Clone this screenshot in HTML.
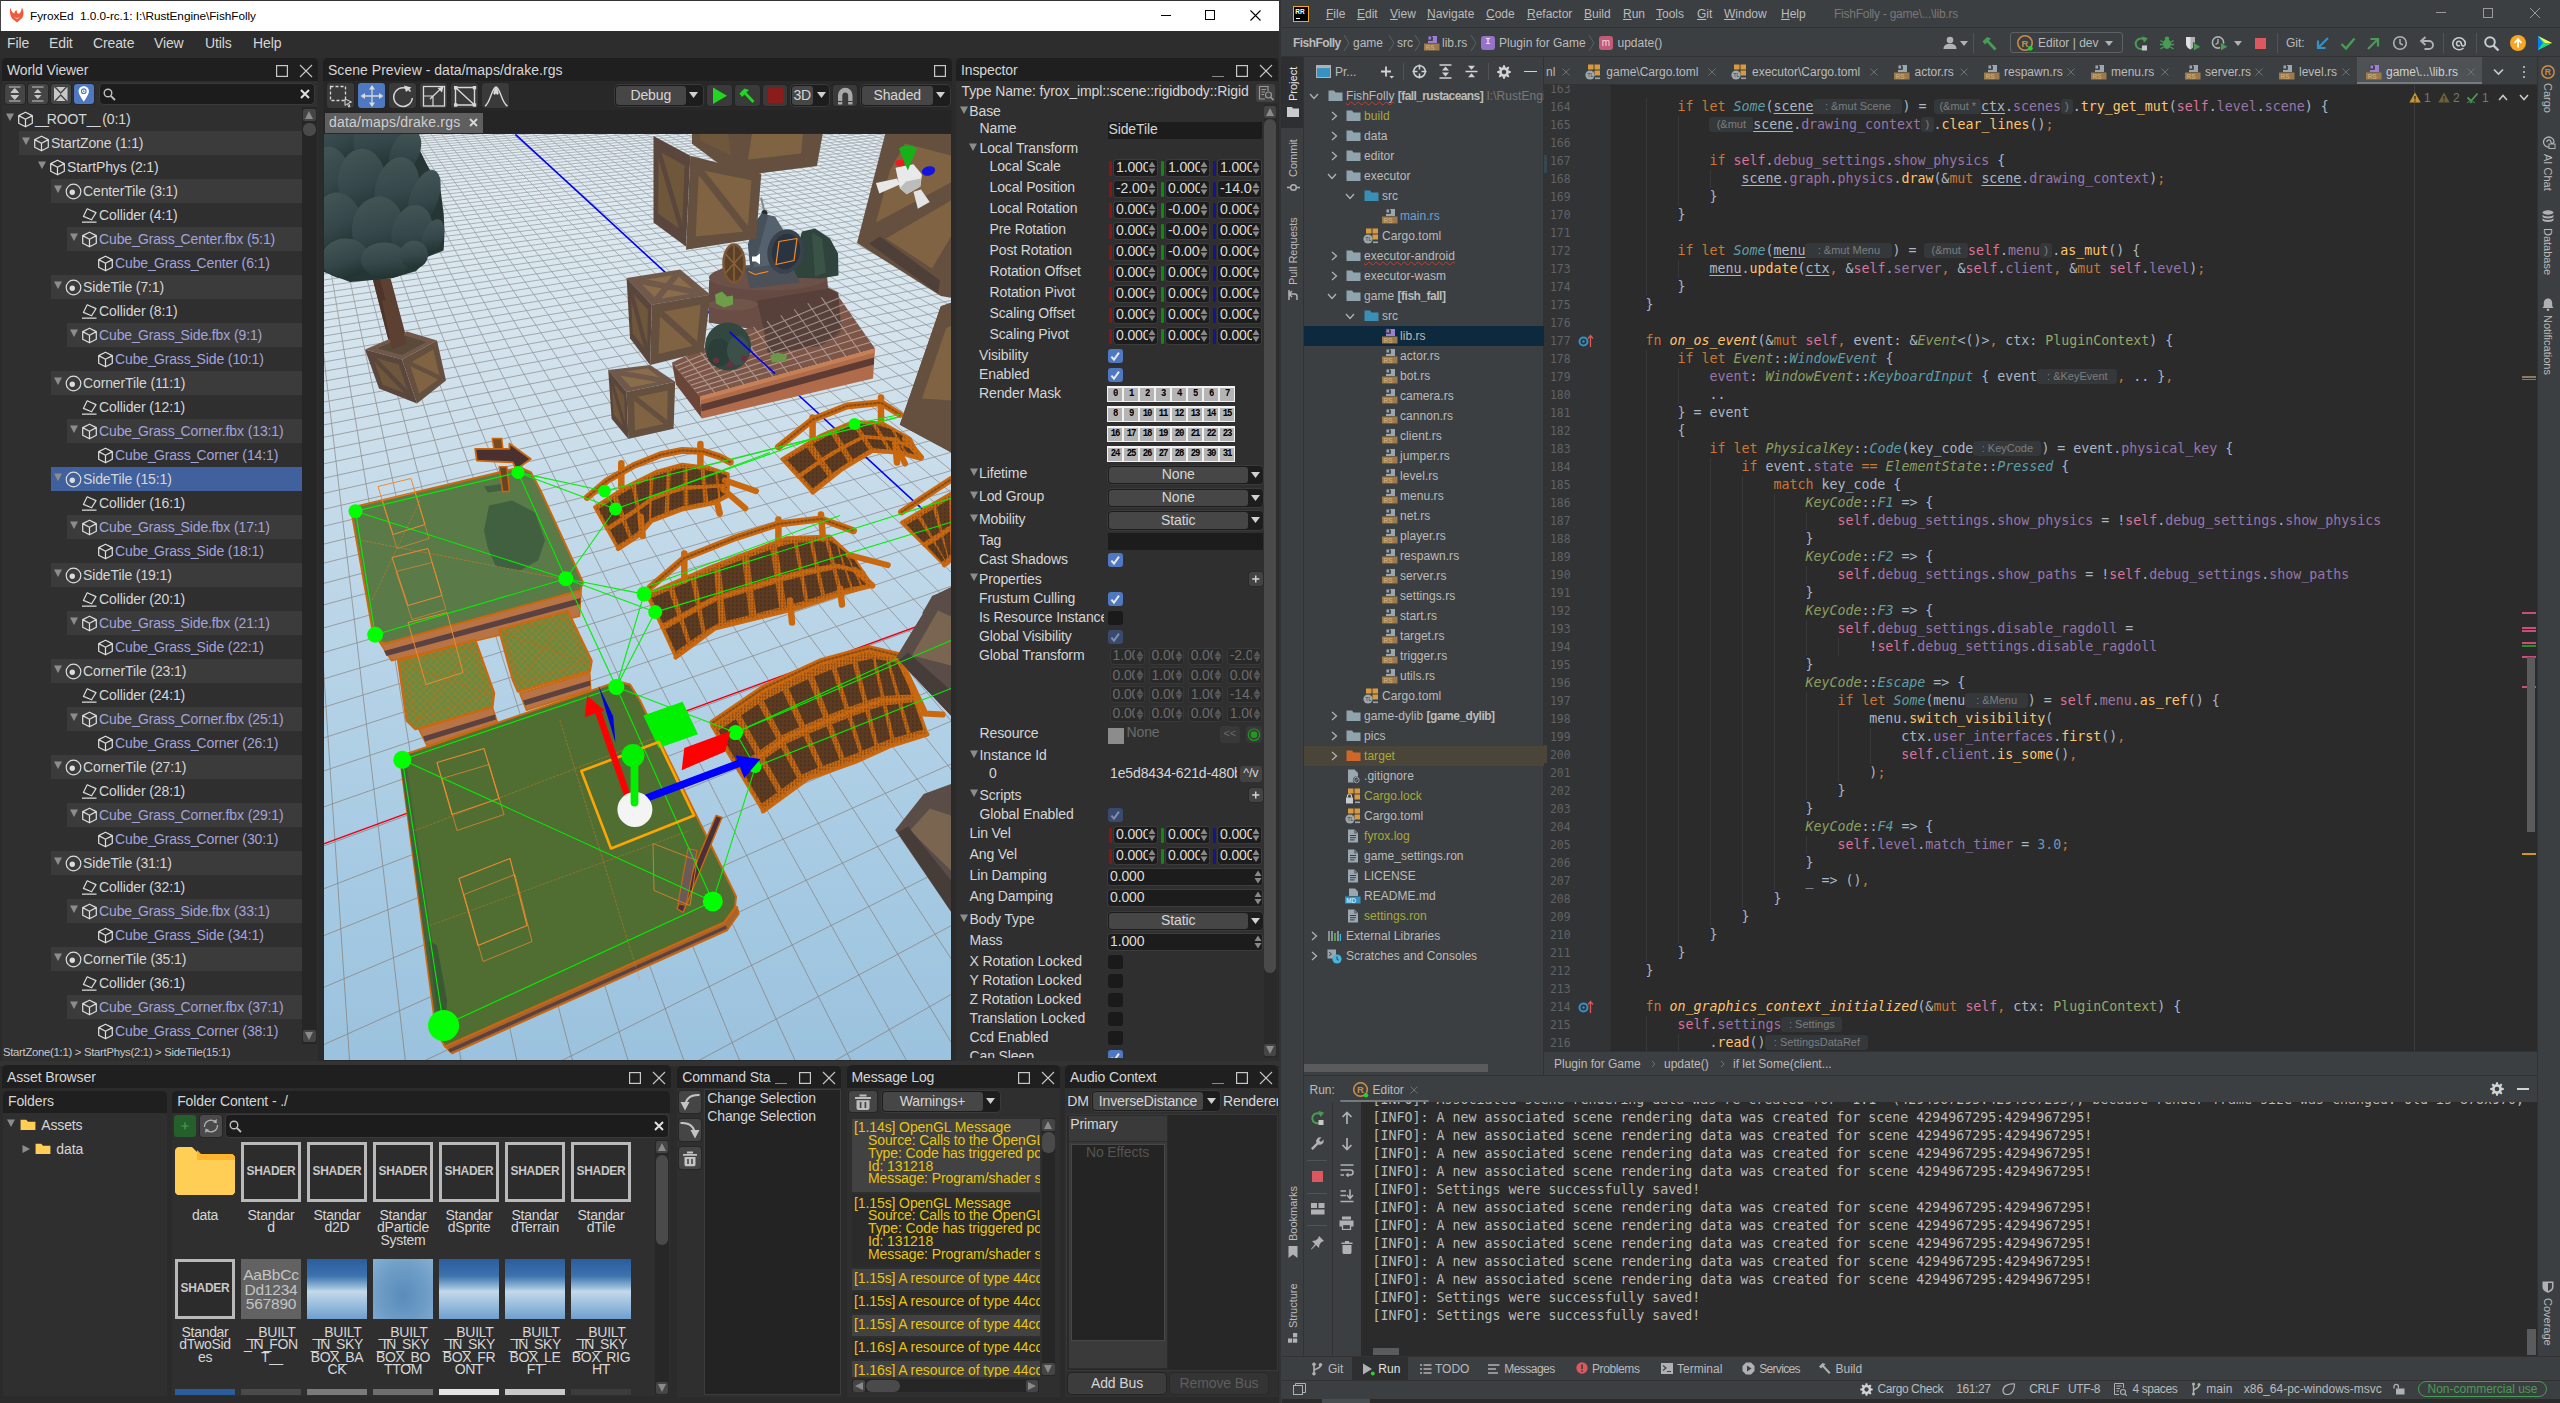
<!DOCTYPE html><html><head><meta charset="utf-8"><title>FyroxEd + RustRover</title><style>
html,body{margin:0;padding:0;background:#2b2b2b;}
#root{position:relative;width:2560px;height:1403px;overflow:hidden;background:#2b2b2b;font-family:"Liberation Sans",sans-serif;}
.a{position:absolute;}
.t{white-space:nowrap;display:block;}
.fy{font-size:14px;color:#d6d6d6;letter-spacing:-0.12px;margin-top:-0.8px;}
.us{letter-spacing:-1.9px;}
.ui{font-size:12px;color:#bbbbbb;}
.mono{font-family:"DejaVu Sans Mono","Liberation Mono",monospace;font-size:13.29px;}

.ui{font-size:12px;color:#bbbbbb;}
.code{font-family:"DejaVu Sans Mono","Liberation Mono",monospace;font-size:13.29px;color:#a9b7c6;white-space:pre;}
.k{color:#cc7832}.f{color:#ffc66d}.fd{color:#ffc66d;font-style:italic}.p{color:#9876aa}.s{color:#d9749c}
.e{color:#5f9ea8;font-style:italic}.ty{color:#8a9f62;font-style:italic}.tn{color:#98a866}.n{color:#6897bb}.u{text-decoration:underline;text-underline-offset:2px}
.h{display:inline-block;font-family:"Liberation Sans",sans-serif;font-size:11px;color:#7a7e80;background:#35383a;border-radius:3px;text-align:center;height:15px;line-height:15px;vertical-align:top;margin-top:1.5px;overflow:hidden;font-style:normal;text-decoration:none;}
.ln{font-family:"DejaVu Sans Mono","Liberation Mono",monospace;font-size:11.4px;color:#606366;}
.vt{transform-origin:0 0;white-space:nowrap;}
</style></head><body><div id="root"><div class="a" style="left:0px;top:0px;width:1279px;height:31px;background:#ffffff;border-top:1px solid #333;border-left:1px solid #444;box-sizing:border-box;"></div><svg class="a" style="left:8px;top:6px;" width="18" height="18" viewBox="0 0 18 18"><path d="M2.2 1.5C3 5 4.4 6.6 6.2 7.6C6.6 5.6 7.4 4.6 8.6 4C8.4 6.4 9.6 7.6 11 7.8C12.6 6.6 13.6 4.2 13.8 1.2C16 5 16 9 14.2 12L9 16.6L4 12.4C2 9.6 1.4 5.4 2.2 1.5Z" fill="#f05a3c"/><path d="M5.6 10.4L9 13.6L12.4 10.4L9 12Z" fill="#fff" opacity=".55"/></svg><span class="a t " style="left:30px;top:6.5px;line-height:18px;height:18px;font-size:11.8px;color:#000;white-space:pre;letter-spacing:-0.05px;">FyroxEd  1.0.0-rc.1: I:\RustEngine\FishFolly</span><div class="a" style="left:1161px;top:15px;width:10px;height:1px;background:#000;"></div><div class="a" style="left:1205px;top:10px;width:10px;height:10px;border:1px solid #000;box-sizing:border-box;"></div><svg class="a" style="left:1250px;top:10px;" width="11" height="11" viewBox="0 0 11 11"><path d="M0.5 0.5L10.5 10.5M10.5 0.5L0.5 10.5" stroke="#000" stroke-width="1.1"/></svg><div class="a" style="left:0px;top:31px;width:1279px;height:27px;background:#2d2d2d;"></div><div class="a" style="left:0px;top:1060.5px;width:1279px;height:5px;background:#333333;"></div><span class="a t fy" style="left:7px;top:35px;line-height:18px;height:18px;">File</span><span class="a t fy" style="left:49px;top:35px;line-height:18px;height:18px;">Edit</span><span class="a t fy" style="left:93px;top:35px;line-height:18px;height:18px;">Create</span><span class="a t fy" style="left:154px;top:35px;line-height:18px;height:18px;">View</span><span class="a t fy" style="left:205px;top:35px;line-height:18px;height:18px;">Utils</span><span class="a t fy" style="left:253px;top:35px;line-height:18px;height:18px;">Help</span><div class="a" style="left:2px;top:59px;width:316px;height:1002px;background:#2f2f2f;border-radius:5px 5px 0 0;"></div><div class="a" style="left:2px;top:58.2px;width:316px;height:22.8px;background:#1f1f1f;border-radius:5px 5px 0 0;"></div><span class="a t fy" style="left:7px;top:61.5px;line-height:18px;height:18px;">World Viewer</span><svg class="a" style="left:299px;top:63.5px;" width="14" height="14" viewBox="0 0 14 14"><path d="M1 1L13 13M13 1L1 13" stroke="#c8c8c8" stroke-width="1.1" fill="none"/></svg><svg class="a" style="left:276px;top:64.5px;" width="12" height="12" viewBox="0 0 12 12"><rect x="0.6" y="0.6" width="10.8" height="10.8" stroke="#c8c8c8" stroke-width="1.2" fill="none"/></svg><div class="a" style="left:5px;top:84px;width:19.5px;height:20px;background:#454545;border-radius:3px;box-shadow:0 0 0 1px #262626;"></div><div class="a" style="left:28px;top:84px;width:19.5px;height:20px;background:#454545;border-radius:3px;box-shadow:0 0 0 1px #262626;"></div><div class="a" style="left:51px;top:84px;width:19.5px;height:20px;background:#454545;border-radius:3px;box-shadow:0 0 0 1px #262626;"></div><div class="a" style="left:74px;top:84px;width:19.5px;height:20px;background:#4f78c2;border-radius:3px;box-shadow:0 0 0 1px #262626;"></div><svg class="a" style="left:5px;top:84px;" width="19.5" height="20" viewBox="0 0 19.5 20"><path d="M4 3H15.5M4 17H15.5M9.75 4.5L6 8.5H13.5ZM9.75 15.5L6 11.5H13.5Z" stroke="#c8c8c8" fill="#c8c8c8" stroke-width="1"/></svg><svg class="a" style="left:28px;top:84px;" width="19.5" height="20" viewBox="0 0 19.5 20"><path d="M4 3H15.5M4 17H15.5" stroke="#c8c8c8" stroke-width="1.2"/><path d="M9.75 5L6 9H13.5ZM9.75 15L6 11H13.5Z" fill="#c8c8c8"/></svg><svg class="a" style="left:51px;top:84px;" width="19.5" height="20" viewBox="0 0 19.5 20"><path d="M3 3L9.75 10L3 17ZM16.5 3L9.75 10L16.5 17ZM5 3H14.5L9.75 8ZM5 17H14.5L9.75 12Z" fill="#c8c8c8"/></svg><svg class="a" style="left:74px;top:84px;" width="19.5" height="20" viewBox="0 0 19.5 20"><path d="M9.75 2.2C6.6 2.2 4.6 4.5 4.6 7.2C4.6 10.8 9.75 17.5 9.75 17.5C9.75 17.5 14.9 10.8 14.9 7.2C14.9 4.5 12.9 2.2 9.75 2.2Z" fill="#fff"/><circle cx="9.75" cy="7.2" r="2.3" fill="none" stroke="#4f78c2" stroke-width="1.1"/><circle cx="9.75" cy="7.2" r=".8" fill="#4f78c2"/></svg><div class="a" style="left:99.5px;top:84px;width:214.5px;height:20px;background:#1c1c1c;border-radius:4px;box-shadow:0 0 0 1px #3a3a3a;"></div><svg class="a" style="left:102px;top:87px;" width="15" height="15" viewBox="0 0 15 15"><circle cx="6" cy="6" r="3.8" stroke="#c0c0c0" stroke-width="1.4" fill="none"/><path d="M8.8 8.8L13 13" stroke="#c0c0c0" stroke-width="1.8"/></svg><svg class="a" style="left:300px;top:89px;" width="10" height="10" viewBox="0 0 10 10"><path d="M1 1L9 9M9 1L1 9" stroke="#e0e0e0" stroke-width="2"/></svg><svg class="a" style="left:6px;top:113.3px;" width="8" height="8" viewBox="0 0 8 8"><path d="M0 0.5H8L4 8Z" fill="#8c8c8c"/></svg><svg class="a" style="left:16.5px;top:110.8px;" width="17" height="17" viewBox="0 0 17 17"><path d="M8.5 1.2L15.3 4.6V12.2L8.5 15.8L1.7 12.2V4.6Z M1.7 4.6L8.5 8.2L15.3 4.6 M8.5 8.2V15.8" stroke="#dcdcdc" stroke-width="1.25" fill="none" stroke-linejoin="round"/></svg><span class="a t fy" style="left:35px;top:109.3px;line-height:20px;height:20px;color:#d6d6d6;"><span class="us">_</span><span class="us">_</span>ROOT<span class="us">_</span><span class="us">_</span> (0:1)</span><div class="a" style="left:19px;top:131px;width:282.5px;height:24px;background:#3b3b3b;"></div><svg class="a" style="left:22px;top:137.3px;" width="8" height="8" viewBox="0 0 8 8"><path d="M0 0.5H8L4 8Z" fill="#8c8c8c"/></svg><svg class="a" style="left:32.5px;top:134.8px;" width="17" height="17" viewBox="0 0 17 17"><path d="M8.5 1.2L15.3 4.6V12.2L8.5 15.8L1.7 12.2V4.6Z M1.7 4.6L8.5 8.2L15.3 4.6 M8.5 8.2V15.8" stroke="#dcdcdc" stroke-width="1.25" fill="none" stroke-linejoin="round"/></svg><span class="a t fy" style="left:51px;top:133.3px;line-height:20px;height:20px;color:#d6d6d6;">StartZone (1:1)</span><svg class="a" style="left:38px;top:161.3px;" width="8" height="8" viewBox="0 0 8 8"><path d="M0 0.5H8L4 8Z" fill="#8c8c8c"/></svg><svg class="a" style="left:48.5px;top:158.8px;" width="17" height="17" viewBox="0 0 17 17"><path d="M8.5 1.2L15.3 4.6V12.2L8.5 15.8L1.7 12.2V4.6Z M1.7 4.6L8.5 8.2L15.3 4.6 M8.5 8.2V15.8" stroke="#dcdcdc" stroke-width="1.25" fill="none" stroke-linejoin="round"/></svg><span class="a t fy" style="left:67px;top:157.3px;line-height:20px;height:20px;color:#d6d6d6;">StartPhys (2:1)</span><div class="a" style="left:51px;top:179px;width:250.5px;height:24px;background:#3b3b3b;"></div><svg class="a" style="left:54px;top:185.3px;" width="8" height="8" viewBox="0 0 8 8"><path d="M0 0.5H8L4 8Z" fill="#8c8c8c"/></svg><svg class="a" style="left:64.5px;top:182.8px;" width="17" height="17" viewBox="0 0 17 17"><circle cx="8.5" cy="8.5" r="7.3" stroke="#dcdcdc" stroke-width="1.2" fill="none"/><circle cx="7.3" cy="9.3" r="2.7" fill="#dcdcdc"/></svg><span class="a t fy" style="left:83px;top:181.3px;line-height:20px;height:20px;color:#d6d6d6;">CenterTile (3:1)</span><svg class="a" style="left:80.5px;top:206.8px;" width="17" height="17" viewBox="0 0 17 17"><path d="M6.2 1.8L15 5.6L10.6 12.8L2.4 9.4Z M1 15.2H15.5" stroke="#dcdcdc" stroke-width="1.2" fill="none" stroke-linejoin="round"/></svg><span class="a t fy" style="left:99px;top:205.3px;line-height:20px;height:20px;color:#d6d6d6;">Collider (4:1)</span><div class="a" style="left:67px;top:227px;width:234.5px;height:24px;background:#3b3b3b;"></div><svg class="a" style="left:70px;top:233.3px;" width="8" height="8" viewBox="0 0 8 8"><path d="M0 0.5H8L4 8Z" fill="#8c8c8c"/></svg><svg class="a" style="left:80.5px;top:230.8px;" width="17" height="17" viewBox="0 0 17 17"><path d="M8.5 1.2L15.3 4.6V12.2L8.5 15.8L1.7 12.2V4.6Z M1.7 4.6L8.5 8.2L15.3 4.6 M8.5 8.2V15.8" stroke="#dcdcdc" stroke-width="1.25" fill="none" stroke-linejoin="round"/></svg><span class="a t fy" style="left:99px;top:229.3px;line-height:20px;height:20px;color:#a3a3dc;">Cube<span class="us">_</span>Grass<span class="us">_</span>Center.fbx (5:1)</span><svg class="a" style="left:96.5px;top:254.8px;" width="17" height="17" viewBox="0 0 17 17"><path d="M8.5 1.2L15.3 4.6V12.2L8.5 15.8L1.7 12.2V4.6Z M1.7 4.6L8.5 8.2L15.3 4.6 M8.5 8.2V15.8" stroke="#dcdcdc" stroke-width="1.25" fill="none" stroke-linejoin="round"/></svg><span class="a t fy" style="left:115px;top:253.3px;line-height:20px;height:20px;color:#a3a3dc;">Cube<span class="us">_</span>Grass<span class="us">_</span>Center (6:1)</span><div class="a" style="left:51px;top:275px;width:250.5px;height:24px;background:#3b3b3b;"></div><svg class="a" style="left:54px;top:281.3px;" width="8" height="8" viewBox="0 0 8 8"><path d="M0 0.5H8L4 8Z" fill="#8c8c8c"/></svg><svg class="a" style="left:64.5px;top:278.8px;" width="17" height="17" viewBox="0 0 17 17"><circle cx="8.5" cy="8.5" r="7.3" stroke="#dcdcdc" stroke-width="1.2" fill="none"/><circle cx="7.3" cy="9.3" r="2.7" fill="#dcdcdc"/></svg><span class="a t fy" style="left:83px;top:277.3px;line-height:20px;height:20px;color:#d6d6d6;">SideTile (7:1)</span><svg class="a" style="left:80.5px;top:302.8px;" width="17" height="17" viewBox="0 0 17 17"><path d="M6.2 1.8L15 5.6L10.6 12.8L2.4 9.4Z M1 15.2H15.5" stroke="#dcdcdc" stroke-width="1.2" fill="none" stroke-linejoin="round"/></svg><span class="a t fy" style="left:99px;top:301.3px;line-height:20px;height:20px;color:#d6d6d6;">Collider (8:1)</span><div class="a" style="left:67px;top:323px;width:234.5px;height:24px;background:#3b3b3b;"></div><svg class="a" style="left:70px;top:329.3px;" width="8" height="8" viewBox="0 0 8 8"><path d="M0 0.5H8L4 8Z" fill="#8c8c8c"/></svg><svg class="a" style="left:80.5px;top:326.8px;" width="17" height="17" viewBox="0 0 17 17"><path d="M8.5 1.2L15.3 4.6V12.2L8.5 15.8L1.7 12.2V4.6Z M1.7 4.6L8.5 8.2L15.3 4.6 M8.5 8.2V15.8" stroke="#dcdcdc" stroke-width="1.25" fill="none" stroke-linejoin="round"/></svg><span class="a t fy" style="left:99px;top:325.3px;line-height:20px;height:20px;color:#a3a3dc;">Cube<span class="us">_</span>Grass<span class="us">_</span>Side.fbx (9:1)</span><svg class="a" style="left:96.5px;top:350.8px;" width="17" height="17" viewBox="0 0 17 17"><path d="M8.5 1.2L15.3 4.6V12.2L8.5 15.8L1.7 12.2V4.6Z M1.7 4.6L8.5 8.2L15.3 4.6 M8.5 8.2V15.8" stroke="#dcdcdc" stroke-width="1.25" fill="none" stroke-linejoin="round"/></svg><span class="a t fy" style="left:115px;top:349.3px;line-height:20px;height:20px;color:#a3a3dc;">Cube<span class="us">_</span>Grass<span class="us">_</span>Side (10:1)</span><div class="a" style="left:51px;top:371px;width:250.5px;height:24px;background:#3b3b3b;"></div><svg class="a" style="left:54px;top:377.3px;" width="8" height="8" viewBox="0 0 8 8"><path d="M0 0.5H8L4 8Z" fill="#8c8c8c"/></svg><svg class="a" style="left:64.5px;top:374.8px;" width="17" height="17" viewBox="0 0 17 17"><circle cx="8.5" cy="8.5" r="7.3" stroke="#dcdcdc" stroke-width="1.2" fill="none"/><circle cx="7.3" cy="9.3" r="2.7" fill="#dcdcdc"/></svg><span class="a t fy" style="left:83px;top:373.3px;line-height:20px;height:20px;color:#d6d6d6;">CornerTile (11:1)</span><svg class="a" style="left:80.5px;top:398.8px;" width="17" height="17" viewBox="0 0 17 17"><path d="M6.2 1.8L15 5.6L10.6 12.8L2.4 9.4Z M1 15.2H15.5" stroke="#dcdcdc" stroke-width="1.2" fill="none" stroke-linejoin="round"/></svg><span class="a t fy" style="left:99px;top:397.3px;line-height:20px;height:20px;color:#d6d6d6;">Collider (12:1)</span><div class="a" style="left:67px;top:419px;width:234.5px;height:24px;background:#3b3b3b;"></div><svg class="a" style="left:70px;top:425.3px;" width="8" height="8" viewBox="0 0 8 8"><path d="M0 0.5H8L4 8Z" fill="#8c8c8c"/></svg><svg class="a" style="left:80.5px;top:422.8px;" width="17" height="17" viewBox="0 0 17 17"><path d="M8.5 1.2L15.3 4.6V12.2L8.5 15.8L1.7 12.2V4.6Z M1.7 4.6L8.5 8.2L15.3 4.6 M8.5 8.2V15.8" stroke="#dcdcdc" stroke-width="1.25" fill="none" stroke-linejoin="round"/></svg><span class="a t fy" style="left:99px;top:421.3px;line-height:20px;height:20px;color:#a3a3dc;">Cube<span class="us">_</span>Grass<span class="us">_</span>Corner.fbx (13:1)</span><svg class="a" style="left:96.5px;top:446.8px;" width="17" height="17" viewBox="0 0 17 17"><path d="M8.5 1.2L15.3 4.6V12.2L8.5 15.8L1.7 12.2V4.6Z M1.7 4.6L8.5 8.2L15.3 4.6 M8.5 8.2V15.8" stroke="#dcdcdc" stroke-width="1.25" fill="none" stroke-linejoin="round"/></svg><span class="a t fy" style="left:115px;top:445.3px;line-height:20px;height:20px;color:#a3a3dc;">Cube<span class="us">_</span>Grass<span class="us">_</span>Corner (14:1)</span><div class="a" style="left:51px;top:467px;width:250.5px;height:24px;background:#40619d;"></div><svg class="a" style="left:54px;top:473.3px;" width="8" height="8" viewBox="0 0 8 8"><path d="M0 0.5H8L4 8Z" fill="#8c8c8c"/></svg><svg class="a" style="left:64.5px;top:470.8px;" width="17" height="17" viewBox="0 0 17 17"><circle cx="8.5" cy="8.5" r="7.3" stroke="#dcdcdc" stroke-width="1.2" fill="none"/><circle cx="7.3" cy="9.3" r="2.7" fill="#dcdcdc"/></svg><span class="a t fy" style="left:83px;top:469.3px;line-height:20px;height:20px;color:#d6d6d6;">SideTile (15:1)</span><svg class="a" style="left:80.5px;top:494.8px;" width="17" height="17" viewBox="0 0 17 17"><path d="M6.2 1.8L15 5.6L10.6 12.8L2.4 9.4Z M1 15.2H15.5" stroke="#dcdcdc" stroke-width="1.2" fill="none" stroke-linejoin="round"/></svg><span class="a t fy" style="left:99px;top:493.3px;line-height:20px;height:20px;color:#d6d6d6;">Collider (16:1)</span><div class="a" style="left:67px;top:515px;width:234.5px;height:24px;background:#3b3b3b;"></div><svg class="a" style="left:70px;top:521.3px;" width="8" height="8" viewBox="0 0 8 8"><path d="M0 0.5H8L4 8Z" fill="#8c8c8c"/></svg><svg class="a" style="left:80.5px;top:518.8px;" width="17" height="17" viewBox="0 0 17 17"><path d="M8.5 1.2L15.3 4.6V12.2L8.5 15.8L1.7 12.2V4.6Z M1.7 4.6L8.5 8.2L15.3 4.6 M8.5 8.2V15.8" stroke="#dcdcdc" stroke-width="1.25" fill="none" stroke-linejoin="round"/></svg><span class="a t fy" style="left:99px;top:517.3px;line-height:20px;height:20px;color:#a3a3dc;">Cube<span class="us">_</span>Grass<span class="us">_</span>Side.fbx (17:1)</span><svg class="a" style="left:96.5px;top:542.8px;" width="17" height="17" viewBox="0 0 17 17"><path d="M8.5 1.2L15.3 4.6V12.2L8.5 15.8L1.7 12.2V4.6Z M1.7 4.6L8.5 8.2L15.3 4.6 M8.5 8.2V15.8" stroke="#dcdcdc" stroke-width="1.25" fill="none" stroke-linejoin="round"/></svg><span class="a t fy" style="left:115px;top:541.3px;line-height:20px;height:20px;color:#a3a3dc;">Cube<span class="us">_</span>Grass<span class="us">_</span>Side (18:1)</span><div class="a" style="left:51px;top:563px;width:250.5px;height:24px;background:#3b3b3b;"></div><svg class="a" style="left:54px;top:569.3px;" width="8" height="8" viewBox="0 0 8 8"><path d="M0 0.5H8L4 8Z" fill="#8c8c8c"/></svg><svg class="a" style="left:64.5px;top:566.8px;" width="17" height="17" viewBox="0 0 17 17"><circle cx="8.5" cy="8.5" r="7.3" stroke="#dcdcdc" stroke-width="1.2" fill="none"/><circle cx="7.3" cy="9.3" r="2.7" fill="#dcdcdc"/></svg><span class="a t fy" style="left:83px;top:565.3px;line-height:20px;height:20px;color:#d6d6d6;">SideTile (19:1)</span><svg class="a" style="left:80.5px;top:590.8px;" width="17" height="17" viewBox="0 0 17 17"><path d="M6.2 1.8L15 5.6L10.6 12.8L2.4 9.4Z M1 15.2H15.5" stroke="#dcdcdc" stroke-width="1.2" fill="none" stroke-linejoin="round"/></svg><span class="a t fy" style="left:99px;top:589.3px;line-height:20px;height:20px;color:#d6d6d6;">Collider (20:1)</span><div class="a" style="left:67px;top:611px;width:234.5px;height:24px;background:#3b3b3b;"></div><svg class="a" style="left:70px;top:617.3px;" width="8" height="8" viewBox="0 0 8 8"><path d="M0 0.5H8L4 8Z" fill="#8c8c8c"/></svg><svg class="a" style="left:80.5px;top:614.8px;" width="17" height="17" viewBox="0 0 17 17"><path d="M8.5 1.2L15.3 4.6V12.2L8.5 15.8L1.7 12.2V4.6Z M1.7 4.6L8.5 8.2L15.3 4.6 M8.5 8.2V15.8" stroke="#dcdcdc" stroke-width="1.25" fill="none" stroke-linejoin="round"/></svg><span class="a t fy" style="left:99px;top:613.3px;line-height:20px;height:20px;color:#a3a3dc;">Cube<span class="us">_</span>Grass<span class="us">_</span>Side.fbx (21:1)</span><svg class="a" style="left:96.5px;top:638.8px;" width="17" height="17" viewBox="0 0 17 17"><path d="M8.5 1.2L15.3 4.6V12.2L8.5 15.8L1.7 12.2V4.6Z M1.7 4.6L8.5 8.2L15.3 4.6 M8.5 8.2V15.8" stroke="#dcdcdc" stroke-width="1.25" fill="none" stroke-linejoin="round"/></svg><span class="a t fy" style="left:115px;top:637.3px;line-height:20px;height:20px;color:#a3a3dc;">Cube<span class="us">_</span>Grass<span class="us">_</span>Side (22:1)</span><div class="a" style="left:51px;top:659px;width:250.5px;height:24px;background:#3b3b3b;"></div><svg class="a" style="left:54px;top:665.3px;" width="8" height="8" viewBox="0 0 8 8"><path d="M0 0.5H8L4 8Z" fill="#8c8c8c"/></svg><svg class="a" style="left:64.5px;top:662.8px;" width="17" height="17" viewBox="0 0 17 17"><circle cx="8.5" cy="8.5" r="7.3" stroke="#dcdcdc" stroke-width="1.2" fill="none"/><circle cx="7.3" cy="9.3" r="2.7" fill="#dcdcdc"/></svg><span class="a t fy" style="left:83px;top:661.3px;line-height:20px;height:20px;color:#d6d6d6;">CornerTile (23:1)</span><svg class="a" style="left:80.5px;top:686.8px;" width="17" height="17" viewBox="0 0 17 17"><path d="M6.2 1.8L15 5.6L10.6 12.8L2.4 9.4Z M1 15.2H15.5" stroke="#dcdcdc" stroke-width="1.2" fill="none" stroke-linejoin="round"/></svg><span class="a t fy" style="left:99px;top:685.3px;line-height:20px;height:20px;color:#d6d6d6;">Collider (24:1)</span><div class="a" style="left:67px;top:707px;width:234.5px;height:24px;background:#3b3b3b;"></div><svg class="a" style="left:70px;top:713.3px;" width="8" height="8" viewBox="0 0 8 8"><path d="M0 0.5H8L4 8Z" fill="#8c8c8c"/></svg><svg class="a" style="left:80.5px;top:710.8px;" width="17" height="17" viewBox="0 0 17 17"><path d="M8.5 1.2L15.3 4.6V12.2L8.5 15.8L1.7 12.2V4.6Z M1.7 4.6L8.5 8.2L15.3 4.6 M8.5 8.2V15.8" stroke="#dcdcdc" stroke-width="1.25" fill="none" stroke-linejoin="round"/></svg><span class="a t fy" style="left:99px;top:709.3px;line-height:20px;height:20px;color:#a3a3dc;">Cube<span class="us">_</span>Grass<span class="us">_</span>Corner.fbx (25:1)</span><svg class="a" style="left:96.5px;top:734.8px;" width="17" height="17" viewBox="0 0 17 17"><path d="M8.5 1.2L15.3 4.6V12.2L8.5 15.8L1.7 12.2V4.6Z M1.7 4.6L8.5 8.2L15.3 4.6 M8.5 8.2V15.8" stroke="#dcdcdc" stroke-width="1.25" fill="none" stroke-linejoin="round"/></svg><span class="a t fy" style="left:115px;top:733.3px;line-height:20px;height:20px;color:#a3a3dc;">Cube<span class="us">_</span>Grass<span class="us">_</span>Corner (26:1)</span><div class="a" style="left:51px;top:755px;width:250.5px;height:24px;background:#3b3b3b;"></div><svg class="a" style="left:54px;top:761.3px;" width="8" height="8" viewBox="0 0 8 8"><path d="M0 0.5H8L4 8Z" fill="#8c8c8c"/></svg><svg class="a" style="left:64.5px;top:758.8px;" width="17" height="17" viewBox="0 0 17 17"><circle cx="8.5" cy="8.5" r="7.3" stroke="#dcdcdc" stroke-width="1.2" fill="none"/><circle cx="7.3" cy="9.3" r="2.7" fill="#dcdcdc"/></svg><span class="a t fy" style="left:83px;top:757.3px;line-height:20px;height:20px;color:#d6d6d6;">CornerTile (27:1)</span><svg class="a" style="left:80.5px;top:782.8px;" width="17" height="17" viewBox="0 0 17 17"><path d="M6.2 1.8L15 5.6L10.6 12.8L2.4 9.4Z M1 15.2H15.5" stroke="#dcdcdc" stroke-width="1.2" fill="none" stroke-linejoin="round"/></svg><span class="a t fy" style="left:99px;top:781.3px;line-height:20px;height:20px;color:#d6d6d6;">Collider (28:1)</span><div class="a" style="left:67px;top:803px;width:234.5px;height:24px;background:#3b3b3b;"></div><svg class="a" style="left:70px;top:809.3px;" width="8" height="8" viewBox="0 0 8 8"><path d="M0 0.5H8L4 8Z" fill="#8c8c8c"/></svg><svg class="a" style="left:80.5px;top:806.8px;" width="17" height="17" viewBox="0 0 17 17"><path d="M8.5 1.2L15.3 4.6V12.2L8.5 15.8L1.7 12.2V4.6Z M1.7 4.6L8.5 8.2L15.3 4.6 M8.5 8.2V15.8" stroke="#dcdcdc" stroke-width="1.25" fill="none" stroke-linejoin="round"/></svg><span class="a t fy" style="left:99px;top:805.3px;line-height:20px;height:20px;color:#a3a3dc;">Cube<span class="us">_</span>Grass<span class="us">_</span>Corner.fbx (29:1)</span><svg class="a" style="left:96.5px;top:830.8px;" width="17" height="17" viewBox="0 0 17 17"><path d="M8.5 1.2L15.3 4.6V12.2L8.5 15.8L1.7 12.2V4.6Z M1.7 4.6L8.5 8.2L15.3 4.6 M8.5 8.2V15.8" stroke="#dcdcdc" stroke-width="1.25" fill="none" stroke-linejoin="round"/></svg><span class="a t fy" style="left:115px;top:829.3px;line-height:20px;height:20px;color:#a3a3dc;">Cube<span class="us">_</span>Grass<span class="us">_</span>Corner (30:1)</span><div class="a" style="left:51px;top:851px;width:250.5px;height:24px;background:#3b3b3b;"></div><svg class="a" style="left:54px;top:857.3px;" width="8" height="8" viewBox="0 0 8 8"><path d="M0 0.5H8L4 8Z" fill="#8c8c8c"/></svg><svg class="a" style="left:64.5px;top:854.8px;" width="17" height="17" viewBox="0 0 17 17"><circle cx="8.5" cy="8.5" r="7.3" stroke="#dcdcdc" stroke-width="1.2" fill="none"/><circle cx="7.3" cy="9.3" r="2.7" fill="#dcdcdc"/></svg><span class="a t fy" style="left:83px;top:853.3px;line-height:20px;height:20px;color:#d6d6d6;">SideTile (31:1)</span><svg class="a" style="left:80.5px;top:878.8px;" width="17" height="17" viewBox="0 0 17 17"><path d="M6.2 1.8L15 5.6L10.6 12.8L2.4 9.4Z M1 15.2H15.5" stroke="#dcdcdc" stroke-width="1.2" fill="none" stroke-linejoin="round"/></svg><span class="a t fy" style="left:99px;top:877.3px;line-height:20px;height:20px;color:#d6d6d6;">Collider (32:1)</span><div class="a" style="left:67px;top:899px;width:234.5px;height:24px;background:#3b3b3b;"></div><svg class="a" style="left:70px;top:905.3px;" width="8" height="8" viewBox="0 0 8 8"><path d="M0 0.5H8L4 8Z" fill="#8c8c8c"/></svg><svg class="a" style="left:80.5px;top:902.8px;" width="17" height="17" viewBox="0 0 17 17"><path d="M8.5 1.2L15.3 4.6V12.2L8.5 15.8L1.7 12.2V4.6Z M1.7 4.6L8.5 8.2L15.3 4.6 M8.5 8.2V15.8" stroke="#dcdcdc" stroke-width="1.25" fill="none" stroke-linejoin="round"/></svg><span class="a t fy" style="left:99px;top:901.3px;line-height:20px;height:20px;color:#a3a3dc;">Cube<span class="us">_</span>Grass<span class="us">_</span>Side.fbx (33:1)</span><svg class="a" style="left:96.5px;top:926.8px;" width="17" height="17" viewBox="0 0 17 17"><path d="M8.5 1.2L15.3 4.6V12.2L8.5 15.8L1.7 12.2V4.6Z M1.7 4.6L8.5 8.2L15.3 4.6 M8.5 8.2V15.8" stroke="#dcdcdc" stroke-width="1.25" fill="none" stroke-linejoin="round"/></svg><span class="a t fy" style="left:115px;top:925.3px;line-height:20px;height:20px;color:#a3a3dc;">Cube<span class="us">_</span>Grass<span class="us">_</span>Side (34:1)</span><div class="a" style="left:51px;top:947px;width:250.5px;height:24px;background:#3b3b3b;"></div><svg class="a" style="left:54px;top:953.3px;" width="8" height="8" viewBox="0 0 8 8"><path d="M0 0.5H8L4 8Z" fill="#8c8c8c"/></svg><svg class="a" style="left:64.5px;top:950.8px;" width="17" height="17" viewBox="0 0 17 17"><circle cx="8.5" cy="8.5" r="7.3" stroke="#dcdcdc" stroke-width="1.2" fill="none"/><circle cx="7.3" cy="9.3" r="2.7" fill="#dcdcdc"/></svg><span class="a t fy" style="left:83px;top:949.3px;line-height:20px;height:20px;color:#d6d6d6;">CornerTile (35:1)</span><svg class="a" style="left:80.5px;top:974.8px;" width="17" height="17" viewBox="0 0 17 17"><path d="M6.2 1.8L15 5.6L10.6 12.8L2.4 9.4Z M1 15.2H15.5" stroke="#dcdcdc" stroke-width="1.2" fill="none" stroke-linejoin="round"/></svg><span class="a t fy" style="left:99px;top:973.3px;line-height:20px;height:20px;color:#d6d6d6;">Collider (36:1)</span><div class="a" style="left:67px;top:995px;width:234.5px;height:24px;background:#3b3b3b;"></div><svg class="a" style="left:70px;top:1001.3px;" width="8" height="8" viewBox="0 0 8 8"><path d="M0 0.5H8L4 8Z" fill="#8c8c8c"/></svg><svg class="a" style="left:80.5px;top:998.8px;" width="17" height="17" viewBox="0 0 17 17"><path d="M8.5 1.2L15.3 4.6V12.2L8.5 15.8L1.7 12.2V4.6Z M1.7 4.6L8.5 8.2L15.3 4.6 M8.5 8.2V15.8" stroke="#dcdcdc" stroke-width="1.25" fill="none" stroke-linejoin="round"/></svg><span class="a t fy" style="left:99px;top:997.3px;line-height:20px;height:20px;color:#a3a3dc;">Cube<span class="us">_</span>Grass<span class="us">_</span>Corner.fbx (37:1)</span><svg class="a" style="left:96.5px;top:1022.8px;" width="17" height="17" viewBox="0 0 17 17"><path d="M8.5 1.2L15.3 4.6V12.2L8.5 15.8L1.7 12.2V4.6Z M1.7 4.6L8.5 8.2L15.3 4.6 M8.5 8.2V15.8" stroke="#dcdcdc" stroke-width="1.25" fill="none" stroke-linejoin="round"/></svg><span class="a t fy" style="left:115px;top:1021.3px;line-height:20px;height:20px;color:#a3a3dc;">Cube<span class="us">_</span>Grass<span class="us">_</span>Corner (38:1)</span><div class="a" style="left:302px;top:107px;width:14.5px;height:940px;background:#262626;"></div><div class="a" style="left:303px;top:109px;width:12.5px;height:12px;background:#454545;border-radius:2px;"></div><svg class="a" style="left:305px;top:111px;" width="8" height="8" viewBox="0 0 8 8"><path d="M4 0L8 8H0Z" fill="#8a8a8a"/></svg><div class="a" style="left:303px;top:123px;width:12.5px;height:13px;background:#4a4a4a;border-radius:6px;"></div><div class="a" style="left:303px;top:1030px;width:12.5px;height:12px;background:#454545;border-radius:2px;"></div><svg class="a" style="left:305px;top:1032px;" width="8" height="8" viewBox="0 0 8 8"><path d="M0 0H8L4 8Z" fill="#8a8a8a"/></svg><div class="a" style="left:2px;top:1044px;width:316px;height:17px;background:#2f2f2f;"></div><span class="a t " style="left:3px;top:1043px;line-height:18px;height:18px;font-size:11.3px;color:#c8c8c8;letter-spacing:-0.28px;">StartZone(1:1) &gt; StartPhys(2:1) &gt; SideTile(15:1)</span><div class="a" style="left:323px;top:59px;width:629px;height:1002px;background:#282828;border-radius:5px 5px 0 0;"></div><div class="a" style="left:323px;top:58.2px;width:629px;height:22.8px;background:#1f1f1f;border-radius:5px 5px 0 0;"></div><span class="a t fy" style="letter-spacing:0.03px;left:328px;top:61.5px;line-height:18px;height:18px;">Scene Preview - data/maps/drake.rgs</span><svg class="a" style="left:934px;top:64.5px;" width="12" height="12" viewBox="0 0 12 12"><rect x="0.6" y="0.6" width="10.8" height="10.8" stroke="#c8c8c8" stroke-width="1.2" fill="none"/></svg><div class="a" style="left:326.9px;top:83px;width:27.2px;height:25px;background:#3a3a3a;border-radius:3px;box-shadow:0 0 0 1px #252525;"></div><div class="a" style="left:357.9px;top:83px;width:27.2px;height:25px;background:#4f78c2;border-radius:3px;box-shadow:0 0 0 1px #252525;"></div><div class="a" style="left:388.9px;top:83px;width:27.2px;height:25px;background:#3a3a3a;border-radius:3px;box-shadow:0 0 0 1px #252525;"></div><div class="a" style="left:419.9px;top:83px;width:27.2px;height:25px;background:#3a3a3a;border-radius:3px;box-shadow:0 0 0 1px #252525;"></div><div class="a" style="left:450.9px;top:83px;width:27.2px;height:25px;background:#3a3a3a;border-radius:3px;box-shadow:0 0 0 1px #252525;"></div><div class="a" style="left:481.9px;top:83px;width:27.2px;height:25px;background:#3a3a3a;border-radius:3px;box-shadow:0 0 0 1px #252525;"></div><svg class="a" style="left:327.5px;top:83.5px;" width="26" height="24" viewBox="0 0 26 24"><rect x="2.5" y="2.5" width="15" height="14" fill="none" stroke="#d8d8d8" stroke-width="1.3" stroke-dasharray="3 2"/><path d="M17 15L23.5 18L20.5 19L22 22.5L20.8 23L19.3 19.6L17 21.5Z" fill="none" stroke="#d8d8d8" stroke-width="1"/></svg><svg class="a" style="left:358.5px;top:83.5px;" width="26" height="24" viewBox="0 0 26 24"><path d="M13 2V22M3 12H23" stroke="#d8d8d8" stroke-width="1.3"/><path d="M13 1L10 5.5H16ZM13 23L10 18.5H16ZM1.5 12L6 9V15ZM24.5 12L20 9V15Z" fill="#d8d8d8"/></svg><svg class="a" style="left:389.5px;top:83.5px;" width="26" height="24" viewBox="0 0 26 24"><path d="M20.5 7.5A9.3 9.3 0 1 0 22.3 14" stroke="#d8d8d8" stroke-width="1.5" fill="none"/><path d="M14 1.5L21.5 3.5L16 8Z" fill="#d8d8d8"/></svg><svg class="a" style="left:420.5px;top:83.5px;" width="26" height="24" viewBox="0 0 26 24"><rect x="2.5" y="2.5" width="21" height="19.5" fill="none" stroke="#d8d8d8" stroke-width="1.3"/><path d="M2.5 12H12V22M9 15L21 3.5" stroke="#d8d8d8" stroke-width="1.2" fill="none"/><path d="M22.5 2.5L16.5 4L21 8.5Z" fill="#d8d8d8"/></svg><svg class="a" style="left:451.5px;top:83.5px;" width="26" height="24" viewBox="0 0 26 24"><path d="M3.5 3.5H22.5V21H3.5ZM3.5 3.5L22.5 21" stroke="#d8d8d8" stroke-width="1.4" fill="none"/><g fill="#d8d8d8"><rect x="2" y="2" width="3.4" height="3.4"/><rect x="20.8" y="2" width="3.4" height="3.4"/><rect x="2" y="19.3" width="3.4" height="3.4"/><rect x="20.8" y="19.3" width="3.4" height="3.4"/></g></svg><svg class="a" style="left:482.5px;top:83.5px;" width="26" height="24" viewBox="0 0 26 24"><path d="M2 22C7 20 9 3 13 3C17 3 19 20 24.5 22" stroke="#d8d8d8" stroke-width="1.4" fill="none"/><path d="M10.2 9.5L11.8 11L13 9.6L14.3 11L15.8 9.5C15 5.5 14 3.3 13 3.3C12 3.3 11 5.5 10.2 9.5Z" fill="#d8d8d8"/></svg><div class="a" style="left:615px;top:85px;width:87.5px;height:20.5px;background:#1d1d1d;border-radius:4px;box-shadow:0 0 0 1px #3a3a3a;"></div><div class="a" style="left:616px;top:86px;width:69.5px;height:18.5px;background:#464646;border-radius:3px;"></div><span class="a t fy" style="left:615px;width:71.5px;text-align:center;top:86.75px;line-height:18px;height:18px;">Debug</span><svg class="a" style="left:689px;top:92.25px;" width="9" height="6" viewBox="0 0 9 6"><path d="M0 0H9L4.5 6Z" fill="#d0d0d0"/></svg><div class="a" style="left:706.5px;top:84.5px;width:25px;height:21.5px;background:#3a3a3a;border-radius:3px;box-shadow:0 0 0 1px #252525;"></div><svg class="a" style="left:706.5px;top:84.5px;" width="25" height="21.5" viewBox="0 0 25 21.5"><path d="M6 2.5V19L20 10.7Z" fill="#1fd81f"/></svg><div class="a" style="left:735px;top:84.5px;width:24.5px;height:21.5px;background:#3a3a3a;border-radius:3px;box-shadow:0 0 0 1px #252525;"></div><svg class="a" style="left:735px;top:84.5px;" width="24.5" height="21.5" viewBox="0 0 24.5 21.5"><path d="M4.5 8.5L9.5 3.5L14 5L11.5 7.5L19.5 16L17.5 18L9.5 9.5L7 12Z" fill="#1fd81f"/></svg><div class="a" style="left:763px;top:84.5px;width:24px;height:21.5px;background:#3a3a3a;border-radius:3px;box-shadow:0 0 0 1px #252525;"></div><div class="a" style="left:767.5px;top:88px;width:15px;height:14.5px;background:#8a1c1c;"></div><div class="a" style="left:790.5px;top:85px;width:38.5px;height:20.5px;background:#1d1d1d;border-radius:4px;box-shadow:0 0 0 1px #3a3a3a;"></div><div class="a" style="left:791.5px;top:86px;width:21.5px;height:18.5px;background:#464646;border-radius:3px;"></div><span class="a t fy" style="left:790.5px;width:23.5px;text-align:center;top:86.75px;line-height:18px;height:18px;">3D</span><svg class="a" style="left:816.5px;top:92.25px;" width="9" height="6" viewBox="0 0 9 6"><path d="M0 0H9L4.5 6Z" fill="#d0d0d0"/></svg><div class="a" style="left:832.5px;top:84.5px;width:24.5px;height:21.5px;background:#3a3a3a;border-radius:3px;box-shadow:0 0 0 1px #252525;"></div><svg class="a" style="left:832.5px;top:84.5px;" width="24.5" height="21.5" viewBox="0 0 24.5 21.5"><path d="M5 19.5V10A7.2 7.2 0 0 1 19.5 10V19.5H15.2V10A3 3 0 0 0 9.3 10V19.5Z" fill="#a8a8a8"/><path d="M5 16.5H9.3M15.2 16.5H19.5" stroke="#3a3a3a" stroke-width="1"/></svg><div class="a" style="left:861px;top:85px;width:88.5px;height:20.5px;background:#1d1d1d;border-radius:4px;box-shadow:0 0 0 1px #3a3a3a;"></div><div class="a" style="left:862px;top:86px;width:70.5px;height:18.5px;background:#464646;border-radius:3px;"></div><span class="a t fy" style="left:861px;width:72.5px;text-align:center;top:86.75px;line-height:18px;height:18px;">Shaded</span><svg class="a" style="left:936px;top:92.25px;" width="9" height="6" viewBox="0 0 9 6"><path d="M0 0H9L4.5 6Z" fill="#d0d0d0"/></svg><div class="a" style="left:324px;top:110px;width:627px;height:23px;background:#252525;"></div><div class="a" style="left:325px;top:112.5px;width:158px;height:20.5px;background:#5f5f5f;"></div><span class="a t fy" style="left:329px;top:113.3px;line-height:18px;height:18px;color:#cfcfcf;letter-spacing:0.2px;">data/maps/drake.rgs</span><svg class="a" style="left:469px;top:118px;" width="9" height="9" viewBox="0 0 9 9"><path d="M1 1L8 8M8 1L1 8" stroke="#d8d8d8" stroke-width="1.8"/></svg><svg class="a" style="left:324px;top:133.5px;" width="627" height="926.5" viewBox="324 133.5 627 926.5"><defs><linearGradient id="sky" x1="0" y1="0" x2="0" y2="1"><stop offset="0" stop-color="#e3edf2"/><stop offset=".25" stop-color="#d2e2ec"/><stop offset=".5" stop-color="#bcd6e8"/><stop offset=".75" stop-color="#a9cce4"/><stop offset="1" stop-color="#9bc2de"/></linearGradient><linearGradient id="lobe" x1="0.3" y1="0" x2="0.6" y2="1"><stop offset="0" stop-color="#435554"/><stop offset=".55" stop-color="#35474a"/><stop offset="1" stop-color="#223230"/></linearGradient><pattern id="wire" width="3" height="3" patternUnits="userSpaceOnUse"><rect width="3" height="3" fill="#c9680f"/><rect x="0" y="0" width="1.4" height="1.4" fill="#5a3a22"/></pattern><linearGradient id="gridg" gradientUnits="userSpaceOnUse" x1="0" y1="133" x2="0" y2="1060"><stop offset="0" stop-color="#a4acb2"/><stop offset=".3" stop-color="#949698"/><stop offset="1" stop-color="#8c8782"/></linearGradient><pattern id="hatch" width="7" height="7" patternUnits="userSpaceOnUse"><path d="M0 7L7 0M-1 1L1 -1M6 8L8 6M0 0L7 7" stroke="#d8741a" stroke-width=".8" fill="none"/></pattern><pattern id="wire2" width="4" height="4" patternUnits="userSpaceOnUse"><rect width="4" height="4" fill="#c9680f" fill-opacity=".55"/><rect x="0" y="0" width="1.6" height="1.6" fill="#3a2a20" fill-opacity=".7"/></pattern></defs><rect x="323" y="133" width="628" height="927" fill="url(#sky)"/><path d="M350.2 1070.0L313.0 510.7M406.5 1070.0L313.0 262.1M462.7 1070.0L313.0 161.6M518.9 1070.0L316.4 123.0M575.1 1070.0L326.1 123.0M631.3 1070.0L335.8 123.0M687.5 1070.0L345.5 123.0M743.7 1070.0L355.2 123.0M799.8 1070.0L364.9 123.0M856.0 1070.0L374.6 123.0M912.1 1070.0L384.4 123.0M961.0 1058.0L394.1 123.0M961.0 973.3L403.8 123.0M961.0 900.4L413.5 123.0M961.0 836.9L423.2 123.0M961.0 781.2L432.9 123.0M961.0 732.0L442.6 123.0M961.0 688.1L452.3 123.0M961.0 648.7L461.9 123.0M961.0 613.3L471.6 123.0M961.0 581.1L481.3 123.0M961.0 551.8L491.0 123.0M961.0 525.0L500.7 123.0M961.0 500.4L510.4 123.0M961.0 477.8L520.1 123.0M961.0 456.9L529.7 123.0M961.0 437.5L539.4 123.0M961.0 419.5L549.1 123.0M961.0 402.7L558.8 123.0M961.0 387.0L568.4 123.0M961.0 372.3L578.1 123.0M961.0 358.5L587.8 123.0M961.0 345.5L597.5 123.0M961.0 333.3L607.1 123.0M961.0 321.8L616.8 123.0M961.0 310.9L626.4 123.0M961.0 300.7L636.1 123.0M961.0 290.9L645.8 123.0M961.0 281.6L655.4 123.0M961.0 272.8L665.1 123.0M961.0 264.5L674.7 123.0M961.0 256.5L684.4 123.0M961.0 248.9L694.0 123.0M961.0 241.6L703.7 123.0M961.0 234.6L713.3 123.0M961.0 228.0L723.0 123.0M961.0 221.6L732.6 123.0M961.0 215.5L742.2 123.0M961.0 209.6L751.9 123.0M961.0 204.0L761.5 123.0M961.0 198.6L771.1 123.0M961.0 193.4L780.8 123.0M961.0 188.4L790.4 123.0M961.0 183.6L800.0 123.0M961.0 178.9L809.7 123.0M961.0 174.5L819.3 123.0M961.0 170.1L828.9 123.0M961.0 166.0L838.5 123.0M961.0 161.9L848.1 123.0M961.0 158.0L857.8 123.0M961.0 154.2L867.4 123.0M961.0 150.6L877.0 123.0M961.0 147.0L886.6 123.0M961.0 143.6L896.2 123.0M961.0 140.3L905.8 123.0M961.0 137.1L915.4 123.0M961.0 133.9L925.0 123.0M961.0 130.9L934.6 123.0M961.0 128.0L944.2 123.0M961.0 125.1L953.8 123.0M955.6 1070.0L961.0 1066.7M817.8 1070.0L961.0 988.3M679.9 1070.0L961.0 919.9M542.0 1070.0L961.0 859.8M403.9 1070.0L961.0 806.6M313.0 1048.9L961.0 759.1M313.0 991.4L961.0 716.5M313.0 939.5L961.0 678.0M313.0 892.4L961.0 643.1M313.0 849.4L961.0 611.3M313.0 810.2L961.0 582.2M313.0 774.1L961.0 555.5M313.0 740.9L961.0 530.9M313.0 710.1L961.0 508.1M313.0 681.6L961.0 486.9M313.0 655.1L961.0 467.3M313.0 630.4L961.0 449.0M313.0 607.3L961.0 431.9M313.0 585.7L961.0 415.8M313.0 565.4L961.0 400.8M313.0 546.3L961.0 386.7M313.0 528.3L961.0 373.3M313.0 511.3L961.0 360.7M313.0 495.3L961.0 348.9M313.0 480.1L961.0 337.6M313.0 465.7L961.0 326.9M313.0 452.0L961.0 316.8M313.0 439.0L961.0 307.2M313.0 426.6L961.0 298.0M313.0 414.8L961.0 289.3M313.0 403.6L961.0 280.9M313.0 392.8L961.0 273.0M313.0 382.6L961.0 265.4M313.0 372.7L961.0 258.1M313.0 363.3L961.0 251.1M313.0 354.3L961.0 244.4M313.0 345.6L961.0 238.0M313.0 337.3L961.0 231.8M313.0 329.3L961.0 225.9M313.0 321.6L961.0 220.2M313.0 314.2L961.0 214.7M313.0 307.1L961.0 209.4M313.0 300.2L961.0 204.3M313.0 293.6L961.0 199.4M313.0 287.2L961.0 194.7M313.0 281.0L961.0 190.1M313.0 275.0L961.0 185.6M313.0 269.2L961.0 181.4M313.0 263.6L961.0 177.2M313.0 258.2L961.0 173.2M313.0 253.0L961.0 169.3M313.0 247.9L961.0 165.6M313.0 243.0L961.0 161.9M313.0 238.2L961.0 158.4M313.0 233.5L961.0 154.9M313.0 229.0L961.0 151.6M313.0 224.7L961.0 148.4M313.0 220.4L961.0 145.2M313.0 216.3L961.0 142.1M313.0 212.3L961.0 139.2M313.0 208.4L961.0 136.3M313.0 204.6L961.0 133.5M313.0 200.9L961.0 130.7M313.0 197.3L961.0 128.0M313.0 193.8L961.0 125.4M313.0 190.3L960.1 123.0M313.0 187.0L936.1 123.0M313.0 183.7L912.0 123.0M313.0 180.6L887.9 123.0M313.0 177.5L863.8 123.0M313.0 174.5L839.7 123.0M313.0 171.5L815.6 123.0M313.0 168.6L791.4 123.0M313.0 165.8L767.3 123.0M313.0 163.1L743.1 123.0M313.0 160.4L718.9 123.0M313.0 157.7L694.7 123.0M313.0 155.2L670.5 123.0M313.0 152.7L646.3 123.0M313.0 150.2L622.1 123.0M313.0 147.8L597.9 123.0M313.0 145.4L573.6 123.0M313.0 143.1L549.4 123.0M313.0 140.9L525.1 123.0M313.0 138.7L500.8 123.0M313.0 136.5L476.5 123.0M313.0 134.4L452.2 123.0M313.0 132.3L427.9 123.0M313.0 130.3L403.6 123.0M313.0 128.2L379.3 123.0M313.0 126.3L354.9 123.0M313.0 124.4L330.5 123.0" stroke="url(#gridg)" stroke-width="1" fill="none" opacity=".85"/><polyline points="515.4,133.9 951.0,535.0" fill="none" stroke="#0000f0" stroke-width="1.6" stroke-linecap="butt" stroke-linejoin="round"/><polyline points="323.0,843.5 951.0,613.5" fill="none" stroke="#f00018" stroke-width="1.4" stroke-linecap="butt" stroke-linejoin="round"/><polygon points="372.6,278.0 390.6,278.0 408.5,345.0 391.4,351.0" fill="#5c4032"/><polygon points="372.6,278.0 380.0,278.0 398.0,349.0 391.4,351.0" fill="#4e3529"/><polygon points="365.0,349.0 407.0,331.0 437.0,340.0 402.0,359.0" fill="#70594a"/><polygon points="377.5,347.7 405.3,335.3 426.4,341.6 401.9,354.4" fill="#5a4a3a"/><polygon points="365.0,349.0 402.0,359.0 417.0,403.0 379.0,388.0" fill="#5a463c"/><polygon points="372.7,356.5 398.7,364.0 409.1,394.3 382.6,384.3" fill="#6f573c"/><polyline points="372.7,356.5 409.1,394.3" fill="none" stroke="#5a463c" stroke-width="4.216028937282096" stroke-linecap="butt" stroke-linejoin="round"/><polygon points="402.0,359.0 437.0,340.0 446.0,380.0 417.0,403.0" fill="#65503f"/><polygon points="409.4,362.7 433.2,348.9 440.2,377.4 419.2,393.0" fill="#7f6343"/><polyline points="409.4,362.7 440.2,377.4" fill="none" stroke="#65503f" stroke-width="4.380707705382773" stroke-linecap="butt" stroke-linejoin="round"/><polygon points="382.0,300.0 394.0,300.0 407.0,343.0 392.0,349.0" fill="#5c4032"/><polygon points="323.0,133.0 406.8,133.0 416.7,145.8 425.6,163.8 439.3,187.7 442.7,213.4 443.5,232.0 442.7,249.3 425.6,256.1 421.0,264.0 415.4,269.8 391.4,276.7 350.4,280.5 323.0,270.0" fill="#263635" stroke="#263635" stroke-width="2" stroke-linejoin="round"/><ellipse cx="340" cy="138" rx="26" ry="30" fill="url(#lobe)" transform="rotate(-10 340 138)"/><ellipse cx="378" cy="140" rx="24" ry="30" fill="url(#lobe)" transform="rotate(10 378 140)"/><ellipse cx="405" cy="152" rx="14" ry="24" fill="url(#lobe)" transform="rotate(25 405 152)"/><ellipse cx="330" cy="180" rx="22" ry="34" fill="url(#lobe)" transform="rotate(-5 330 180)"/><ellipse cx="362" cy="182" rx="24" ry="34" fill="url(#lobe)" transform="rotate(0 362 182)"/><ellipse cx="397" cy="190" rx="22" ry="34" fill="url(#lobe)" transform="rotate(12 397 190)"/><ellipse cx="424" cy="198" rx="14" ry="30" fill="url(#lobe)" transform="rotate(20 424 198)"/><ellipse cx="338" cy="222" rx="24" ry="30" fill="url(#lobe)" transform="rotate(-8 338 222)"/><ellipse cx="378" cy="228" rx="26" ry="32" fill="url(#lobe)" transform="rotate(5 378 228)"/><ellipse cx="412" cy="232" rx="20" ry="28" fill="url(#lobe)" transform="rotate(15 412 232)"/><ellipse cx="433" cy="236" rx="10" ry="18" fill="url(#lobe)" transform="rotate(20 433 236)"/><ellipse cx="345" cy="258" rx="24" ry="20" fill="url(#lobe)" transform="rotate(-5 345 258)"/><ellipse cx="385" cy="260" rx="24" ry="18" fill="url(#lobe)" transform="rotate(5 385 260)"/><ellipse cx="414" cy="254" rx="14" ry="14" fill="url(#lobe)" transform="rotate(10 414 254)"/><polygon points="672.0,362.0 760.0,322.0 835.0,291.0 875.0,348.0 700.0,396.0" fill="#7d5648"/><polygon points="672.0,362.0 700.0,396.0 702.0,418.0 676.0,384.0" fill="#6a4538"/><polygon points="700.0,396.0 875.0,348.0 873.0,378.0 702.0,418.0" fill="#b06c4a"/><polygon points="701.0,404.0 874.0,357.0 874.0,364.0 701.5,411.0" fill="#5e3c33"/><polygon points="700.0,396.0 875.0,348.0 875.0,352.0 700.0,400.0" fill="#c58058"/><polygon points="709.1,280.0 714.0,272.0 721.9,268.1 760.0,264.0 804.0,268.0 827.1,277.0 828.0,286.9 838.2,292.1 841.6,329.7 836.5,336.5 821.1,345.1 768.1,353.6 764.0,330.0 709.0,322.0 708.5,300.0" fill="#644a42"/><polygon points="757.0,300.0 828.0,288.0 838.0,293.0 841.0,329.0 821.0,345.0 768.0,353.6 764.0,330.0" fill="#58403a"/><ellipse cx="768" cy="277" rx="59" ry="13" fill="#6c5148"/><polygon points="709.0,305.0 757.0,302.0 764.0,330.0 709.0,322.0" fill="#6a4e45"/><ellipse cx="733" cy="304" rx="25" ry="6" fill="#70554b"/><path d="M675.1 365.8L839.4 297.3M678.2 369.6L843.9 303.7M681.3 373.3L848.3 310.0M684.4 377.1L852.8 316.3M687.6 380.9L857.2 322.7M690.7 384.7L861.7 329.0M693.8 388.4L866.1 335.3M696.9 392.2L870.6 341.7M685.6 356.1L714.6 392.0M699.2 350.2L729.2 388.0M712.8 344.2L743.8 384.0M726.3 338.3L758.3 380.0M739.9 332.4L772.9 376.0M753.5 326.5L787.5 372.0M767.1 320.6L802.1 368.0M780.7 314.7L816.7 364.0M794.2 308.8L831.2 360.0M807.8 302.8L845.8 356.0M821.4 296.9L860.4 352.0" stroke="#d8d0cc" stroke-width="1.1" fill="none" opacity=".55"/><ellipse cx="728" cy="346" rx="23" ry="24" fill="#32473f"/><ellipse cx="719" cy="352" rx="12" ry="14" fill="#2b3f38"/><ellipse cx="738" cy="350" rx="11" ry="15" fill="#3a5048"/><circle cx="716.0" cy="360.0" r="3.0" fill="#6a3040"/><circle cx="730.0" cy="364.0" r="3.0" fill="#6a3040"/><circle cx="744.0" cy="358.0" r="3.0" fill="#6a3040"/><polygon points="802.0,231.0 815.0,228.0 830.0,238.0 838.0,253.0 838.5,275.0 820.0,278.0 787.0,277.0 795.0,255.0" fill="#2f443c"/><polygon points="812.0,232.0 822.0,238.0 826.0,272.0 815.0,276.0" fill="#3b5249"/><polygon points="715.0,294.0 722.0,291.0 727.0,296.0 733.0,295.0 733.0,304.0 724.0,307.0 716.0,303.0" fill="#6f9d4a"/><polygon points="770.0,355.0 778.0,352.0 787.0,355.0 786.0,361.0 772.0,362.0" fill="#6a9848"/><polyline points="761.3,198.0 764.7,212.0" fill="none" stroke="#7d8c84" stroke-width="2" stroke-linecap="round" stroke-linejoin="round"/><circle cx="764.5" cy="212.5" r="3.0" fill="#2a2e33"/><polygon points="755.0,222.0 762.0,213.0 775.0,216.0 783.0,229.0 786.0,250.0 768.0,270.0 751.0,273.0 748.0,244.0" fill="#55616c"/><polygon points="755.0,222.0 762.0,213.0 768.0,215.0 760.0,245.0 751.0,273.0 748.0,244.0" fill="#46515b"/><polygon points="745.0,268.0 790.0,262.0 800.0,282.0 750.0,288.0" fill="#4c5058"/><ellipse cx="785.5" cy="251" rx="18" ry="22.5" fill="#3a434d" transform="rotate(12 785.5 251)"/><ellipse cx="786" cy="251" rx="14" ry="18" fill="#2a3440" transform="rotate(12 786 251)"/><polygon points="779.0,241.0 797.0,238.0 794.0,260.0 776.0,264.0" fill="none" stroke="#ff8a1a" stroke-width="1.2" stroke-linejoin="round"/><polyline points="749.0,271.0 755.0,274.0 768.0,271.0" fill="none" stroke="#ff8a1a" stroke-width="1.1" stroke-linecap="round" stroke-linejoin="round"/><ellipse cx="734" cy="263" rx="10.5" ry="19" fill="#5b4029" stroke="#7a5634" stroke-width="2.5"/><polyline points="734.0,246.0 734.0,280.0" fill="none" stroke="#8a6338" stroke-width="1.5" stroke-linecap="round" stroke-linejoin="round"/><polyline points="726.0,254.0 742.0,272.0" fill="none" stroke="#8a6338" stroke-width="1.5" stroke-linecap="round" stroke-linejoin="round"/><polyline points="726.0,272.0 742.0,254.0" fill="none" stroke="#8a6338" stroke-width="1.5" stroke-linecap="round" stroke-linejoin="round"/><polygon points="752.0,256.0 756.0,256.0 760.0,253.0 760.0,264.0 756.0,261.0 752.0,261.0" fill="#ffffff"/><polygon points="653.5,135.6 690.3,155.2 686.0,246.0 653.5,221.9" fill="#5a463c"/><polygon points="658.6,150.5 684.6,165.1 682.0,230.0 658.1,213.1" fill="#6f573c"/><polyline points="658.6,150.5 682.0,230.0" fill="none" stroke="#5a463c" stroke-width="4.586353671491107" stroke-linecap="butt" stroke-linejoin="round"/><polygon points="690.3,155.2 761.3,173.2 756.1,238.2 686.0,249.3" fill="#65503f"/><polygon points="699.0,169.3 751.4,179.8 747.6,230.7 695.7,236.1" fill="#7f6343"/><polyline points="699.0,169.3 747.6,230.7" fill="none" stroke="#65503f" stroke-width="7.172843508679106" stroke-linecap="butt" stroke-linejoin="round"/><polygon points="692.0,133.0 822.8,133.0 816.9,165.5 735.6,175.8 692.0,143.3" fill="#65503f"/><polygon points="700.0,133.0 728.0,133.0 731.0,155.0 700.0,140.0" fill="#6f573c"/><polygon points="752.0,133.0 803.0,133.0 801.0,153.0 748.0,159.0" fill="#7f6343"/><polygon points="885.3,133.0 951.0,133.0 951.0,297.2 940.8,295.5 857.0,242.5" fill="#65503f"/><polygon points="905.0,143.0 951.0,155.0 951.0,182.0 876.0,222.0 890.0,170.0" fill="#7f6343"/><polygon points="886.0,238.0 951.0,200.0 951.0,236.0 932.0,268.0" fill="#7f6343"/><polygon points="869.0,243.0 880.0,236.0 940.0,280.0 938.0,293.0" fill="#4e3f38"/><polygon points="951.0,302.3 940.8,305.7 899.8,424.3 951.0,451.7" fill="#65503f"/><polygon points="951.0,325.0 946.0,328.0 922.0,398.0 951.0,400.0" fill="#7f6343"/><polygon points="903.0,420.0 912.0,400.0 951.0,430.0 951.0,451.7" fill="#4e3f38"/><polygon points="626.6,277.5 680.3,269.1 710.4,294.2 651.8,304.3" fill="#70594a"/><polygon points="638.5,280.2 676.6,274.2 697.2,291.9 656.7,298.8" fill="#8a6e4c"/><polyline points="638.5,280.2 697.2,291.9" fill="none" stroke="#70594a" stroke-width="6" stroke-linecap="butt" stroke-linejoin="round"/><polyline points="676.6,274.2 656.7,298.8" fill="none" stroke="#70594a" stroke-width="6" stroke-linecap="butt" stroke-linejoin="round"/><polygon points="626.6,277.5 651.8,304.3 650.1,364.6 630.0,337.8" fill="#5a463c"/><polygon points="630.8,290.6 647.9,309.3 647.2,351.5 632.6,332.8" fill="#6f573c"/><polyline points="630.8,290.6 647.2,351.5" fill="none" stroke="#5a463c" stroke-width="4.046564963027279" stroke-linecap="butt" stroke-linejoin="round"/><polygon points="651.8,304.3 710.4,294.2 703.7,351.2 650.1,364.6" fill="#65503f"/><polygon points="660.2,311.8 700.7,304.3 696.6,344.6 658.5,353.6" fill="#7f6343"/><polyline points="660.2,311.8 696.6,344.6" fill="none" stroke="#65503f" stroke-width="6.31316632126859" stroke-linecap="butt" stroke-linejoin="round"/><polygon points="608.2,369.6 650.1,364.6 675.2,381.3 626.6,391.4" fill="#70594a"/><polygon points="617.4,372.0 647.4,368.0 664.3,380.2 631.0,386.7" fill="#8a6e4c"/><polyline points="617.4,372.0 664.3,380.2" fill="none" stroke="#70594a" stroke-width="5" stroke-linecap="butt" stroke-linejoin="round"/><polygon points="608.2,369.6 626.6,391.4 628.3,438.3 611.6,418.2" fill="#5a463c"/><polygon points="611.4,380.1 624.1,395.2 625.5,428.2 613.6,414.0" fill="#6f573c"/><polyline points="611.4,380.1 625.5,428.2" fill="none" stroke="#5a463c" stroke-width="3.13798980240535" stroke-linecap="butt" stroke-linejoin="round"/><polygon points="626.6,391.4 675.2,381.3 673.6,428.3 628.3,438.3" fill="#65503f"/><polygon points="634.1,396.9 667.7,389.9 667.0,422.8 634.9,429.8" fill="#7f6343"/><polyline points="634.1,396.9 667.0,422.8" fill="none" stroke="#65503f" stroke-width="5.172994877244709" stroke-linecap="butt" stroke-linejoin="round"/><polyline points="729.6,331.4 775.0,373.2" fill="none" stroke="#0000f0" stroke-width="1.6" stroke-linecap="butt" stroke-linejoin="round"/><polygon points="951.0,586.7 934.0,595.2 896.4,656.8 951.0,715.0" fill="#5a4c46"/><polygon points="938.0,610.0 951.0,616.0 951.0,665.0 912.0,655.0" fill="#7a6650"/><polygon points="899.0,660.0 908.0,652.0 951.0,690.0 951.0,715.0" fill="#463c38"/><polygon points="951.0,783.4 923.7,793.6 895.2,829.6 951.0,911.2" fill="#5a4c46"/><polygon points="930.0,808.0 951.0,815.0 951.0,870.0 910.0,830.0" fill="#7a6650"/><polygon points="898.0,832.0 908.0,826.0 951.0,880.0 951.0,911.0" fill="#463c38"/><polygon points="951.0,588.5 932.3,595.3 922.0,613.0 951.0,613.0" fill="#5a4c46"/><polygon points="379.4,641.4 581.3,586.7 579.5,615.8 391.4,660.2" fill="#b87444" stroke="#c9680f" stroke-width="1.5" stroke-linejoin="round"/><polygon points="384.0,650.5 580.5,597.5 580.2,603.5 386.5,655.5" fill="#5b4240"/><polygon points="356.0,506.0 520.0,467.0 531.0,472.0 540.0,489.0 583.0,582.0 580.0,590.0 385.0,643.0 374.0,638.0 352.0,514.0" fill="#5a7a48" stroke="#c9680f" stroke-width="2" stroke-linejoin="round"/><polygon points="489.0,505.0 512.0,500.0 535.0,512.0 545.0,540.0 538.0,560.0 520.0,570.0 496.0,566.0 488.0,548.0 484.0,530.0" fill="#41603f"/><polygon points="484.0,486.0 506.0,483.0 510.0,489.0 488.0,492.0" fill="#41603f"/><polygon points="378.0,486.0 411.0,478.0 425.0,524.0 393.0,534.0" fill="none" stroke="#f08a30" stroke-width="1" stroke-linejoin="round"/><polygon points="382.0,500.0 415.0,492.0 429.0,538.0 397.0,548.0" fill="none" stroke="#f08a30" stroke-width="0.8" stroke-linejoin="round" opacity="0.8"/><polygon points="392.0,557.0 428.0,548.0 442.0,595.0 408.0,605.0" fill="none" stroke="#f08a30" stroke-width="1" stroke-linejoin="round"/><polygon points="396.0,571.0 432.0,562.0 446.0,609.0 412.0,619.0" fill="none" stroke="#f08a30" stroke-width="0.8" stroke-linejoin="round" opacity="0.8"/><polyline points="362.0,540.0 560.0,578.0" fill="none" stroke="#e07a20" stroke-width="0.8" stroke-linecap="round" stroke-linejoin="round" opacity="0.7" stroke-dasharray="2 2"/><polyline points="420.0,500.0 372.0,600.0" fill="none" stroke="#e07a20" stroke-width="0.8" stroke-linecap="round" stroke-linejoin="round" opacity="0.6" stroke-dasharray="2 2"/><polygon points="499.2,466.2 506.9,466.2 509.4,491.0 502.6,491.0" fill="#6a4326" stroke="#c9680f" stroke-width="1.5" stroke-linejoin="round"/><polygon points="492.3,438.0 501.7,438.0 503.0,449.0 494.0,449.0" fill="#7a4a22" stroke="#c9680f" stroke-width="1.5" stroke-linejoin="round"/><polygon points="475.2,448.3 509.4,448.3 509.4,443.1 530.8,458.5 516.3,468.8 512.8,461.9 476.9,460.2" fill="#4a3030" stroke="#c9680f" stroke-width="1.8" stroke-linejoin="round"/><polygon points="418.8,728.6 492.3,706.4 497.4,721.8 427.3,745.7" fill="#b87444" stroke="#c9680f" stroke-width="1.5" stroke-linejoin="round"/><polygon points="423.0,736.0 495.0,714.0 496.0,719.0 425.0,741.0" fill="#5b4240"/><polygon points="398.3,660.2 475.2,639.7 494.0,692.7 492.3,706.4 415.4,728.6 406.8,720.1" fill="#6a8a40" stroke="#c9680f" stroke-width="2.5" stroke-linejoin="round"/><polygon points="398.3,660.2 475.2,639.7 494.0,692.7 492.3,706.4 415.4,728.6 406.8,720.1" fill="url(#hatch)" opacity="0.6"/><polygon points="403.0,664.0 472.0,646.0 488.0,693.0 417.0,720.0" fill="none" stroke="#c9680f" stroke-width="1" stroke-linejoin="round" opacity="0.7"/><polyline points="403.0,664.0 488.0,693.0" fill="none" stroke="#c9680f" stroke-width="1" stroke-linecap="round" stroke-linejoin="round" opacity="0.7"/><polyline points="472.0,646.0 417.0,720.0" fill="none" stroke="#c9680f" stroke-width="1" stroke-linecap="round" stroke-linejoin="round" opacity="0.7"/><polygon points="408.0,622.0 447.0,612.0 463.0,672.0 426.0,684.0" fill="none" stroke="#f08a30" stroke-width="1" stroke-linejoin="round"/><polygon points="519.7,692.7 589.8,672.2 590.7,689.3 526.5,709.8" fill="#b87444" stroke="#c9680f" stroke-width="1.5" stroke-linejoin="round"/><polygon points="523.0,700.0 590.0,680.0 590.5,685.0 525.0,705.0" fill="#5b4240"/><polygon points="499.2,629.4 567.6,610.6 591.5,660.2 589.8,670.5 518.0,691.0 512.8,679.0" fill="#6a8a40" stroke="#c9680f" stroke-width="2.5" stroke-linejoin="round"/><polygon points="499.2,629.4 567.6,610.6 591.5,660.2 589.8,670.5 518.0,691.0 512.8,679.0" fill="url(#hatch)" opacity="0.6"/><polygon points="504.0,633.0 565.0,617.0 585.0,662.0 520.0,683.0" fill="none" stroke="#c9680f" stroke-width="1" stroke-linejoin="round" opacity="0.7"/><polyline points="504.0,633.0 585.0,662.0" fill="none" stroke="#c9680f" stroke-width="1" stroke-linecap="round" stroke-linejoin="round" opacity="0.7"/><polyline points="565.0,617.0 520.0,683.0" fill="none" stroke="#c9680f" stroke-width="1" stroke-linecap="round" stroke-linejoin="round" opacity="0.7"/><polygon points="445.0,1046.0 724.0,922.0 737.0,906.0 739.0,913.0 727.0,930.0 452.0,1053.0" fill="#a8642c" stroke="#c9680f" stroke-width="1.5" stroke-linejoin="round"/><polygon points="448.0,1049.0 726.0,925.0 727.0,928.0 450.0,1052.0" fill="#5b4240"/><polygon points="400.0,757.0 408.0,753.0 618.0,681.0 630.0,684.0 640.0,700.0 736.0,896.0 735.0,907.0 724.0,922.0 445.0,1046.0 436.0,1030.0" fill="#506e32" stroke="#c9680f" stroke-width="2" stroke-linejoin="round"/><polygon points="400.0,760.0 406.0,760.0 445.0,1030.0 437.0,1030.0" fill="#46603a"/><polygon points="428.0,940.0 437.0,945.0 447.0,1000.0 446.0,1020.0 438.0,1018.0" fill="#3a5834"/><polygon points="437.0,762.0 484.0,748.0 499.0,798.0 452.0,814.0" fill="none" stroke="#f08a30" stroke-width="1.1" stroke-linejoin="round"/><polygon points="442.0,778.0 489.0,764.0 504.0,814.0 457.0,830.0" fill="none" stroke="#f08a30" stroke-width="0.9" stroke-linejoin="round" opacity="0.8"/><polygon points="459.0,878.0 510.0,858.0 527.0,925.0 478.0,945.0" fill="none" stroke="#f08a30" stroke-width="1.1" stroke-linejoin="round"/><polygon points="464.0,894.0 515.0,874.0 532.0,941.0 483.0,961.0" fill="none" stroke="#f08a30" stroke-width="0.9" stroke-linejoin="round" opacity="0.8"/><polyline points="415.0,830.0 700.0,720.0" fill="none" stroke="#e07a20" stroke-width="0.8" stroke-linecap="round" stroke-linejoin="round" opacity="0.6" stroke-dasharray="2 2"/><polyline points="560.0,720.0 640.0,980.0" fill="none" stroke="#e07a20" stroke-width="0.8" stroke-linecap="round" stroke-linejoin="round" opacity="0.6" stroke-dasharray="2 2"/><polyline points="430.0,925.0 690.0,830.0" fill="none" stroke="#e07a20" stroke-width="0.8" stroke-linecap="round" stroke-linejoin="round" opacity="0.5" stroke-dasharray="2 2"/><polygon points="716.0,815.0 722.0,817.0 683.0,912.0 677.0,908.0" fill="#4a3038" stroke="#c9680f" stroke-width="1.5" stroke-linejoin="round"/><polygon points="688.0,848.0 697.0,850.0 686.0,905.0 678.0,903.0" fill="#6a5a58" stroke="#c9680f" stroke-width="1.2" stroke-linejoin="round"/><polygon points="653.0,843.0 697.0,860.0 690.0,905.0 654.0,890.0" fill="none" stroke="#f08a30" stroke-width="0.9" stroke-linejoin="round" opacity="0.8"/><polygon points="594.6,506.6 625.6,486.3 655.5,471.3 682.2,463.8 709.0,467.0 728.2,473.4 728.2,494.8 714.3,502.3 682.2,508.7 651.2,520.5 639.5,534.4 618.1,548.3" fill="url(#wire)" stroke="#c9680f" stroke-width="3" stroke-linejoin="round"/><polygon points="598.7,508.5 613.1,499.1 620.4,517.1 607.9,525.3" fill="#3c2d26"/><polygon points="610.1,529.5 622.2,521.7 628.6,537.5 618.1,544.3" fill="#3c2d26"/><polygon points="617.6,496.1 631.7,487.5 636.0,506.9 624.4,514.6" fill="#3c2d26"/><polygon points="626.0,519.2 637.0,511.7 640.8,528.6 631.9,535.3" fill="#3c2d26"/><polygon points="636.0,485.3 649.5,478.2 649.2,497.8 639.2,504.7" fill="#3c2d26"/><polygon points="639.9,509.5 649.1,502.7 648.9,519.9 642.7,526.5" fill="#3c2d26"/><polygon points="653.7,476.0 666.6,471.9 665.7,490.9 652.4,495.6" fill="#3c2d26"/><polygon points="652.0,500.6 665.4,495.6 664.5,512.2 650.9,517.8" fill="#3c2d26"/><polygon points="670.7,470.7 683.6,467.5 683.7,485.3 670.0,489.4" fill="#3c2d26"/><polygon points="669.8,494.1 683.7,489.7 683.8,505.3 669.2,510.4" fill="#3c2d26"/><polygon points="687.6,467.9 700.6,469.0 702.0,484.4 688.1,485.1" fill="#3c2d26"/><polygon points="688.2,489.4 702.4,488.2 703.6,501.7 688.5,504.4" fill="#3c2d26"/><polygon points="704.7,469.4 715.1,471.4 716.5,483.9 706.4,484.2" fill="#3c2d26"/><polygon points="706.8,487.9 716.9,487.0 718.2,497.9 708.4,500.8" fill="#3c2d26"/><polygon points="717.9,472.2 726.8,474.7 727.0,483.7 719.0,483.8" fill="#3c2d26"/><polygon points="719.3,486.7 727.0,485.9 727.1,493.8 720.4,496.9" fill="#3c2d26"/><polyline points="607.1,528.7 633.0,511.8 653.2,497.4 682.2,487.6 711.8,485.7 728.2,484.7" fill="none" stroke="#c9680f" stroke-width="3.5" stroke-linecap="round" stroke-linejoin="round"/><polyline points="618.1,548.3 639.5,534.4 651.2,520.5 682.2,508.7 714.3,502.3 728.2,494.8" fill="none" stroke="#c9680f" stroke-width="4.5" stroke-linecap="round" stroke-linejoin="round"/><polyline points="621.3,462.8 621.3,486.3" fill="none" stroke="#c9680f" stroke-width="6.5" stroke-linecap="round" stroke-linejoin="round"/><polyline points="700.4,443.5 700.4,466.0" fill="none" stroke="#c9680f" stroke-width="6.5" stroke-linecap="round" stroke-linejoin="round"/><polyline points="640.6,516.2 642.7,535.4" fill="none" stroke="#c9680f" stroke-width="6.5" stroke-linecap="round" stroke-linejoin="round"/><polyline points="717.5,503.4 719.7,513.0" fill="none" stroke="#c9680f" stroke-width="6.5" stroke-linecap="round" stroke-linejoin="round"/><polyline points="725.0,479.9 756.0,490.6" fill="none" stroke="#c9680f" stroke-width="6" stroke-linecap="round" stroke-linejoin="round"/><polyline points="722.9,488.4 745.3,507.7" fill="none" stroke="#c9680f" stroke-width="6" stroke-linecap="round" stroke-linejoin="round"/><polyline points="587.1,497.0 607.4,479.9 634.1,464.9 660.9,454.2 682.2,449.9 703.6,451.0 719.7,456.3 730.3,461.7" fill="none" stroke="#c9680f" stroke-width="6.8" stroke-linecap="round" stroke-linejoin="round"/><polyline points="587.1,497.0 607.4,479.9 634.1,464.9 660.9,454.2 682.2,449.9 703.6,451.0 719.7,456.3 730.3,461.7" fill="none" stroke="#7a4416" stroke-width="2.2" stroke-linecap="round" stroke-linejoin="round" opacity="0.75" stroke-dasharray="1.5 2.5"/><polygon points="594.6,506.6 625.6,486.3 655.5,471.3 682.2,463.8 709.0,467.0 728.2,473.4 728.2,494.8 714.3,502.3 682.2,508.7 651.2,520.5 639.5,534.4 618.1,548.3" fill="url(#wire2)" opacity="0.42"/><polygon points="781.8,458.5 821.1,434.6 853.6,420.9 882.7,422.6 910.1,438.0 920.3,458.0 899.8,452.0 872.4,450.0 841.6,468.8 812.6,491.9" fill="url(#wire)" stroke="#c9680f" stroke-width="3" stroke-linejoin="round"/><polygon points="787.3,459.3 806.8,447.2 816.7,460.7 799.3,472.7" fill="#3c2d26"/><polygon points="802.3,476.0 819.2,464.1 827.9,476.0 812.8,487.7" fill="#3c2d26"/><polygon points="813.0,443.4 830.9,433.8 839.0,446.9 822.2,457.0" fill="#3c2d26"/><polygon points="824.5,460.4 841.0,450.2 848.0,461.7 832.6,472.3" fill="#3c2d26"/><polygon points="836.1,431.5 852.5,424.4 860.1,436.2 844.0,444.3" fill="#3c2d26"/><polygon points="846.0,447.6 862.0,439.1 868.6,449.4 852.9,458.8" fill="#3c2d26"/><polygon points="857.4,423.4 872.1,424.2 879.2,435.9 864.9,435.0" fill="#3c2d26"/><polygon points="866.8,437.9 881.0,438.9 887.2,449.1 873.3,448.1" fill="#3c2d26"/><polygon points="876.7,424.5 890.9,428.7 897.0,439.5 883.7,436.2" fill="#3c2d26"/><polygon points="885.5,439.2 898.5,442.2 903.9,451.6 891.6,449.4" fill="#3c2d26"/><polygon points="895.2,431.0 908.8,438.4 913.1,446.7 900.9,441.2" fill="#3c2d26"/><polygon points="902.3,443.8 914.1,448.8 917.9,456.1 907.3,452.7" fill="#3c2d26"/><polyline points="798.1,476.2 832.0,452.7 863.6,436.3 891.8,438.2 915.5,448.6" fill="none" stroke="#c9680f" stroke-width="3.5" stroke-linecap="round" stroke-linejoin="round"/><polyline points="812.6,491.9 841.6,468.8 872.4,450.0 899.8,452.0 920.3,458.0" fill="none" stroke="#c9680f" stroke-width="4.5" stroke-linecap="round" stroke-linejoin="round"/><polyline points="881.0,397.0 881.0,420.0" fill="none" stroke="#c9680f" stroke-width="6.5" stroke-linecap="round" stroke-linejoin="round"/><polyline points="812.6,417.0 812.6,438.0" fill="none" stroke="#c9680f" stroke-width="6.5" stroke-linecap="round" stroke-linejoin="round"/><polyline points="895.0,440.0 897.0,462.0" fill="none" stroke="#c9680f" stroke-width="6.5" stroke-linecap="round" stroke-linejoin="round"/><polyline points="905.0,438.0 921.0,457.0" fill="none" stroke="#c9680f" stroke-width="6" stroke-linecap="round" stroke-linejoin="round"/><polyline points="897.0,447.0 905.0,463.0" fill="none" stroke="#c9680f" stroke-width="6" stroke-linecap="round" stroke-linejoin="round"/><polyline points="778.4,446.5 812.6,419.2 846.8,405.5 881.0,402.1 899.8,414.0" fill="none" stroke="#c9680f" stroke-width="6.8" stroke-linecap="round" stroke-linejoin="round"/><polyline points="778.4,446.5 812.6,419.2 846.8,405.5 881.0,402.1 899.8,414.0" fill="none" stroke="#7a4416" stroke-width="2.2" stroke-linecap="round" stroke-linejoin="round" opacity="0.75" stroke-dasharray="1.5 2.5"/><polygon points="781.8,458.5 821.1,434.6 853.6,420.9 882.7,422.6 910.1,438.0 920.3,458.0 899.8,452.0 872.4,450.0 841.6,468.8 812.6,491.9" fill="url(#wire2)" opacity="0.42"/><polygon points="646.7,593.6 710.0,566.3 786.9,537.2 829.7,535.5 853.6,557.7 872.4,585.0 845.1,591.8 798.9,607.2 715.1,627.7 675.8,656.8" fill="url(#wire)" stroke="#c9680f" stroke-width="3" stroke-linejoin="round"/><polygon points="651.7,597.5 668.7,589.9 677.2,614.9 662.9,622.7" fill="#3c2d26"/><polygon points="665.7,629.0 679.4,621.2 686.9,643.1 675.6,651.1" fill="#3c2d26"/><polygon points="674.0,587.5 691.0,579.9 696.1,604.7 681.8,612.5" fill="#3c2d26"/><polygon points="683.7,618.7 697.3,610.9 701.8,632.6 690.5,640.6" fill="#3c2d26"/><polygon points="696.3,577.5 714.1,569.9 716.2,594.6 700.6,602.2" fill="#3c2d26"/><polygon points="701.6,608.4 716.8,600.8 718.7,622.4 705.4,630.0" fill="#3c2d26"/><polygon points="720.8,567.4 742.2,559.5 745.4,585.5 723.2,592.4" fill="#3c2d26"/><polygon points="723.8,598.7 746.2,592.0 749.0,614.7 726.0,620.6" fill="#3c2d26"/><polygon points="749.0,557.1 770.4,549.2 774.6,576.4 752.4,583.3" fill="#3c2d26"/><polygon points="753.3,589.9 775.6,583.2 779.3,607.1 756.3,612.9" fill="#3c2d26"/><polygon points="777.2,546.7 793.8,542.4 798.8,569.7 781.6,574.3" fill="#3c2d26"/><polygon points="782.7,581.1 800.0,576.5 804.4,600.3 786.5,605.2" fill="#3c2d26"/><polygon points="797.6,542.2 809.5,541.4 815.0,566.6 802.7,568.9" fill="#3c2d26"/><polygon points="804.0,575.6 816.3,573.0 821.1,595.1 808.4,599.0" fill="#3c2d26"/><polygon points="813.2,541.2 825.1,540.4 831.1,563.6 818.8,565.9" fill="#3c2d26"/><polygon points="820.2,572.1 832.6,569.5 837.8,589.8 825.1,593.8" fill="#3c2d26"/><polygon points="828.9,540.1 836.5,544.6 842.9,564.4 835.0,562.9" fill="#3c2d26"/><polygon points="836.5,568.6 844.6,569.4 850.2,586.8 841.8,588.5" fill="#3c2d26"/><polygon points="838.6,546.3 845.3,551.8 852.2,567.4 845.2,565.1" fill="#3c2d26"/><polygon points="846.8,569.9 854.0,571.3 860.1,585.0 852.6,586.3" fill="#3c2d26"/><polygon points="847.4,553.5 854.0,559.0 861.5,570.4 854.5,568.2" fill="#3c2d26"/><polygon points="856.2,571.8 863.4,573.3 869.9,583.3 862.4,584.6" fill="#3c2d26"/><polyline points="662.1,627.1 712.7,598.8 793.3,574.3 837.9,565.3 863.6,572.2" fill="none" stroke="#c9680f" stroke-width="3.5" stroke-linecap="round" stroke-linejoin="round"/><polyline points="675.8,656.8 715.1,627.7 798.9,607.2 845.1,591.8 872.4,585.0" fill="none" stroke="#c9680f" stroke-width="4.5" stroke-linecap="round" stroke-linejoin="round"/><polyline points="684.3,553.0 684.3,580.0" fill="none" stroke="#c9680f" stroke-width="6.5" stroke-linecap="round" stroke-linejoin="round"/><polyline points="778.4,519.0 778.4,543.0" fill="none" stroke="#c9680f" stroke-width="6.5" stroke-linecap="round" stroke-linejoin="round"/><polyline points="821.0,514.0 823.0,538.0" fill="none" stroke="#c9680f" stroke-width="6.5" stroke-linecap="round" stroke-linejoin="round"/><polyline points="790.0,600.0 792.0,622.0" fill="none" stroke="#c9680f" stroke-width="6.5" stroke-linecap="round" stroke-linejoin="round"/><polyline points="840.0,588.0 842.0,604.0" fill="none" stroke="#c9680f" stroke-width="6.5" stroke-linecap="round" stroke-linejoin="round"/><polyline points="848.5,554.3 887.8,564.6" fill="none" stroke="#c9680f" stroke-width="6" stroke-linecap="round" stroke-linejoin="round"/><polyline points="855.3,569.7 872.4,585.1" fill="none" stroke="#c9680f" stroke-width="6" stroke-linecap="round" stroke-linejoin="round"/><polyline points="650.1,586.8 684.3,557.7 735.6,537.2 778.4,523.5 821.1,518.4 853.6,530.3" fill="none" stroke="#c9680f" stroke-width="6.8" stroke-linecap="round" stroke-linejoin="round"/><polyline points="650.1,586.8 684.3,557.7 735.6,537.2 778.4,523.5 821.1,518.4 853.6,530.3" fill="none" stroke="#7a4416" stroke-width="2.2" stroke-linecap="round" stroke-linejoin="round" opacity="0.75" stroke-dasharray="1.5 2.5"/><polygon points="646.7,593.6 710.0,566.3 786.9,537.2 829.7,535.5 853.6,557.7 872.4,585.0 845.1,591.8 798.9,607.2 715.1,627.7 675.8,656.8" fill="url(#wire2)" opacity="0.42"/><polygon points="901.5,521.8 925.0,508.0 951.0,492.7 951.0,557.7 948.0,562.0 944.3,564.6" fill="url(#wire)" stroke="#c9680f" stroke-width="3" stroke-linejoin="round"/><polygon points="906.7,524.2 917.8,517.7 930.3,537.4 923.2,541.7" fill="#3c2d26"/><polygon points="927.3,546.0 933.4,542.3 944.3,559.6 941.7,561.3" fill="#3c2d26"/><polygon points="921.3,515.6 933.0,508.7 939.8,531.4 932.5,536.1" fill="#3c2d26"/><polygon points="935.3,541.2 941.5,537.1 947.6,556.9 945.1,559.1" fill="#3c2d26"/><polygon points="936.8,506.4 949.1,499.1 949.8,524.7 942.2,529.8" fill="#3c2d26"/><polygon points="943.6,535.6 950.0,531.1 950.6,553.6 948.3,556.1" fill="#3c2d26"/><polyline points="924.2,544.5 937.2,536.6 951.0,527.1" fill="none" stroke="#c9680f" stroke-width="3.5" stroke-linecap="round" stroke-linejoin="round"/><polyline points="944.3,564.6 948.0,562.0 951.0,557.7" fill="none" stroke="#c9680f" stroke-width="4.5" stroke-linecap="round" stroke-linejoin="round"/><polyline points="901.5,511.5 925.0,496.0 951.0,479.0" fill="none" stroke="#c9680f" stroke-width="6.8" stroke-linecap="round" stroke-linejoin="round"/><polyline points="901.5,511.5 925.0,496.0 951.0,479.0" fill="none" stroke="#7a4416" stroke-width="2.2" stroke-linecap="round" stroke-linejoin="round" opacity="0.75" stroke-dasharray="1.5 2.5"/><polygon points="901.5,521.8 925.0,508.0 951.0,492.7 951.0,557.7 948.0,562.0 944.3,564.6" fill="url(#wire2)" opacity="0.42"/><polygon points="711.7,725.2 763.0,691.0 821.1,663.6 869.0,650.0 899.8,656.8 927.2,733.8 889.5,745.7 855.3,761.1 807.4,778.2 763.0,810.7" fill="url(#wire)" stroke="#c9680f" stroke-width="3" stroke-linejoin="round"/><polygon points="718.5,730.2 735.7,718.7 755.1,753.2 738.9,764.5" fill="#3c2d26"/><polygon points="744.0,773.0 760.0,761.8 777.0,792.0 761.8,803.0" fill="#3c2d26"/><polygon points="741.1,715.1 758.2,703.6 776.4,738.3 760.2,749.6" fill="#3c2d26"/><polygon points="765.0,758.3 781.0,747.0 796.9,777.5 781.8,788.5" fill="#3c2d26"/><polygon points="763.6,699.9 782.6,690.5 799.2,726.6 781.5,734.8" fill="#3c2d26"/><polygon points="786.0,743.5 803.4,735.6 817.9,767.1 801.7,774.0" fill="#3c2d26"/><polygon points="788.7,687.7 808.1,678.7 822.9,716.6 804.9,724.2" fill="#3c2d26"/><polygon points="808.9,733.3 826.6,726.1 839.5,759.2 823.1,765.2" fill="#3c2d26"/><polygon points="814.2,675.9 831.7,669.1 844.5,708.0 828.5,714.2" fill="#3c2d26"/><polygon points="832.1,723.8 847.7,717.7 858.8,751.7 844.7,757.3" fill="#3c2d26"/><polygon points="836.7,667.6 852.5,663.0 862.9,701.5 848.9,706.4" fill="#3c2d26"/><polygon points="851.9,716.1 865.4,711.2 874.5,744.9 862.6,750.1" fill="#3c2d26"/><polygon points="857.5,661.5 872.5,658.0 880.8,695.8 867.3,700.0" fill="#3c2d26"/><polygon points="869.7,709.6 882.9,705.3 890.2,738.4 878.2,743.3" fill="#3c2d26"/><polygon points="875.8,658.5 886.4,660.3 896.0,694.8 884.4,695.6" fill="#3c2d26"/><polygon points="886.6,704.8 898.4,703.5 906.8,733.7 894.2,737.3" fill="#3c2d26"/><polygon points="889.7,660.9 900.3,662.7 911.1,693.9 899.6,694.6" fill="#3c2d26"/><polygon points="902.1,703.0 913.8,701.7 923.3,729.0 910.7,732.6" fill="#3c2d26"/><polyline points="738.9,770.5 786.5,737.2 839.2,715.3 879.9,700.7 914.3,697.6" fill="none" stroke="#c9680f" stroke-width="3.5" stroke-linecap="round" stroke-linejoin="round"/><polyline points="763.0,810.7 807.4,778.2 855.3,761.1 889.5,745.7 927.2,733.8" fill="none" stroke="#c9680f" stroke-width="4.5" stroke-linecap="round" stroke-linejoin="round"/><polyline points="899.8,660.0 923.7,709.8" fill="none" stroke="#c9680f" stroke-width="6.5" stroke-linecap="round" stroke-linejoin="round"/><polyline points="869.0,650.0 896.0,656.0" fill="none" stroke="#c9680f" stroke-width="6" stroke-linecap="round" stroke-linejoin="round"/><polyline points="923.7,713.0 942.6,714.0" fill="none" stroke="#c9680f" stroke-width="6" stroke-linecap="round" stroke-linejoin="round"/><polyline points="713.0,722.0 763.0,688.0 821.0,661.0 869.0,648.0 899.0,655.0" fill="none" stroke="#c9680f" stroke-width="6.8" stroke-linecap="round" stroke-linejoin="round"/><polyline points="713.0,722.0 763.0,688.0 821.0,661.0 869.0,648.0 899.0,655.0" fill="none" stroke="#7a4416" stroke-width="2.2" stroke-linecap="round" stroke-linejoin="round" opacity="0.75" stroke-dasharray="1.5 2.5"/><polygon points="711.7,725.2 763.0,691.0 821.1,663.6 869.0,650.0 899.8,656.8 927.2,733.8 889.5,745.7 855.3,761.1 807.4,778.2 763.0,810.7" fill="url(#wire2)" opacity="0.42"/><polygon points="951.0,586.7 934.0,595.2 896.4,656.8 951.0,715.0" fill="#5a4c46"/><polygon points="938.0,610.0 951.0,616.0 951.0,665.0 912.0,655.0" fill="#7a6650"/><polygon points="899.0,660.0 908.0,652.0 951.0,690.0 951.0,715.0" fill="#463c38"/><polygon points="951.0,302.3 940.8,305.7 899.8,424.3 951.0,451.7" fill="#65503f"/><polygon points="951.0,325.0 946.0,328.0 922.0,398.0 951.0,400.0" fill="#7f6343"/><polyline points="355.5,510.7 518.0,471.9" fill="none" stroke="#00f000" stroke-width="1.1" stroke-linecap="butt" stroke-linejoin="round"/><polyline points="518.0,471.9 565.9,578.2" fill="none" stroke="#00f000" stroke-width="1.1" stroke-linecap="butt" stroke-linejoin="round"/><polyline points="565.9,578.2 375.2,634.2" fill="none" stroke="#00f000" stroke-width="1.1" stroke-linecap="butt" stroke-linejoin="round"/><polyline points="375.2,634.2 355.5,510.7" fill="none" stroke="#00f000" stroke-width="1.1" stroke-linecap="butt" stroke-linejoin="round"/><polyline points="355.5,510.7 565.9,578.2" fill="none" stroke="#00f000" stroke-width="1.1" stroke-linecap="butt" stroke-linejoin="round"/><polyline points="402.3,759.3 616.3,686.5" fill="none" stroke="#00f000" stroke-width="1.1" stroke-linecap="butt" stroke-linejoin="round"/><polyline points="616.3,686.5 712.8,900.9" fill="none" stroke="#00f000" stroke-width="1.1" stroke-linecap="butt" stroke-linejoin="round"/><polyline points="712.8,900.9 443.6,1025.0" fill="none" stroke="#00f000" stroke-width="1.1" stroke-linecap="butt" stroke-linejoin="round"/><polyline points="443.6,1025.0 402.3,759.3" fill="none" stroke="#00f000" stroke-width="1.1" stroke-linecap="butt" stroke-linejoin="round"/><polyline points="402.3,759.3 712.8,900.9" fill="none" stroke="#00f000" stroke-width="1.1" stroke-linecap="butt" stroke-linejoin="round"/><polyline points="565.9,578.2 616.3,686.5" fill="none" stroke="#00f000" stroke-width="1.1" stroke-linecap="butt" stroke-linejoin="round"/><polyline points="518.0,471.9 604.5,490.5" fill="none" stroke="#00f000" stroke-width="1.1" stroke-linecap="butt" stroke-linejoin="round"/><polyline points="518.0,471.9 615.5,508.5" fill="none" stroke="#00f000" stroke-width="1.1" stroke-linecap="butt" stroke-linejoin="round"/><polyline points="565.9,578.2 615.5,508.5" fill="none" stroke="#00f000" stroke-width="1.1" stroke-linecap="butt" stroke-linejoin="round"/><polyline points="565.9,578.2 644.1,593.6" fill="none" stroke="#00f000" stroke-width="1.1" stroke-linecap="butt" stroke-linejoin="round"/><polyline points="565.9,578.2 655.2,611.6" fill="none" stroke="#00f000" stroke-width="1.1" stroke-linecap="butt" stroke-linejoin="round"/><polyline points="616.3,686.5 644.1,593.6" fill="none" stroke="#00f000" stroke-width="1.1" stroke-linecap="butt" stroke-linejoin="round"/><polyline points="616.3,686.5 735.6,732.1" fill="none" stroke="#00f000" stroke-width="1.1" stroke-linecap="butt" stroke-linejoin="round"/><polyline points="616.3,686.5 655.2,611.6" fill="none" stroke="#00f000" stroke-width="1.1" stroke-linecap="butt" stroke-linejoin="round"/><polyline points="735.6,732.1 755.3,766.3" fill="none" stroke="#00f000" stroke-width="1.1" stroke-linecap="butt" stroke-linejoin="round"/><polyline points="755.3,766.3 712.8,900.9" fill="none" stroke="#00f000" stroke-width="1.1" stroke-linecap="butt" stroke-linejoin="round"/><polyline points="604.5,490.5 898.1,416.6" fill="none" stroke="#00f000" stroke-width="1.1" stroke-linecap="butt" stroke-linejoin="round"/><polyline points="615.5,508.5 854.5,423.5" fill="none" stroke="#00f000" stroke-width="1.1" stroke-linecap="butt" stroke-linejoin="round"/><polyline points="640.0,500.0 770.0,452.0" fill="none" stroke="#00f000" stroke-width="1.1" stroke-linecap="butt" stroke-linejoin="round"/><polyline points="644.1,593.6 951.0,497.8" fill="none" stroke="#00f000" stroke-width="1.1" stroke-linecap="butt" stroke-linejoin="round"/><polyline points="655.2,611.6 951.0,521.8" fill="none" stroke="#00f000" stroke-width="1.1" stroke-linecap="butt" stroke-linejoin="round"/><polyline points="650.0,585.0 840.0,515.0" fill="none" stroke="#00f000" stroke-width="1.1" stroke-linecap="butt" stroke-linejoin="round"/><polyline points="735.6,732.1 898.0,658.0" fill="none" stroke="#00f000" stroke-width="1.1" stroke-linecap="butt" stroke-linejoin="round"/><polyline points="735.6,732.1 951.0,640.0" fill="none" stroke="#00f000" stroke-width="1.1" stroke-linecap="butt" stroke-linejoin="round"/><polyline points="755.3,766.3 951.0,688.0" fill="none" stroke="#00f000" stroke-width="1.1" stroke-linecap="butt" stroke-linejoin="round"/><polyline points="854.5,423.5 900.0,414.0" fill="none" stroke="#00f000" stroke-width="1.1" stroke-linecap="butt" stroke-linejoin="round"/><polyline points="604.5,490.5 615.5,508.5" fill="none" stroke="#00f000" stroke-width="1.1" stroke-linecap="butt" stroke-linejoin="round"/><circle cx="355.5" cy="510.7" r="7.0" fill="#00ff00"/><circle cx="518.0" cy="471.9" r="6.5" fill="#00ff00"/><circle cx="565.9" cy="578.2" r="7.5" fill="#00ff00"/><circle cx="375.2" cy="634.2" r="8.0" fill="#00ff00"/><circle cx="402.3" cy="759.3" r="9.0" fill="#00ff00"/><circle cx="616.3" cy="686.5" r="8.0" fill="#00ff00"/><circle cx="712.8" cy="900.9" r="10.0" fill="#00ff00"/><circle cx="443.6" cy="1025.0" r="15.5" fill="#00ff00"/><circle cx="604.5" cy="490.5" r="6.3" fill="#00ff00"/><circle cx="615.5" cy="508.5" r="6.5" fill="#00ff00"/><circle cx="854.5" cy="423.5" r="6.0" fill="#00ff00"/><circle cx="644.1" cy="593.6" r="7.5" fill="#00ff00"/><circle cx="655.2" cy="611.6" r="7.0" fill="#00ff00"/><circle cx="735.6" cy="732.1" r="7.5" fill="#00ff00"/><circle cx="755.3" cy="766.3" r="6.2" fill="#00ff00"/><polygon points="643.3,715.0 682.6,701.3 698.0,733.8 658.7,747.5" fill="#00f000"/><polygon points="684.3,747.5 730.5,730.4 725.4,750.9 681.7,769.7" fill="#ff0000"/><polygon points="581.3,770.5 658.7,741.5 694.0,815.0 611.0,848.0" fill="none" stroke="#ffa500" stroke-width="2.6" stroke-linejoin="round"/><polyline points="597.0,708.0 627.4,795.0" fill="none" stroke="#ff0000" stroke-width="6.5" stroke-linecap="butt" stroke-linejoin="round"/><polygon points="587.2,695.3 584.7,716.7 604.5,709.8" fill="#ff0000"/><polygon points="598.4,685.0 615.5,742.3 613.2,716.0" fill="#0000e0"/><polyline points="640.0,800.0 740.0,762.5" fill="none" stroke="#0000ff" stroke-width="7.5" stroke-linecap="butt" stroke-linejoin="round"/><polygon points="735.6,755.1 760.4,758.6 744.2,777.4" fill="#0000ff"/><circle cx="634.9" cy="809.0" r="17.5" fill="#f4f4f4"/><polyline points="634.5,760.0 634.5,802.0" fill="none" stroke="#00f000" stroke-width="7.8" stroke-linecap="round" stroke-linejoin="round"/><circle cx="633.0" cy="755.0" r="11.5" fill="#00f000"/><polygon points="875.9,182.6 879.3,192.9 899.8,184.0 897.0,178.0" fill="#e8e8e8"/><polygon points="913.5,191.2 917.8,208.3 929.7,201.4 921.0,189.0" fill="#e4e4e4"/><polygon points="895.5,167.2 913.5,163.8 922.0,174.0 920.3,186.0 906.7,193.7 899.8,187.7" fill="#e9e9e9"/><polygon points="899.8,187.7 906.7,193.7 920.3,186.0 921.0,178.0 906.0,181.0" fill="#bcbcbc"/><ellipse cx="900" cy="162.5" rx="4.5" ry="3.2" fill="#ee1c1c"/><ellipse cx="928.5" cy="170.5" rx="6.8" ry="4.6" fill="#1414e0" transform="rotate(-15 928.5 170.5)"/><polygon points="899.0,148.0 903.0,145.5 912.0,145.5 917.0,148.0 907.8,170.0" fill="#18b018"/></svg><div class="a" style="left:956px;top:59px;width:322px;height:1002px;background:#2f2f2f;border-radius:5px 5px 0 0;"></div><div class="a" style="left:956px;top:58.2px;width:322px;height:22.8px;background:#1f1f1f;border-radius:5px 5px 0 0;"></div><span class="a t fy" style="left:961px;top:61.5px;line-height:18px;height:18px;">Inspector</span><svg class="a" style="left:1259px;top:63.5px;" width="14" height="14" viewBox="0 0 14 14"><path d="M1 1L13 13M13 1L1 13" stroke="#c8c8c8" stroke-width="1.1" fill="none"/></svg><svg class="a" style="left:1236px;top:64.5px;" width="12" height="12" viewBox="0 0 12 12"><rect x="0.6" y="0.6" width="10.8" height="10.8" stroke="#c8c8c8" stroke-width="1.2" fill="none"/></svg><div class="a" style="left:1212px;top:75.5px;width:12px;height:1.5px;background:#8a8a8a;"></div><div class="a" style="left:0;top:0;width:1279px;height:1058px;clip-path:inset(81px 0 0 0);"><span class="a t fy" style="left:961.5px;top:83px;line-height:18px;height:18px;">Type Name: fyrox_impl::scene::rigidbody::Rigid</span><div class="a" style="left:1250px;top:82px;width:5px;height:20px;background:#2f2f2f;"></div><div class="a" style="left:1255.5px;top:83.5px;width:19.5px;height:18px;background:#424242;border-radius:3px;"></div><svg class="a" style="left:1255.5px;top:83.5px;" width="19.5" height="18" viewBox="0 0 19.5 18"><path d="M3.5 2.5H12L12 7M3.5 2.5V15H9" stroke="#9a9a9a" stroke-width="1.2" fill="none"/><path d="M5.5 5.5H10M5.5 8H9M5.5 10.5H8" stroke="#9a9a9a" stroke-width="1"/><circle cx="12.5" cy="11" r="3" stroke="#9a9a9a" stroke-width="1.2" fill="none"/><path d="M14.6 13.2L17.5 16" stroke="#9a9a9a" stroke-width="1.5"/></svg><svg class="a" style="left:959.5px;top:106px;" width="8" height="8" viewBox="0 0 8 8"><path d="M0 0.5H8L4 8Z" fill="#8c8c8c"/></svg><span class="a t fy" style="left:969.3px;top:103px;line-height:18px;height:18px;">Base</span><span class="a t fy" style="left:979.5px;top:120px;line-height:18px;height:18px;">Name</span><div class="a" style="left:1108px;top:122px;width:154px;height:16.5px;background:#1c1c1c;"></div><span class="a t fy" style="left:1108.5px;top:120.5px;line-height:18px;height:18px;">SideTile</span><svg class="a" style="left:969px;top:143px;" width="8" height="8" viewBox="0 0 8 8"><path d="M0 0.5H8L4 8Z" fill="#8c8c8c"/></svg><span class="a t fy" style="left:979.5px;top:140px;line-height:18px;height:18px;">Local Transform</span><span class="a t fy" style="left:989.5px;top:157.5px;line-height:18px;height:18px;">Local Scale</span><div class="a" style="left:1108.5px;top:160.5px;width:3px;height:15px;background:#8f1414;border-radius:1px;"></div><div class="a" style="left:1114px;top:160px;width:42.5px;height:15.5px;background:#1c1c1c;border-radius:3px;box-shadow:0 0 0 1px #3c3c3c;overflow:hidden;"><span class="t fy" style="position:absolute;left:2px;top:-1.25px;line-height:18px;color:#dcdcdc">1.000</span><div class="a" style="right:0;top:0;width:9px;height:15.5px;background:#1c1c1c"></div></div><svg class="a" style="left:1148px;top:161px;" width="8" height="13.5" viewBox="0 0 8 13.5"><path d="M4 0.5L7.5 6H0.5Z M0.5 7.5H7.5L4 13.0Z" fill="#888"/></svg><div class="a" style="left:1160.5px;top:160.5px;width:3px;height:15px;background:#0f8a0f;border-radius:1px;"></div><div class="a" style="left:1166px;top:160px;width:42.5px;height:15.5px;background:#1c1c1c;border-radius:3px;box-shadow:0 0 0 1px #3c3c3c;overflow:hidden;"><span class="t fy" style="position:absolute;left:2px;top:-1.25px;line-height:18px;color:#dcdcdc">1.000</span><div class="a" style="right:0;top:0;width:9px;height:15.5px;background:#1c1c1c"></div></div><svg class="a" style="left:1200px;top:161px;" width="8" height="13.5" viewBox="0 0 8 13.5"><path d="M4 0.5L7.5 6H0.5Z M0.5 7.5H7.5L4 13.0Z" fill="#888"/></svg><div class="a" style="left:1212.5px;top:160.5px;width:3px;height:15px;background:#14148f;border-radius:1px;"></div><div class="a" style="left:1218px;top:160px;width:42.5px;height:15.5px;background:#1c1c1c;border-radius:3px;box-shadow:0 0 0 1px #3c3c3c;overflow:hidden;"><span class="t fy" style="position:absolute;left:2px;top:-1.25px;line-height:18px;color:#dcdcdc">1.000</span><div class="a" style="right:0;top:0;width:9px;height:15.5px;background:#1c1c1c"></div></div><svg class="a" style="left:1252px;top:161px;" width="8" height="13.5" viewBox="0 0 8 13.5"><path d="M4 0.5L7.5 6H0.5Z M0.5 7.5H7.5L4 13.0Z" fill="#888"/></svg><span class="a t fy" style="left:989.5px;top:178.5px;line-height:18px;height:18px;">Local Position</span><div class="a" style="left:1108.5px;top:181.5px;width:3px;height:15px;background:#8f1414;border-radius:1px;"></div><div class="a" style="left:1114px;top:181px;width:42.5px;height:15.5px;background:#1c1c1c;border-radius:3px;box-shadow:0 0 0 1px #3c3c3c;overflow:hidden;"><span class="t fy" style="position:absolute;left:2px;top:-1.25px;line-height:18px;color:#dcdcdc">-2.000</span><div class="a" style="right:0;top:0;width:9px;height:15.5px;background:#1c1c1c"></div></div><svg class="a" style="left:1148px;top:182px;" width="8" height="13.5" viewBox="0 0 8 13.5"><path d="M4 0.5L7.5 6H0.5Z M0.5 7.5H7.5L4 13.0Z" fill="#888"/></svg><div class="a" style="left:1160.5px;top:181.5px;width:3px;height:15px;background:#0f8a0f;border-radius:1px;"></div><div class="a" style="left:1166px;top:181px;width:42.5px;height:15.5px;background:#1c1c1c;border-radius:3px;box-shadow:0 0 0 1px #3c3c3c;overflow:hidden;"><span class="t fy" style="position:absolute;left:2px;top:-1.25px;line-height:18px;color:#dcdcdc">0.000</span><div class="a" style="right:0;top:0;width:9px;height:15.5px;background:#1c1c1c"></div></div><svg class="a" style="left:1200px;top:182px;" width="8" height="13.5" viewBox="0 0 8 13.5"><path d="M4 0.5L7.5 6H0.5Z M0.5 7.5H7.5L4 13.0Z" fill="#888"/></svg><div class="a" style="left:1212.5px;top:181.5px;width:3px;height:15px;background:#14148f;border-radius:1px;"></div><div class="a" style="left:1218px;top:181px;width:42.5px;height:15.5px;background:#1c1c1c;border-radius:3px;box-shadow:0 0 0 1px #3c3c3c;overflow:hidden;"><span class="t fy" style="position:absolute;left:2px;top:-1.25px;line-height:18px;color:#dcdcdc">-14.00</span><div class="a" style="right:0;top:0;width:9px;height:15.5px;background:#1c1c1c"></div></div><svg class="a" style="left:1252px;top:182px;" width="8" height="13.5" viewBox="0 0 8 13.5"><path d="M4 0.5L7.5 6H0.5Z M0.5 7.5H7.5L4 13.0Z" fill="#888"/></svg><span class="a t fy" style="left:989.5px;top:199.5px;line-height:18px;height:18px;">Local Rotation</span><div class="a" style="left:1108.5px;top:202.5px;width:3px;height:15px;background:#8f1414;border-radius:1px;"></div><div class="a" style="left:1114px;top:202px;width:42.5px;height:15.5px;background:#1c1c1c;border-radius:3px;box-shadow:0 0 0 1px #3c3c3c;overflow:hidden;"><span class="t fy" style="position:absolute;left:2px;top:-1.25px;line-height:18px;color:#dcdcdc">0.000</span><div class="a" style="right:0;top:0;width:9px;height:15.5px;background:#1c1c1c"></div></div><svg class="a" style="left:1148px;top:203px;" width="8" height="13.5" viewBox="0 0 8 13.5"><path d="M4 0.5L7.5 6H0.5Z M0.5 7.5H7.5L4 13.0Z" fill="#888"/></svg><div class="a" style="left:1160.5px;top:202.5px;width:3px;height:15px;background:#0f8a0f;border-radius:1px;"></div><div class="a" style="left:1166px;top:202px;width:42.5px;height:15.5px;background:#1c1c1c;border-radius:3px;box-shadow:0 0 0 1px #3c3c3c;overflow:hidden;"><span class="t fy" style="position:absolute;left:2px;top:-1.25px;line-height:18px;color:#dcdcdc">-0.000</span><div class="a" style="right:0;top:0;width:9px;height:15.5px;background:#1c1c1c"></div></div><svg class="a" style="left:1200px;top:203px;" width="8" height="13.5" viewBox="0 0 8 13.5"><path d="M4 0.5L7.5 6H0.5Z M0.5 7.5H7.5L4 13.0Z" fill="#888"/></svg><div class="a" style="left:1212.5px;top:202.5px;width:3px;height:15px;background:#14148f;border-radius:1px;"></div><div class="a" style="left:1218px;top:202px;width:42.5px;height:15.5px;background:#1c1c1c;border-radius:3px;box-shadow:0 0 0 1px #3c3c3c;overflow:hidden;"><span class="t fy" style="position:absolute;left:2px;top:-1.25px;line-height:18px;color:#dcdcdc">0.000</span><div class="a" style="right:0;top:0;width:9px;height:15.5px;background:#1c1c1c"></div></div><svg class="a" style="left:1252px;top:203px;" width="8" height="13.5" viewBox="0 0 8 13.5"><path d="M4 0.5L7.5 6H0.5Z M0.5 7.5H7.5L4 13.0Z" fill="#888"/></svg><span class="a t fy" style="left:989.5px;top:220.5px;line-height:18px;height:18px;">Pre Rotation</span><div class="a" style="left:1108.5px;top:223.5px;width:3px;height:15px;background:#8f1414;border-radius:1px;"></div><div class="a" style="left:1114px;top:223px;width:42.5px;height:15.5px;background:#1c1c1c;border-radius:3px;box-shadow:0 0 0 1px #3c3c3c;overflow:hidden;"><span class="t fy" style="position:absolute;left:2px;top:-1.25px;line-height:18px;color:#dcdcdc">0.000</span><div class="a" style="right:0;top:0;width:9px;height:15.5px;background:#1c1c1c"></div></div><svg class="a" style="left:1148px;top:224px;" width="8" height="13.5" viewBox="0 0 8 13.5"><path d="M4 0.5L7.5 6H0.5Z M0.5 7.5H7.5L4 13.0Z" fill="#888"/></svg><div class="a" style="left:1160.5px;top:223.5px;width:3px;height:15px;background:#0f8a0f;border-radius:1px;"></div><div class="a" style="left:1166px;top:223px;width:42.5px;height:15.5px;background:#1c1c1c;border-radius:3px;box-shadow:0 0 0 1px #3c3c3c;overflow:hidden;"><span class="t fy" style="position:absolute;left:2px;top:-1.25px;line-height:18px;color:#dcdcdc">-0.000</span><div class="a" style="right:0;top:0;width:9px;height:15.5px;background:#1c1c1c"></div></div><svg class="a" style="left:1200px;top:224px;" width="8" height="13.5" viewBox="0 0 8 13.5"><path d="M4 0.5L7.5 6H0.5Z M0.5 7.5H7.5L4 13.0Z" fill="#888"/></svg><div class="a" style="left:1212.5px;top:223.5px;width:3px;height:15px;background:#14148f;border-radius:1px;"></div><div class="a" style="left:1218px;top:223px;width:42.5px;height:15.5px;background:#1c1c1c;border-radius:3px;box-shadow:0 0 0 1px #3c3c3c;overflow:hidden;"><span class="t fy" style="position:absolute;left:2px;top:-1.25px;line-height:18px;color:#dcdcdc">0.000</span><div class="a" style="right:0;top:0;width:9px;height:15.5px;background:#1c1c1c"></div></div><svg class="a" style="left:1252px;top:224px;" width="8" height="13.5" viewBox="0 0 8 13.5"><path d="M4 0.5L7.5 6H0.5Z M0.5 7.5H7.5L4 13.0Z" fill="#888"/></svg><span class="a t fy" style="left:989.5px;top:241.5px;line-height:18px;height:18px;">Post Rotation</span><div class="a" style="left:1108.5px;top:244.5px;width:3px;height:15px;background:#8f1414;border-radius:1px;"></div><div class="a" style="left:1114px;top:244px;width:42.5px;height:15.5px;background:#1c1c1c;border-radius:3px;box-shadow:0 0 0 1px #3c3c3c;overflow:hidden;"><span class="t fy" style="position:absolute;left:2px;top:-1.25px;line-height:18px;color:#dcdcdc">0.000</span><div class="a" style="right:0;top:0;width:9px;height:15.5px;background:#1c1c1c"></div></div><svg class="a" style="left:1148px;top:245px;" width="8" height="13.5" viewBox="0 0 8 13.5"><path d="M4 0.5L7.5 6H0.5Z M0.5 7.5H7.5L4 13.0Z" fill="#888"/></svg><div class="a" style="left:1160.5px;top:244.5px;width:3px;height:15px;background:#0f8a0f;border-radius:1px;"></div><div class="a" style="left:1166px;top:244px;width:42.5px;height:15.5px;background:#1c1c1c;border-radius:3px;box-shadow:0 0 0 1px #3c3c3c;overflow:hidden;"><span class="t fy" style="position:absolute;left:2px;top:-1.25px;line-height:18px;color:#dcdcdc">-0.000</span><div class="a" style="right:0;top:0;width:9px;height:15.5px;background:#1c1c1c"></div></div><svg class="a" style="left:1200px;top:245px;" width="8" height="13.5" viewBox="0 0 8 13.5"><path d="M4 0.5L7.5 6H0.5Z M0.5 7.5H7.5L4 13.0Z" fill="#888"/></svg><div class="a" style="left:1212.5px;top:244.5px;width:3px;height:15px;background:#14148f;border-radius:1px;"></div><div class="a" style="left:1218px;top:244px;width:42.5px;height:15.5px;background:#1c1c1c;border-radius:3px;box-shadow:0 0 0 1px #3c3c3c;overflow:hidden;"><span class="t fy" style="position:absolute;left:2px;top:-1.25px;line-height:18px;color:#dcdcdc">0.000</span><div class="a" style="right:0;top:0;width:9px;height:15.5px;background:#1c1c1c"></div></div><svg class="a" style="left:1252px;top:245px;" width="8" height="13.5" viewBox="0 0 8 13.5"><path d="M4 0.5L7.5 6H0.5Z M0.5 7.5H7.5L4 13.0Z" fill="#888"/></svg><span class="a t fy" style="left:989.5px;top:262.5px;line-height:18px;height:18px;">Rotation Offset</span><div class="a" style="left:1108.5px;top:265.5px;width:3px;height:15px;background:#8f1414;border-radius:1px;"></div><div class="a" style="left:1114px;top:265px;width:42.5px;height:15.5px;background:#1c1c1c;border-radius:3px;box-shadow:0 0 0 1px #3c3c3c;overflow:hidden;"><span class="t fy" style="position:absolute;left:2px;top:-1.25px;line-height:18px;color:#dcdcdc">0.000</span><div class="a" style="right:0;top:0;width:9px;height:15.5px;background:#1c1c1c"></div></div><svg class="a" style="left:1148px;top:266px;" width="8" height="13.5" viewBox="0 0 8 13.5"><path d="M4 0.5L7.5 6H0.5Z M0.5 7.5H7.5L4 13.0Z" fill="#888"/></svg><div class="a" style="left:1160.5px;top:265.5px;width:3px;height:15px;background:#0f8a0f;border-radius:1px;"></div><div class="a" style="left:1166px;top:265px;width:42.5px;height:15.5px;background:#1c1c1c;border-radius:3px;box-shadow:0 0 0 1px #3c3c3c;overflow:hidden;"><span class="t fy" style="position:absolute;left:2px;top:-1.25px;line-height:18px;color:#dcdcdc">0.000</span><div class="a" style="right:0;top:0;width:9px;height:15.5px;background:#1c1c1c"></div></div><svg class="a" style="left:1200px;top:266px;" width="8" height="13.5" viewBox="0 0 8 13.5"><path d="M4 0.5L7.5 6H0.5Z M0.5 7.5H7.5L4 13.0Z" fill="#888"/></svg><div class="a" style="left:1212.5px;top:265.5px;width:3px;height:15px;background:#14148f;border-radius:1px;"></div><div class="a" style="left:1218px;top:265px;width:42.5px;height:15.5px;background:#1c1c1c;border-radius:3px;box-shadow:0 0 0 1px #3c3c3c;overflow:hidden;"><span class="t fy" style="position:absolute;left:2px;top:-1.25px;line-height:18px;color:#dcdcdc">0.000</span><div class="a" style="right:0;top:0;width:9px;height:15.5px;background:#1c1c1c"></div></div><svg class="a" style="left:1252px;top:266px;" width="8" height="13.5" viewBox="0 0 8 13.5"><path d="M4 0.5L7.5 6H0.5Z M0.5 7.5H7.5L4 13.0Z" fill="#888"/></svg><span class="a t fy" style="left:989.5px;top:283.5px;line-height:18px;height:18px;">Rotation Pivot</span><div class="a" style="left:1108.5px;top:286.5px;width:3px;height:15px;background:#8f1414;border-radius:1px;"></div><div class="a" style="left:1114px;top:286px;width:42.5px;height:15.5px;background:#1c1c1c;border-radius:3px;box-shadow:0 0 0 1px #3c3c3c;overflow:hidden;"><span class="t fy" style="position:absolute;left:2px;top:-1.25px;line-height:18px;color:#dcdcdc">0.000</span><div class="a" style="right:0;top:0;width:9px;height:15.5px;background:#1c1c1c"></div></div><svg class="a" style="left:1148px;top:287px;" width="8" height="13.5" viewBox="0 0 8 13.5"><path d="M4 0.5L7.5 6H0.5Z M0.5 7.5H7.5L4 13.0Z" fill="#888"/></svg><div class="a" style="left:1160.5px;top:286.5px;width:3px;height:15px;background:#0f8a0f;border-radius:1px;"></div><div class="a" style="left:1166px;top:286px;width:42.5px;height:15.5px;background:#1c1c1c;border-radius:3px;box-shadow:0 0 0 1px #3c3c3c;overflow:hidden;"><span class="t fy" style="position:absolute;left:2px;top:-1.25px;line-height:18px;color:#dcdcdc">0.000</span><div class="a" style="right:0;top:0;width:9px;height:15.5px;background:#1c1c1c"></div></div><svg class="a" style="left:1200px;top:287px;" width="8" height="13.5" viewBox="0 0 8 13.5"><path d="M4 0.5L7.5 6H0.5Z M0.5 7.5H7.5L4 13.0Z" fill="#888"/></svg><div class="a" style="left:1212.5px;top:286.5px;width:3px;height:15px;background:#14148f;border-radius:1px;"></div><div class="a" style="left:1218px;top:286px;width:42.5px;height:15.5px;background:#1c1c1c;border-radius:3px;box-shadow:0 0 0 1px #3c3c3c;overflow:hidden;"><span class="t fy" style="position:absolute;left:2px;top:-1.25px;line-height:18px;color:#dcdcdc">0.000</span><div class="a" style="right:0;top:0;width:9px;height:15.5px;background:#1c1c1c"></div></div><svg class="a" style="left:1252px;top:287px;" width="8" height="13.5" viewBox="0 0 8 13.5"><path d="M4 0.5L7.5 6H0.5Z M0.5 7.5H7.5L4 13.0Z" fill="#888"/></svg><span class="a t fy" style="left:989.5px;top:304.5px;line-height:18px;height:18px;">Scaling Offset</span><div class="a" style="left:1108.5px;top:307.5px;width:3px;height:15px;background:#8f1414;border-radius:1px;"></div><div class="a" style="left:1114px;top:307px;width:42.5px;height:15.5px;background:#1c1c1c;border-radius:3px;box-shadow:0 0 0 1px #3c3c3c;overflow:hidden;"><span class="t fy" style="position:absolute;left:2px;top:-1.25px;line-height:18px;color:#dcdcdc">0.000</span><div class="a" style="right:0;top:0;width:9px;height:15.5px;background:#1c1c1c"></div></div><svg class="a" style="left:1148px;top:308px;" width="8" height="13.5" viewBox="0 0 8 13.5"><path d="M4 0.5L7.5 6H0.5Z M0.5 7.5H7.5L4 13.0Z" fill="#888"/></svg><div class="a" style="left:1160.5px;top:307.5px;width:3px;height:15px;background:#0f8a0f;border-radius:1px;"></div><div class="a" style="left:1166px;top:307px;width:42.5px;height:15.5px;background:#1c1c1c;border-radius:3px;box-shadow:0 0 0 1px #3c3c3c;overflow:hidden;"><span class="t fy" style="position:absolute;left:2px;top:-1.25px;line-height:18px;color:#dcdcdc">0.000</span><div class="a" style="right:0;top:0;width:9px;height:15.5px;background:#1c1c1c"></div></div><svg class="a" style="left:1200px;top:308px;" width="8" height="13.5" viewBox="0 0 8 13.5"><path d="M4 0.5L7.5 6H0.5Z M0.5 7.5H7.5L4 13.0Z" fill="#888"/></svg><div class="a" style="left:1212.5px;top:307.5px;width:3px;height:15px;background:#14148f;border-radius:1px;"></div><div class="a" style="left:1218px;top:307px;width:42.5px;height:15.5px;background:#1c1c1c;border-radius:3px;box-shadow:0 0 0 1px #3c3c3c;overflow:hidden;"><span class="t fy" style="position:absolute;left:2px;top:-1.25px;line-height:18px;color:#dcdcdc">0.000</span><div class="a" style="right:0;top:0;width:9px;height:15.5px;background:#1c1c1c"></div></div><svg class="a" style="left:1252px;top:308px;" width="8" height="13.5" viewBox="0 0 8 13.5"><path d="M4 0.5L7.5 6H0.5Z M0.5 7.5H7.5L4 13.0Z" fill="#888"/></svg><span class="a t fy" style="left:989.5px;top:325.5px;line-height:18px;height:18px;">Scaling Pivot</span><div class="a" style="left:1108.5px;top:328.5px;width:3px;height:15px;background:#8f1414;border-radius:1px;"></div><div class="a" style="left:1114px;top:328px;width:42.5px;height:15.5px;background:#1c1c1c;border-radius:3px;box-shadow:0 0 0 1px #3c3c3c;overflow:hidden;"><span class="t fy" style="position:absolute;left:2px;top:-1.25px;line-height:18px;color:#dcdcdc">0.000</span><div class="a" style="right:0;top:0;width:9px;height:15.5px;background:#1c1c1c"></div></div><svg class="a" style="left:1148px;top:329px;" width="8" height="13.5" viewBox="0 0 8 13.5"><path d="M4 0.5L7.5 6H0.5Z M0.5 7.5H7.5L4 13.0Z" fill="#888"/></svg><div class="a" style="left:1160.5px;top:328.5px;width:3px;height:15px;background:#0f8a0f;border-radius:1px;"></div><div class="a" style="left:1166px;top:328px;width:42.5px;height:15.5px;background:#1c1c1c;border-radius:3px;box-shadow:0 0 0 1px #3c3c3c;overflow:hidden;"><span class="t fy" style="position:absolute;left:2px;top:-1.25px;line-height:18px;color:#dcdcdc">0.000</span><div class="a" style="right:0;top:0;width:9px;height:15.5px;background:#1c1c1c"></div></div><svg class="a" style="left:1200px;top:329px;" width="8" height="13.5" viewBox="0 0 8 13.5"><path d="M4 0.5L7.5 6H0.5Z M0.5 7.5H7.5L4 13.0Z" fill="#888"/></svg><div class="a" style="left:1212.5px;top:328.5px;width:3px;height:15px;background:#14148f;border-radius:1px;"></div><div class="a" style="left:1218px;top:328px;width:42.5px;height:15.5px;background:#1c1c1c;border-radius:3px;box-shadow:0 0 0 1px #3c3c3c;overflow:hidden;"><span class="t fy" style="position:absolute;left:2px;top:-1.25px;line-height:18px;color:#dcdcdc">0.000</span><div class="a" style="right:0;top:0;width:9px;height:15.5px;background:#1c1c1c"></div></div><svg class="a" style="left:1252px;top:329px;" width="8" height="13.5" viewBox="0 0 8 13.5"><path d="M4 0.5L7.5 6H0.5Z M0.5 7.5H7.5L4 13.0Z" fill="#888"/></svg><span class="a t fy" style="left:979px;top:346.5px;line-height:18px;height:18px;">Visibility</span><div class="a" style="left:1108px;top:349px;width:14.5px;height:14px;background:#4f78c2;border-radius:3px;"></div><svg class="a" style="left:1108px;top:349px;" width="14.5" height="14" viewBox="0 0 14.5 14"><path d="M3.4 7.6L6 10.6L11 3.6" stroke="#e8e8e8" stroke-width="2" fill="none"/></svg><span class="a t fy" style="left:979px;top:365.5px;line-height:18px;height:18px;">Enabled</span><div class="a" style="left:1108px;top:368px;width:14.5px;height:14px;background:#4f78c2;border-radius:3px;"></div><svg class="a" style="left:1108px;top:368px;" width="14.5" height="14" viewBox="0 0 14.5 14"><path d="M3.4 7.6L6 10.6L11 3.6" stroke="#e8e8e8" stroke-width="2" fill="none"/></svg><span class="a t fy" style="left:979px;top:384.5px;line-height:18px;height:18px;">Render Mask</span><div class="a" style="left:1107px;top:386.3px;width:128px;height:15.5px;background:#f2f2f2;"></div><div class="a" style="left:1108.3px;top:387.6px;width:13.6px;height:13px;background:#b4b4b4;"></div><span class="a t " style="left:1107px;width:16px;text-align:center;top:389.3px;line-height:12px;height:12px;font:bold 9px 'Liberation Mono','DejaVu Sans Mono',monospace;color:#000;letter-spacing:-1.2px;transform:scaleY(1.15);">0</span><div class="a" style="left:1124.3px;top:387.6px;width:13.6px;height:13px;background:#b4b4b4;"></div><span class="a t " style="left:1123px;width:16px;text-align:center;top:389.3px;line-height:12px;height:12px;font:bold 9px 'Liberation Mono','DejaVu Sans Mono',monospace;color:#000;letter-spacing:-1.2px;transform:scaleY(1.15);">1</span><div class="a" style="left:1140.3px;top:387.6px;width:13.6px;height:13px;background:#b4b4b4;"></div><span class="a t " style="left:1139px;width:16px;text-align:center;top:389.3px;line-height:12px;height:12px;font:bold 9px 'Liberation Mono','DejaVu Sans Mono',monospace;color:#000;letter-spacing:-1.2px;transform:scaleY(1.15);">2</span><div class="a" style="left:1156.3px;top:387.6px;width:13.6px;height:13px;background:#b4b4b4;"></div><span class="a t " style="left:1155px;width:16px;text-align:center;top:389.3px;line-height:12px;height:12px;font:bold 9px 'Liberation Mono','DejaVu Sans Mono',monospace;color:#000;letter-spacing:-1.2px;transform:scaleY(1.15);">3</span><div class="a" style="left:1172.3px;top:387.6px;width:13.6px;height:13px;background:#b4b4b4;"></div><span class="a t " style="left:1171px;width:16px;text-align:center;top:389.3px;line-height:12px;height:12px;font:bold 9px 'Liberation Mono','DejaVu Sans Mono',monospace;color:#000;letter-spacing:-1.2px;transform:scaleY(1.15);">4</span><div class="a" style="left:1188.3px;top:387.6px;width:13.6px;height:13px;background:#b4b4b4;"></div><span class="a t " style="left:1187px;width:16px;text-align:center;top:389.3px;line-height:12px;height:12px;font:bold 9px 'Liberation Mono','DejaVu Sans Mono',monospace;color:#000;letter-spacing:-1.2px;transform:scaleY(1.15);">5</span><div class="a" style="left:1204.3px;top:387.6px;width:13.6px;height:13px;background:#b4b4b4;"></div><span class="a t " style="left:1203px;width:16px;text-align:center;top:389.3px;line-height:12px;height:12px;font:bold 9px 'Liberation Mono','DejaVu Sans Mono',monospace;color:#000;letter-spacing:-1.2px;transform:scaleY(1.15);">6</span><div class="a" style="left:1220.3px;top:387.6px;width:13.6px;height:13px;background:#b4b4b4;"></div><span class="a t " style="left:1219px;width:16px;text-align:center;top:389.3px;line-height:12px;height:12px;font:bold 9px 'Liberation Mono','DejaVu Sans Mono',monospace;color:#000;letter-spacing:-1.2px;transform:scaleY(1.15);">7</span><div class="a" style="left:1107px;top:406.3px;width:128px;height:15.5px;background:#f2f2f2;"></div><div class="a" style="left:1108.3px;top:407.6px;width:13.6px;height:13px;background:#b4b4b4;"></div><span class="a t " style="left:1107px;width:16px;text-align:center;top:409.3px;line-height:12px;height:12px;font:bold 9px 'Liberation Mono','DejaVu Sans Mono',monospace;color:#000;letter-spacing:-1.2px;transform:scaleY(1.15);">8</span><div class="a" style="left:1124.3px;top:407.6px;width:13.6px;height:13px;background:#b4b4b4;"></div><span class="a t " style="left:1123px;width:16px;text-align:center;top:409.3px;line-height:12px;height:12px;font:bold 9px 'Liberation Mono','DejaVu Sans Mono',monospace;color:#000;letter-spacing:-1.2px;transform:scaleY(1.15);">9</span><div class="a" style="left:1140.3px;top:407.6px;width:13.6px;height:13px;background:#b4b4b4;"></div><span class="a t " style="left:1139px;width:16px;text-align:center;top:409.3px;line-height:12px;height:12px;font:bold 9px 'Liberation Mono','DejaVu Sans Mono',monospace;color:#000;letter-spacing:-1.2px;transform:scaleY(1.15);">10</span><div class="a" style="left:1156.3px;top:407.6px;width:13.6px;height:13px;background:#b4b4b4;"></div><span class="a t " style="left:1155px;width:16px;text-align:center;top:409.3px;line-height:12px;height:12px;font:bold 9px 'Liberation Mono','DejaVu Sans Mono',monospace;color:#000;letter-spacing:-1.2px;transform:scaleY(1.15);">11</span><div class="a" style="left:1172.3px;top:407.6px;width:13.6px;height:13px;background:#b4b4b4;"></div><span class="a t " style="left:1171px;width:16px;text-align:center;top:409.3px;line-height:12px;height:12px;font:bold 9px 'Liberation Mono','DejaVu Sans Mono',monospace;color:#000;letter-spacing:-1.2px;transform:scaleY(1.15);">12</span><div class="a" style="left:1188.3px;top:407.6px;width:13.6px;height:13px;background:#b4b4b4;"></div><span class="a t " style="left:1187px;width:16px;text-align:center;top:409.3px;line-height:12px;height:12px;font:bold 9px 'Liberation Mono','DejaVu Sans Mono',monospace;color:#000;letter-spacing:-1.2px;transform:scaleY(1.15);">13</span><div class="a" style="left:1204.3px;top:407.6px;width:13.6px;height:13px;background:#b4b4b4;"></div><span class="a t " style="left:1203px;width:16px;text-align:center;top:409.3px;line-height:12px;height:12px;font:bold 9px 'Liberation Mono','DejaVu Sans Mono',monospace;color:#000;letter-spacing:-1.2px;transform:scaleY(1.15);">14</span><div class="a" style="left:1220.3px;top:407.6px;width:13.6px;height:13px;background:#b4b4b4;"></div><span class="a t " style="left:1219px;width:16px;text-align:center;top:409.3px;line-height:12px;height:12px;font:bold 9px 'Liberation Mono','DejaVu Sans Mono',monospace;color:#000;letter-spacing:-1.2px;transform:scaleY(1.15);">15</span><div class="a" style="left:1107px;top:426.3px;width:128px;height:15.5px;background:#f2f2f2;"></div><div class="a" style="left:1108.3px;top:427.6px;width:13.6px;height:13px;background:#b4b4b4;"></div><span class="a t " style="left:1107px;width:16px;text-align:center;top:429.3px;line-height:12px;height:12px;font:bold 9px 'Liberation Mono','DejaVu Sans Mono',monospace;color:#000;letter-spacing:-1.2px;transform:scaleY(1.15);">16</span><div class="a" style="left:1124.3px;top:427.6px;width:13.6px;height:13px;background:#b4b4b4;"></div><span class="a t " style="left:1123px;width:16px;text-align:center;top:429.3px;line-height:12px;height:12px;font:bold 9px 'Liberation Mono','DejaVu Sans Mono',monospace;color:#000;letter-spacing:-1.2px;transform:scaleY(1.15);">17</span><div class="a" style="left:1140.3px;top:427.6px;width:13.6px;height:13px;background:#b4b4b4;"></div><span class="a t " style="left:1139px;width:16px;text-align:center;top:429.3px;line-height:12px;height:12px;font:bold 9px 'Liberation Mono','DejaVu Sans Mono',monospace;color:#000;letter-spacing:-1.2px;transform:scaleY(1.15);">18</span><div class="a" style="left:1156.3px;top:427.6px;width:13.6px;height:13px;background:#b4b4b4;"></div><span class="a t " style="left:1155px;width:16px;text-align:center;top:429.3px;line-height:12px;height:12px;font:bold 9px 'Liberation Mono','DejaVu Sans Mono',monospace;color:#000;letter-spacing:-1.2px;transform:scaleY(1.15);">19</span><div class="a" style="left:1172.3px;top:427.6px;width:13.6px;height:13px;background:#b4b4b4;"></div><span class="a t " style="left:1171px;width:16px;text-align:center;top:429.3px;line-height:12px;height:12px;font:bold 9px 'Liberation Mono','DejaVu Sans Mono',monospace;color:#000;letter-spacing:-1.2px;transform:scaleY(1.15);">20</span><div class="a" style="left:1188.3px;top:427.6px;width:13.6px;height:13px;background:#b4b4b4;"></div><span class="a t " style="left:1187px;width:16px;text-align:center;top:429.3px;line-height:12px;height:12px;font:bold 9px 'Liberation Mono','DejaVu Sans Mono',monospace;color:#000;letter-spacing:-1.2px;transform:scaleY(1.15);">21</span><div class="a" style="left:1204.3px;top:427.6px;width:13.6px;height:13px;background:#b4b4b4;"></div><span class="a t " style="left:1203px;width:16px;text-align:center;top:429.3px;line-height:12px;height:12px;font:bold 9px 'Liberation Mono','DejaVu Sans Mono',monospace;color:#000;letter-spacing:-1.2px;transform:scaleY(1.15);">22</span><div class="a" style="left:1220.3px;top:427.6px;width:13.6px;height:13px;background:#b4b4b4;"></div><span class="a t " style="left:1219px;width:16px;text-align:center;top:429.3px;line-height:12px;height:12px;font:bold 9px 'Liberation Mono','DejaVu Sans Mono',monospace;color:#000;letter-spacing:-1.2px;transform:scaleY(1.15);">23</span><div class="a" style="left:1107px;top:446.3px;width:128px;height:15.5px;background:#f2f2f2;"></div><div class="a" style="left:1108.3px;top:447.6px;width:13.6px;height:13px;background:#b4b4b4;"></div><span class="a t " style="left:1107px;width:16px;text-align:center;top:449.3px;line-height:12px;height:12px;font:bold 9px 'Liberation Mono','DejaVu Sans Mono',monospace;color:#000;letter-spacing:-1.2px;transform:scaleY(1.15);">24</span><div class="a" style="left:1124.3px;top:447.6px;width:13.6px;height:13px;background:#b4b4b4;"></div><span class="a t " style="left:1123px;width:16px;text-align:center;top:449.3px;line-height:12px;height:12px;font:bold 9px 'Liberation Mono','DejaVu Sans Mono',monospace;color:#000;letter-spacing:-1.2px;transform:scaleY(1.15);">25</span><div class="a" style="left:1140.3px;top:447.6px;width:13.6px;height:13px;background:#b4b4b4;"></div><span class="a t " style="left:1139px;width:16px;text-align:center;top:449.3px;line-height:12px;height:12px;font:bold 9px 'Liberation Mono','DejaVu Sans Mono',monospace;color:#000;letter-spacing:-1.2px;transform:scaleY(1.15);">26</span><div class="a" style="left:1156.3px;top:447.6px;width:13.6px;height:13px;background:#b4b4b4;"></div><span class="a t " style="left:1155px;width:16px;text-align:center;top:449.3px;line-height:12px;height:12px;font:bold 9px 'Liberation Mono','DejaVu Sans Mono',monospace;color:#000;letter-spacing:-1.2px;transform:scaleY(1.15);">27</span><div class="a" style="left:1172.3px;top:447.6px;width:13.6px;height:13px;background:#b4b4b4;"></div><span class="a t " style="left:1171px;width:16px;text-align:center;top:449.3px;line-height:12px;height:12px;font:bold 9px 'Liberation Mono','DejaVu Sans Mono',monospace;color:#000;letter-spacing:-1.2px;transform:scaleY(1.15);">28</span><div class="a" style="left:1188.3px;top:447.6px;width:13.6px;height:13px;background:#b4b4b4;"></div><span class="a t " style="left:1187px;width:16px;text-align:center;top:449.3px;line-height:12px;height:12px;font:bold 9px 'Liberation Mono','DejaVu Sans Mono',monospace;color:#000;letter-spacing:-1.2px;transform:scaleY(1.15);">29</span><div class="a" style="left:1204.3px;top:447.6px;width:13.6px;height:13px;background:#b4b4b4;"></div><span class="a t " style="left:1203px;width:16px;text-align:center;top:449.3px;line-height:12px;height:12px;font:bold 9px 'Liberation Mono','DejaVu Sans Mono',monospace;color:#000;letter-spacing:-1.2px;transform:scaleY(1.15);">30</span><div class="a" style="left:1220.3px;top:447.6px;width:13.6px;height:13px;background:#b4b4b4;"></div><span class="a t " style="left:1219px;width:16px;text-align:center;top:449.3px;line-height:12px;height:12px;font:bold 9px 'Liberation Mono','DejaVu Sans Mono',monospace;color:#000;letter-spacing:-1.2px;transform:scaleY(1.15);">31</span><svg class="a" style="left:969.5px;top:468px;" width="8" height="8" viewBox="0 0 8 8"><path d="M0 0.5H8L4 8Z" fill="#8c8c8c"/></svg><span class="a t fy" style="left:979px;top:465px;line-height:18px;height:18px;">Lifetime</span><div class="a" style="left:1108px;top:465.7px;width:154.5px;height:18px;background:#1d1d1d;border-radius:4px;box-shadow:0 0 0 1px #3a3a3a;"></div><div class="a" style="left:1109px;top:466.7px;width:138.5px;height:16px;background:#464646;border-radius:3px;"></div><span class="a t fy" style="left:1108px;width:140.5px;text-align:center;top:466.2px;line-height:18px;height:18px;">None</span><svg class="a" style="left:1251px;top:471.7px;" width="9" height="6" viewBox="0 0 9 6"><path d="M0 0H9L4.5 6Z" fill="#d0d0d0"/></svg><svg class="a" style="left:969.5px;top:491px;" width="8" height="8" viewBox="0 0 8 8"><path d="M0 0.5H8L4 8Z" fill="#8c8c8c"/></svg><span class="a t fy" style="left:979px;top:488px;line-height:18px;height:18px;">Lod Group</span><div class="a" style="left:1108px;top:488.5px;width:154.5px;height:18px;background:#1d1d1d;border-radius:4px;box-shadow:0 0 0 1px #3a3a3a;"></div><div class="a" style="left:1109px;top:489.5px;width:138.5px;height:16px;background:#464646;border-radius:3px;"></div><span class="a t fy" style="left:1108px;width:140.5px;text-align:center;top:489px;line-height:18px;height:18px;">None</span><svg class="a" style="left:1251px;top:494.5px;" width="9" height="6" viewBox="0 0 9 6"><path d="M0 0H9L4.5 6Z" fill="#d0d0d0"/></svg><svg class="a" style="left:969.5px;top:513.5px;" width="8" height="8" viewBox="0 0 8 8"><path d="M0 0.5H8L4 8Z" fill="#8c8c8c"/></svg><span class="a t fy" style="left:979px;top:510.5px;line-height:18px;height:18px;">Mobility</span><div class="a" style="left:1108px;top:511px;width:154.5px;height:18.5px;background:#1d1d1d;border-radius:4px;box-shadow:0 0 0 1px #3a3a3a;"></div><div class="a" style="left:1109px;top:512px;width:138.5px;height:16.5px;background:#464646;border-radius:3px;"></div><span class="a t fy" style="left:1108px;width:140.5px;text-align:center;top:511.75px;line-height:18px;height:18px;">Static</span><svg class="a" style="left:1251px;top:517.25px;" width="9" height="6" viewBox="0 0 9 6"><path d="M0 0H9L4.5 6Z" fill="#d0d0d0"/></svg><span class="a t fy" style="left:979px;top:531.5px;line-height:18px;height:18px;">Tag</span><div class="a" style="left:1108px;top:533px;width:154.5px;height:17px;background:#1c1c1c;"></div><span class="a t fy" style="left:979px;top:550.5px;line-height:18px;height:18px;">Cast Shadows</span><div class="a" style="left:1108px;top:553px;width:14.5px;height:14px;background:#4f78c2;border-radius:3px;"></div><svg class="a" style="left:1108px;top:553px;" width="14.5" height="14" viewBox="0 0 14.5 14"><path d="M3.4 7.6L6 10.6L11 3.6" stroke="#e8e8e8" stroke-width="2" fill="none"/></svg><svg class="a" style="left:969.5px;top:573px;" width="8" height="8" viewBox="0 0 8 8"><path d="M0 0.5H8L4 8Z" fill="#8c8c8c"/></svg><span class="a t fy" style="left:979px;top:570.3px;line-height:18px;height:18px;">Properties</span><div class="a" style="left:1249px;top:572.3px;width:13.5px;height:14px;background:#434343;border-radius:3px;box-shadow:0 0 0 1px #2a2a2a;"></div><svg class="a" style="left:1249px;top:572.3px;" width="13.5" height="14" viewBox="0 0 13.5 14"><path d="M6.75 3.5V10.5M3.2 7H10.3" stroke="#d8d8d8" stroke-width="1.4"/></svg><span class="a t fy" style="left:979px;top:589.5px;line-height:18px;height:18px;">Frustum Culling</span><div class="a" style="left:1108px;top:592px;width:14.5px;height:14px;background:#4f78c2;border-radius:3px;"></div><svg class="a" style="left:1108px;top:592px;" width="14.5" height="14" viewBox="0 0 14.5 14"><path d="M3.4 7.6L6 10.6L11 3.6" stroke="#e8e8e8" stroke-width="2" fill="none"/></svg><div class="a" style="left:979px;top:608px;width:125px;height:19px;overflow:hidden;"><span class="a t fy" style="left:0px;top:0.3px;line-height:18px;height:18px;">Is Resource Instance</span></div><div class="a" style="left:1108px;top:610.5px;width:15px;height:14.5px;background:#1a1a1a;border-radius:3px;"></div><span class="a t fy" style="left:979px;top:627.5px;line-height:18px;height:18px;">Global Visibility</span><div class="a" style="left:1108px;top:630px;width:14.5px;height:14px;background:#3a4a6c;border-radius:3px;"></div><svg class="a" style="left:1108px;top:630px;" width="14.5" height="14" viewBox="0 0 14.5 14"><path d="M3.4 7.6L6 10.6L11 3.6" stroke="#7f8db0" stroke-width="2" fill="none"/></svg><span class="a t fy" style="left:979px;top:646.3px;line-height:18px;height:18px;">Global Transform</span><div class="a" style="left:1110.5px;top:649px;width:33.5px;height:14.5px;background:#292929;border-radius:3px;box-shadow:0 0 0 1px #383838;overflow:hidden;"><span class="t fy" style="position:absolute;left:2px;top:-1.75px;line-height:18px;color:#6c6c6c">1.000</span><div class="a" style="right:0;top:0;width:9px;height:14.5px;background:#292929"></div></div><svg class="a" style="left:1135.5px;top:650px;" width="8" height="12.5" viewBox="0 0 8 12.5"><path d="M4 0.5L7.5 6H0.5Z M0.5 6.5H7.5L4 12.0Z" fill="#555"/></svg><div class="a" style="left:1149.6px;top:649px;width:33.5px;height:14.5px;background:#292929;border-radius:3px;box-shadow:0 0 0 1px #383838;overflow:hidden;"><span class="t fy" style="position:absolute;left:2px;top:-1.75px;line-height:18px;color:#6c6c6c">0.000</span><div class="a" style="right:0;top:0;width:9px;height:14.5px;background:#292929"></div></div><svg class="a" style="left:1174.6px;top:650px;" width="8" height="12.5" viewBox="0 0 8 12.5"><path d="M4 0.5L7.5 6H0.5Z M0.5 6.5H7.5L4 12.0Z" fill="#555"/></svg><div class="a" style="left:1188.7px;top:649px;width:33.5px;height:14.5px;background:#292929;border-radius:3px;box-shadow:0 0 0 1px #383838;overflow:hidden;"><span class="t fy" style="position:absolute;left:2px;top:-1.75px;line-height:18px;color:#6c6c6c">0.000</span><div class="a" style="right:0;top:0;width:9px;height:14.5px;background:#292929"></div></div><svg class="a" style="left:1213.7px;top:650px;" width="8" height="12.5" viewBox="0 0 8 12.5"><path d="M4 0.5L7.5 6H0.5Z M0.5 6.5H7.5L4 12.0Z" fill="#555"/></svg><div class="a" style="left:1227.8px;top:649px;width:33.5px;height:14.5px;background:#292929;border-radius:3px;box-shadow:0 0 0 1px #383838;overflow:hidden;"><span class="t fy" style="position:absolute;left:2px;top:-1.75px;line-height:18px;color:#6c6c6c">-2.00</span><div class="a" style="right:0;top:0;width:9px;height:14.5px;background:#292929"></div></div><svg class="a" style="left:1252.8px;top:650px;" width="8" height="12.5" viewBox="0 0 8 12.5"><path d="M4 0.5L7.5 6H0.5Z M0.5 6.5H7.5L4 12.0Z" fill="#555"/></svg><div class="a" style="left:1110.5px;top:668.2px;width:33.5px;height:14.5px;background:#292929;border-radius:3px;box-shadow:0 0 0 1px #383838;overflow:hidden;"><span class="t fy" style="position:absolute;left:2px;top:-1.75px;line-height:18px;color:#6c6c6c">0.000</span><div class="a" style="right:0;top:0;width:9px;height:14.5px;background:#292929"></div></div><svg class="a" style="left:1135.5px;top:669.2px;" width="8" height="12.5" viewBox="0 0 8 12.5"><path d="M4 0.5L7.5 6H0.5Z M0.5 6.5H7.5L4 12.0Z" fill="#555"/></svg><div class="a" style="left:1149.6px;top:668.2px;width:33.5px;height:14.5px;background:#292929;border-radius:3px;box-shadow:0 0 0 1px #383838;overflow:hidden;"><span class="t fy" style="position:absolute;left:2px;top:-1.75px;line-height:18px;color:#6c6c6c">1.000</span><div class="a" style="right:0;top:0;width:9px;height:14.5px;background:#292929"></div></div><svg class="a" style="left:1174.6px;top:669.2px;" width="8" height="12.5" viewBox="0 0 8 12.5"><path d="M4 0.5L7.5 6H0.5Z M0.5 6.5H7.5L4 12.0Z" fill="#555"/></svg><div class="a" style="left:1188.7px;top:668.2px;width:33.5px;height:14.5px;background:#292929;border-radius:3px;box-shadow:0 0 0 1px #383838;overflow:hidden;"><span class="t fy" style="position:absolute;left:2px;top:-1.75px;line-height:18px;color:#6c6c6c">0.000</span><div class="a" style="right:0;top:0;width:9px;height:14.5px;background:#292929"></div></div><svg class="a" style="left:1213.7px;top:669.2px;" width="8" height="12.5" viewBox="0 0 8 12.5"><path d="M4 0.5L7.5 6H0.5Z M0.5 6.5H7.5L4 12.0Z" fill="#555"/></svg><div class="a" style="left:1227.8px;top:668.2px;width:33.5px;height:14.5px;background:#292929;border-radius:3px;box-shadow:0 0 0 1px #383838;overflow:hidden;"><span class="t fy" style="position:absolute;left:2px;top:-1.75px;line-height:18px;color:#6c6c6c">0.000</span><div class="a" style="right:0;top:0;width:9px;height:14.5px;background:#292929"></div></div><svg class="a" style="left:1252.8px;top:669.2px;" width="8" height="12.5" viewBox="0 0 8 12.5"><path d="M4 0.5L7.5 6H0.5Z M0.5 6.5H7.5L4 12.0Z" fill="#555"/></svg><div class="a" style="left:1110.5px;top:687.4px;width:33.5px;height:14.5px;background:#292929;border-radius:3px;box-shadow:0 0 0 1px #383838;overflow:hidden;"><span class="t fy" style="position:absolute;left:2px;top:-1.75px;line-height:18px;color:#6c6c6c">0.000</span><div class="a" style="right:0;top:0;width:9px;height:14.5px;background:#292929"></div></div><svg class="a" style="left:1135.5px;top:688.4px;" width="8" height="12.5" viewBox="0 0 8 12.5"><path d="M4 0.5L7.5 6H0.5Z M0.5 6.5H7.5L4 12.0Z" fill="#555"/></svg><div class="a" style="left:1149.6px;top:687.4px;width:33.5px;height:14.5px;background:#292929;border-radius:3px;box-shadow:0 0 0 1px #383838;overflow:hidden;"><span class="t fy" style="position:absolute;left:2px;top:-1.75px;line-height:18px;color:#6c6c6c">0.000</span><div class="a" style="right:0;top:0;width:9px;height:14.5px;background:#292929"></div></div><svg class="a" style="left:1174.6px;top:688.4px;" width="8" height="12.5" viewBox="0 0 8 12.5"><path d="M4 0.5L7.5 6H0.5Z M0.5 6.5H7.5L4 12.0Z" fill="#555"/></svg><div class="a" style="left:1188.7px;top:687.4px;width:33.5px;height:14.5px;background:#292929;border-radius:3px;box-shadow:0 0 0 1px #383838;overflow:hidden;"><span class="t fy" style="position:absolute;left:2px;top:-1.75px;line-height:18px;color:#6c6c6c">1.000</span><div class="a" style="right:0;top:0;width:9px;height:14.5px;background:#292929"></div></div><svg class="a" style="left:1213.7px;top:688.4px;" width="8" height="12.5" viewBox="0 0 8 12.5"><path d="M4 0.5L7.5 6H0.5Z M0.5 6.5H7.5L4 12.0Z" fill="#555"/></svg><div class="a" style="left:1227.8px;top:687.4px;width:33.5px;height:14.5px;background:#292929;border-radius:3px;box-shadow:0 0 0 1px #383838;overflow:hidden;"><span class="t fy" style="position:absolute;left:2px;top:-1.75px;line-height:18px;color:#6c6c6c">-14.0</span><div class="a" style="right:0;top:0;width:9px;height:14.5px;background:#292929"></div></div><svg class="a" style="left:1252.8px;top:688.4px;" width="8" height="12.5" viewBox="0 0 8 12.5"><path d="M4 0.5L7.5 6H0.5Z M0.5 6.5H7.5L4 12.0Z" fill="#555"/></svg><div class="a" style="left:1110.5px;top:706.6px;width:33.5px;height:14.5px;background:#292929;border-radius:3px;box-shadow:0 0 0 1px #383838;overflow:hidden;"><span class="t fy" style="position:absolute;left:2px;top:-1.75px;line-height:18px;color:#6c6c6c">0.000</span><div class="a" style="right:0;top:0;width:9px;height:14.5px;background:#292929"></div></div><svg class="a" style="left:1135.5px;top:707.6px;" width="8" height="12.5" viewBox="0 0 8 12.5"><path d="M4 0.5L7.5 6H0.5Z M0.5 6.5H7.5L4 12.0Z" fill="#555"/></svg><div class="a" style="left:1149.6px;top:706.6px;width:33.5px;height:14.5px;background:#292929;border-radius:3px;box-shadow:0 0 0 1px #383838;overflow:hidden;"><span class="t fy" style="position:absolute;left:2px;top:-1.75px;line-height:18px;color:#6c6c6c">0.000</span><div class="a" style="right:0;top:0;width:9px;height:14.5px;background:#292929"></div></div><svg class="a" style="left:1174.6px;top:707.6px;" width="8" height="12.5" viewBox="0 0 8 12.5"><path d="M4 0.5L7.5 6H0.5Z M0.5 6.5H7.5L4 12.0Z" fill="#555"/></svg><div class="a" style="left:1188.7px;top:706.6px;width:33.5px;height:14.5px;background:#292929;border-radius:3px;box-shadow:0 0 0 1px #383838;overflow:hidden;"><span class="t fy" style="position:absolute;left:2px;top:-1.75px;line-height:18px;color:#6c6c6c">0.000</span><div class="a" style="right:0;top:0;width:9px;height:14.5px;background:#292929"></div></div><svg class="a" style="left:1213.7px;top:707.6px;" width="8" height="12.5" viewBox="0 0 8 12.5"><path d="M4 0.5L7.5 6H0.5Z M0.5 6.5H7.5L4 12.0Z" fill="#555"/></svg><div class="a" style="left:1227.8px;top:706.6px;width:33.5px;height:14.5px;background:#292929;border-radius:3px;box-shadow:0 0 0 1px #383838;overflow:hidden;"><span class="t fy" style="position:absolute;left:2px;top:-1.75px;line-height:18px;color:#6c6c6c">1.000</span><div class="a" style="right:0;top:0;width:9px;height:14.5px;background:#292929"></div></div><svg class="a" style="left:1252.8px;top:707.6px;" width="8" height="12.5" viewBox="0 0 8 12.5"><path d="M4 0.5L7.5 6H0.5Z M0.5 6.5H7.5L4 12.0Z" fill="#555"/></svg><span class="a t fy" style="left:979.5px;top:724.5px;line-height:18px;height:18px;">Resource</span><div class="a" style="left:1108px;top:728px;width:16px;height:16px;background:#8c8c8c;"></div><span class="a t fy" style="left:1126.5px;top:724px;line-height:18px;height:18px;color:#6c6c6c;">None</span><div class="a" style="left:1219.5px;top:726px;width:20.5px;height:17px;background:#383838;border-radius:3px;"></div><span class="a t fy" style="left:1218.7px;width:22px;text-align:center;top:724.5px;line-height:18px;height:18px;color:#6a6a6a;font-size:11px;">&lt;&lt;</span><div class="a" style="left:1246px;top:726px;width:16px;height:17px;background:#383838;border-radius:3px;"></div><svg class="a" style="left:1246px;top:726px;" width="16" height="17" viewBox="0 0 16 17"><circle cx="8" cy="8.7" r="5.7" stroke="#1f9a1f" stroke-width="1.2" fill="none"/><circle cx="8" cy="8.7" r="3.4" fill="#1f9a1f"/></svg><svg class="a" style="left:969.5px;top:750px;" width="8" height="8" viewBox="0 0 8 8"><path d="M0 0.5H8L4 8Z" fill="#8c8c8c"/></svg><span class="a t fy" style="left:979.5px;top:747px;line-height:18px;height:18px;">Instance Id</span><span class="a t fy" style="left:989px;top:764.5px;line-height:18px;height:18px;">0</span><div class="a" style="left:1108px;top:764px;width:129px;height:19px;overflow:hidden;"><span class="a t fy" style="left:2px;top:0.8px;line-height:18px;height:18px;">1e5d8434-621d-480b</span></div><div class="a" style="left:1240px;top:766px;width:21.5px;height:15.5px;background:#424242;border-radius:3px;"></div><span class="a t fy" style="left:1238.8px;width:24px;text-align:center;top:765px;line-height:18px;height:18px;font-size:12.5px;">^/v</span><svg class="a" style="left:969.5px;top:789px;" width="8" height="8" viewBox="0 0 8 8"><path d="M0 0.5H8L4 8Z" fill="#8c8c8c"/></svg><span class="a t fy" style="left:979.5px;top:786.3px;line-height:18px;height:18px;">Scripts</span><div class="a" style="left:1249px;top:788.3px;width:13.5px;height:14px;background:#434343;border-radius:3px;box-shadow:0 0 0 1px #2a2a2a;"></div><svg class="a" style="left:1249px;top:788.3px;" width="13.5" height="14" viewBox="0 0 13.5 14"><path d="M6.75 3.5V10.5M3.2 7H10.3" stroke="#d8d8d8" stroke-width="1.4"/></svg><span class="a t fy" style="left:979.5px;top:805.3px;line-height:18px;height:18px;">Global Enabled</span><div class="a" style="left:1108px;top:807.5px;width:14.5px;height:14px;background:#3a4a6c;border-radius:3px;"></div><svg class="a" style="left:1108px;top:807.5px;" width="14.5" height="14" viewBox="0 0 14.5 14"><path d="M3.4 7.6L6 10.6L11 3.6" stroke="#7f8db0" stroke-width="2" fill="none"/></svg><span class="a t fy" style="left:969.5px;top:824.5px;line-height:18px;height:18px;">Lin Vel</span><div class="a" style="left:1108.5px;top:827.5px;width:3px;height:15px;background:#8f1414;border-radius:1px;"></div><div class="a" style="left:1114px;top:827px;width:42.5px;height:15.5px;background:#1c1c1c;border-radius:3px;box-shadow:0 0 0 1px #3c3c3c;overflow:hidden;"><span class="t fy" style="position:absolute;left:2px;top:-1.25px;line-height:18px;color:#dcdcdc">0.000</span><div class="a" style="right:0;top:0;width:9px;height:15.5px;background:#1c1c1c"></div></div><svg class="a" style="left:1148px;top:828px;" width="8" height="13.5" viewBox="0 0 8 13.5"><path d="M4 0.5L7.5 6H0.5Z M0.5 7.5H7.5L4 13.0Z" fill="#888"/></svg><div class="a" style="left:1160.5px;top:827.5px;width:3px;height:15px;background:#0f8a0f;border-radius:1px;"></div><div class="a" style="left:1166px;top:827px;width:42.5px;height:15.5px;background:#1c1c1c;border-radius:3px;box-shadow:0 0 0 1px #3c3c3c;overflow:hidden;"><span class="t fy" style="position:absolute;left:2px;top:-1.25px;line-height:18px;color:#dcdcdc">0.000</span><div class="a" style="right:0;top:0;width:9px;height:15.5px;background:#1c1c1c"></div></div><svg class="a" style="left:1200px;top:828px;" width="8" height="13.5" viewBox="0 0 8 13.5"><path d="M4 0.5L7.5 6H0.5Z M0.5 7.5H7.5L4 13.0Z" fill="#888"/></svg><div class="a" style="left:1212.5px;top:827.5px;width:3px;height:15px;background:#14148f;border-radius:1px;"></div><div class="a" style="left:1218px;top:827px;width:42.5px;height:15.5px;background:#1c1c1c;border-radius:3px;box-shadow:0 0 0 1px #3c3c3c;overflow:hidden;"><span class="t fy" style="position:absolute;left:2px;top:-1.25px;line-height:18px;color:#dcdcdc">0.000</span><div class="a" style="right:0;top:0;width:9px;height:15.5px;background:#1c1c1c"></div></div><svg class="a" style="left:1252px;top:828px;" width="8" height="13.5" viewBox="0 0 8 13.5"><path d="M4 0.5L7.5 6H0.5Z M0.5 7.5H7.5L4 13.0Z" fill="#888"/></svg><span class="a t fy" style="left:969.5px;top:845.3px;line-height:18px;height:18px;">Ang Vel</span><div class="a" style="left:1108.5px;top:848.5px;width:3px;height:15px;background:#8f1414;border-radius:1px;"></div><div class="a" style="left:1114px;top:848px;width:42.5px;height:15.5px;background:#1c1c1c;border-radius:3px;box-shadow:0 0 0 1px #3c3c3c;overflow:hidden;"><span class="t fy" style="position:absolute;left:2px;top:-1.25px;line-height:18px;color:#dcdcdc">0.000</span><div class="a" style="right:0;top:0;width:9px;height:15.5px;background:#1c1c1c"></div></div><svg class="a" style="left:1148px;top:849px;" width="8" height="13.5" viewBox="0 0 8 13.5"><path d="M4 0.5L7.5 6H0.5Z M0.5 7.5H7.5L4 13.0Z" fill="#888"/></svg><div class="a" style="left:1160.5px;top:848.5px;width:3px;height:15px;background:#0f8a0f;border-radius:1px;"></div><div class="a" style="left:1166px;top:848px;width:42.5px;height:15.5px;background:#1c1c1c;border-radius:3px;box-shadow:0 0 0 1px #3c3c3c;overflow:hidden;"><span class="t fy" style="position:absolute;left:2px;top:-1.25px;line-height:18px;color:#dcdcdc">0.000</span><div class="a" style="right:0;top:0;width:9px;height:15.5px;background:#1c1c1c"></div></div><svg class="a" style="left:1200px;top:849px;" width="8" height="13.5" viewBox="0 0 8 13.5"><path d="M4 0.5L7.5 6H0.5Z M0.5 7.5H7.5L4 13.0Z" fill="#888"/></svg><div class="a" style="left:1212.5px;top:848.5px;width:3px;height:15px;background:#14148f;border-radius:1px;"></div><div class="a" style="left:1218px;top:848px;width:42.5px;height:15.5px;background:#1c1c1c;border-radius:3px;box-shadow:0 0 0 1px #3c3c3c;overflow:hidden;"><span class="t fy" style="position:absolute;left:2px;top:-1.25px;line-height:18px;color:#dcdcdc">0.000</span><div class="a" style="right:0;top:0;width:9px;height:15.5px;background:#1c1c1c"></div></div><svg class="a" style="left:1252px;top:849px;" width="8" height="13.5" viewBox="0 0 8 13.5"><path d="M4 0.5L7.5 6H0.5Z M0.5 7.5H7.5L4 13.0Z" fill="#888"/></svg><span class="a t fy" style="left:969.5px;top:866.3px;line-height:18px;height:18px;">Lin Damping</span><div class="a" style="left:1108px;top:869px;width:154px;height:16px;background:#1c1c1c;border-radius:3px;box-shadow:0 0 0 1px #3c3c3c;overflow:hidden;"><span class="t fy" style="position:absolute;left:2px;top:-1px;line-height:18px;color:#dcdcdc">0.000</span><div class="a" style="right:0;top:0;width:9px;height:16px;background:#1c1c1c"></div></div><svg class="a" style="left:1253.5px;top:870px;" width="8" height="14" viewBox="0 0 8 14"><path d="M4 0.5L7.5 6H0.5Z M0.5 8H7.5L4 13.5Z" fill="#888"/></svg><span class="a t fy" style="left:969.5px;top:887.5px;line-height:18px;height:18px;">Ang Damping</span><div class="a" style="left:1108px;top:890px;width:154px;height:16px;background:#1c1c1c;border-radius:3px;box-shadow:0 0 0 1px #3c3c3c;overflow:hidden;"><span class="t fy" style="position:absolute;left:2px;top:-1px;line-height:18px;color:#dcdcdc">0.000</span><div class="a" style="right:0;top:0;width:9px;height:16px;background:#1c1c1c"></div></div><svg class="a" style="left:1253.5px;top:891px;" width="8" height="14" viewBox="0 0 8 14"><path d="M4 0.5L7.5 6H0.5Z M0.5 8H7.5L4 13.5Z" fill="#888"/></svg><svg class="a" style="left:959.5px;top:913.5px;" width="8" height="8" viewBox="0 0 8 8"><path d="M0 0.5H8L4 8Z" fill="#8c8c8c"/></svg><span class="a t fy" style="left:969.5px;top:911px;line-height:18px;height:18px;">Body Type</span><div class="a" style="left:1108px;top:912px;width:154.5px;height:17.5px;background:#1d1d1d;border-radius:4px;box-shadow:0 0 0 1px #3a3a3a;"></div><div class="a" style="left:1109px;top:913px;width:138.5px;height:15.5px;background:#464646;border-radius:3px;"></div><span class="a t fy" style="left:1108px;width:140.5px;text-align:center;top:912.25px;line-height:18px;height:18px;">Static</span><svg class="a" style="left:1251px;top:917.75px;" width="9" height="6" viewBox="0 0 9 6"><path d="M0 0H9L4.5 6Z" fill="#d0d0d0"/></svg><span class="a t fy" style="left:969.5px;top:931.3px;line-height:18px;height:18px;">Mass</span><div class="a" style="left:1108px;top:933.5px;width:154px;height:16px;background:#1c1c1c;border-radius:3px;box-shadow:0 0 0 1px #3c3c3c;overflow:hidden;"><span class="t fy" style="position:absolute;left:2px;top:-1px;line-height:18px;color:#dcdcdc">1.000</span><div class="a" style="right:0;top:0;width:9px;height:16px;background:#1c1c1c"></div></div><svg class="a" style="left:1253.5px;top:934.5px;" width="8" height="14" viewBox="0 0 8 14"><path d="M4 0.5L7.5 6H0.5Z M0.5 8H7.5L4 13.5Z" fill="#888"/></svg><span class="a t fy" style="left:969.5px;top:952.3px;line-height:18px;height:18px;">X Rotation Locked</span><div class="a" style="left:1108px;top:954.8px;width:15px;height:14.5px;background:#1a1a1a;border-radius:3px;"></div><span class="a t fy" style="left:969.5px;top:971.3px;line-height:18px;height:18px;">Y Rotation Locked</span><div class="a" style="left:1108px;top:973.8px;width:15px;height:14.5px;background:#1a1a1a;border-radius:3px;"></div><span class="a t fy" style="left:969.5px;top:990.3px;line-height:18px;height:18px;">Z Rotation Locked</span><div class="a" style="left:1108px;top:992.8px;width:15px;height:14.5px;background:#1a1a1a;border-radius:3px;"></div><span class="a t fy" style="left:969.5px;top:1009.3px;line-height:18px;height:18px;">Translation Locked</span><div class="a" style="left:1108px;top:1011.8px;width:15px;height:14.5px;background:#1a1a1a;border-radius:3px;"></div><span class="a t fy" style="left:969.5px;top:1028.3px;line-height:18px;height:18px;">Ccd Enabled</span><div class="a" style="left:1108px;top:1030.8px;width:15px;height:14.5px;background:#1a1a1a;border-radius:3px;"></div><span class="a t fy" style="left:969.5px;top:1047.3px;line-height:18px;height:18px;">Can Sleep</span><div class="a" style="left:1108px;top:1050px;width:14.5px;height:14px;background:#4f78c2;border-radius:3px;"></div><svg class="a" style="left:1108px;top:1050px;" width="14.5" height="14" viewBox="0 0 14.5 14"><path d="M3.4 7.6L6 10.6L11 3.6" stroke="#e8e8e8" stroke-width="2" fill="none"/></svg></div><div class="a" style="left:1263.5px;top:104px;width:13px;height:954px;background:#2a2a2a;"></div><div class="a" style="left:1264px;top:105.5px;width:12px;height:12px;background:#454545;border-radius:2px;"></div><svg class="a" style="left:1266px;top:107.5px;" width="8" height="8" viewBox="0 0 8 8"><path d="M4 0L8 8H0Z" fill="#8a8a8a"/></svg><div class="a" style="left:1264px;top:119px;width:12px;height:854px;background:#4a4a4a;border-radius:6px;"></div><div class="a" style="left:1264px;top:1043.5px;width:12px;height:12px;background:#454545;border-radius:2px;"></div><svg class="a" style="left:1266px;top:1045.5px;" width="8" height="8" viewBox="0 0 8 8"><path d="M0 0H8L4 8Z" fill="#8a8a8a"/></svg><div class="a" style="left:2px;top:1066px;width:669px;height:331px;background:#2b2b2b;border-radius:5px 5px 0 0;"></div><div class="a" style="left:2px;top:1065.2px;width:669px;height:22.8px;background:#1f1f1f;border-radius:5px 5px 0 0;"></div><span class="a t fy" style="left:7px;top:1068.5px;line-height:18px;height:18px;">Asset Browser</span><svg class="a" style="left:652px;top:1070.5px;" width="14" height="14" viewBox="0 0 14 14"><path d="M1 1L13 13M13 1L1 13" stroke="#c8c8c8" stroke-width="1.1" fill="none"/></svg><svg class="a" style="left:629px;top:1071.5px;" width="12" height="12" viewBox="0 0 12 12"><rect x="0.6" y="0.6" width="10.8" height="10.8" stroke="#c8c8c8" stroke-width="1.2" fill="none"/></svg><div class="a" style="left:3px;top:1090.5px;width:163.5px;height:305px;background:#2f2f2f;border-radius:5px 5px 0 0;"></div><div class="a" style="left:3px;top:1090.5px;width:163.5px;height:22px;background:#1f1f1f;border-radius:5px 5px 0 0;"></div><span class="a t fy" style="left:8px;top:1093px;line-height:18px;height:18px;">Folders</span><svg class="a" style="left:6.5px;top:1119px;" width="8" height="8" viewBox="0 0 8 8"><path d="M0 0.5H8L4 8Z" fill="#8c8c8c"/></svg><svg class="a" style="left:20px;top:1118px;" width="16" height="13" viewBox="0 0 16 14"><path d="M0 2H6L8 4H16V13H0Z" fill="#ffcf55"/></svg><span class="a t fy" style="left:41.2px;top:1116.3px;line-height:18px;height:18px;">Assets</span><svg class="a" style="left:21.5px;top:1144.5px;" width="8" height="8" viewBox="0 0 8 8"><path d="M0.5 0V8L8 4Z" fill="#8c8c8c"/></svg><svg class="a" style="left:34.5px;top:1142px;" width="16" height="13" viewBox="0 0 16 14"><path d="M0 2H6L8 4H16V13H0Z" fill="#ffcf55"/></svg><span class="a t fy" style="left:56.3px;top:1140.3px;line-height:18px;height:18px;">data</span><div class="a" style="left:172px;top:1090.5px;width:497.5px;height:305px;background:#2f2f2f;border-radius:5px 5px 0 0;"></div><div class="a" style="left:172px;top:1090.5px;width:497.5px;height:22px;background:#1f1f1f;border-radius:5px 5px 0 0;"></div><span class="a t fy" style="left:177.2px;top:1093px;line-height:18px;height:18px;">Folder Content - ./</span><div class="a" style="left:174px;top:1115.2px;width:22px;height:22px;background:#245f2c;border-radius:3px;"></div><svg class="a" style="left:174px;top:1115.2px;" width="22" height="22" viewBox="0 0 22 22"><path d="M11 7.5V14.5M7.5 11H14.5" stroke="#3fa64a" stroke-width="1.2"/></svg><div class="a" style="left:199.7px;top:1115.2px;width:22px;height:22px;background:#4a4a4a;border-radius:3px;box-shadow:0 0 0 1px #262626;"></div><svg class="a" style="left:199.7px;top:1115.2px;" width="22" height="22" viewBox="0 0 22 22"><path d="M4.5 12A6.5 6.5 0 0 1 16 7.5M17.5 10A6.5 6.5 0 0 1 6 14.5" stroke="#b0b0b0" stroke-width="1.3" fill="none"/><path d="M16.8 4L16.6 8.6L12.6 7Z M5.2 18L5.4 13.4L9.4 15Z" fill="#b0b0b0"/></svg><div class="a" style="left:226px;top:1115.2px;width:441.5px;height:22px;background:#1c1c1c;border-radius:4px;box-shadow:0 0 0 1px #3a3a3a;"></div><svg class="a" style="left:228px;top:1119px;" width="15" height="15" viewBox="0 0 15 15"><circle cx="6" cy="6" r="3.8" stroke="#c0c0c0" stroke-width="1.4" fill="none"/><path d="M8.8 8.8L13 13" stroke="#c0c0c0" stroke-width="1.8"/></svg><svg class="a" style="left:654px;top:1121px;" width="10" height="10" viewBox="0 0 10 10"><path d="M1 1L9 9M9 1L1 9" stroke="#e0e0e0" stroke-width="2"/></svg><svg class="a" style="left:175px;top:1147.3px;" width="60" height="48" viewBox="0 0 60 48"><path d="M0 4C0 1.8 1.8 0 4 0H17L24 7H56C58.2 7 60 8.8 60 11V44C60 46.2 58.2 48 56 48H4C1.8 48 0 46.2 0 44Z" fill="#ffcf55"/><path d="M22 3L26 7H56C58.2 7 60 8.8 60 11V13H22Z" fill="#ffb42e"/><path d="M0 13H60V44C60 46.2 58.2 48 56 48H4C1.8 48 0 46.2 0 44Z" fill="#ffcf55"/></svg><span class="a t fy" style="left:165px;width:80px;text-align:center;top:1208.5px;line-height:14px;height:14px;letter-spacing:-0.3px;">data</span><div class="a" style="left:241px;top:1142.3px;width:60px;height:60px;background:#2c2c2c;border:3.5px solid #b9b9b9;box-sizing:border-box;"></div><span class="a t " style="left:241px;width:60px;text-align:center;top:1163.3px;line-height:18px;height:18px;font:bold 13px 'Liberation Sans',sans-serif;color:#c8c8c8;letter-spacing:-0.3px;transform:scaleX(.92);">SHADER</span><span class="a t fy" style="left:231px;width:80px;text-align:center;top:1208.5px;line-height:14px;height:14px;letter-spacing:-0.3px;">Standar</span><span class="a t fy" style="left:231px;width:80px;text-align:center;top:1221.1px;line-height:14px;height:14px;letter-spacing:-0.3px;">d</span><div class="a" style="left:307px;top:1142.3px;width:60px;height:60px;background:#2c2c2c;border:3.5px solid #b9b9b9;box-sizing:border-box;"></div><span class="a t " style="left:307px;width:60px;text-align:center;top:1163.3px;line-height:18px;height:18px;font:bold 13px 'Liberation Sans',sans-serif;color:#c8c8c8;letter-spacing:-0.3px;transform:scaleX(.92);">SHADER</span><span class="a t fy" style="left:297px;width:80px;text-align:center;top:1208.5px;line-height:14px;height:14px;letter-spacing:-0.3px;">Standar</span><span class="a t fy" style="left:297px;width:80px;text-align:center;top:1221.1px;line-height:14px;height:14px;letter-spacing:-0.3px;">d2D</span><div class="a" style="left:373px;top:1142.3px;width:60px;height:60px;background:#2c2c2c;border:3.5px solid #b9b9b9;box-sizing:border-box;"></div><span class="a t " style="left:373px;width:60px;text-align:center;top:1163.3px;line-height:18px;height:18px;font:bold 13px 'Liberation Sans',sans-serif;color:#c8c8c8;letter-spacing:-0.3px;transform:scaleX(.92);">SHADER</span><span class="a t fy" style="left:363px;width:80px;text-align:center;top:1208.5px;line-height:14px;height:14px;letter-spacing:-0.3px;">Standar</span><span class="a t fy" style="left:363px;width:80px;text-align:center;top:1221.1px;line-height:14px;height:14px;letter-spacing:-0.3px;">dParticle</span><span class="a t fy" style="left:363px;width:80px;text-align:center;top:1233.7px;line-height:14px;height:14px;letter-spacing:-0.3px;">System</span><div class="a" style="left:439px;top:1142.3px;width:60px;height:60px;background:#2c2c2c;border:3.5px solid #b9b9b9;box-sizing:border-box;"></div><span class="a t " style="left:439px;width:60px;text-align:center;top:1163.3px;line-height:18px;height:18px;font:bold 13px 'Liberation Sans',sans-serif;color:#c8c8c8;letter-spacing:-0.3px;transform:scaleX(.92);">SHADER</span><span class="a t fy" style="left:429px;width:80px;text-align:center;top:1208.5px;line-height:14px;height:14px;letter-spacing:-0.3px;">Standar</span><span class="a t fy" style="left:429px;width:80px;text-align:center;top:1221.1px;line-height:14px;height:14px;letter-spacing:-0.3px;">dSprite</span><div class="a" style="left:505px;top:1142.3px;width:60px;height:60px;background:#2c2c2c;border:3.5px solid #b9b9b9;box-sizing:border-box;"></div><span class="a t " style="left:505px;width:60px;text-align:center;top:1163.3px;line-height:18px;height:18px;font:bold 13px 'Liberation Sans',sans-serif;color:#c8c8c8;letter-spacing:-0.3px;transform:scaleX(.92);">SHADER</span><span class="a t fy" style="left:495px;width:80px;text-align:center;top:1208.5px;line-height:14px;height:14px;letter-spacing:-0.3px;">Standar</span><span class="a t fy" style="left:495px;width:80px;text-align:center;top:1221.1px;line-height:14px;height:14px;letter-spacing:-0.3px;">dTerrain</span><div class="a" style="left:571px;top:1142.3px;width:60px;height:60px;background:#2c2c2c;border:3.5px solid #b9b9b9;box-sizing:border-box;"></div><span class="a t " style="left:571px;width:60px;text-align:center;top:1163.3px;line-height:18px;height:18px;font:bold 13px 'Liberation Sans',sans-serif;color:#c8c8c8;letter-spacing:-0.3px;transform:scaleX(.92);">SHADER</span><span class="a t fy" style="left:561px;width:80px;text-align:center;top:1208.5px;line-height:14px;height:14px;letter-spacing:-0.3px;">Standar</span><span class="a t fy" style="left:561px;width:80px;text-align:center;top:1221.1px;line-height:14px;height:14px;letter-spacing:-0.3px;">dTile</span><div class="a" style="left:175px;top:1259.3px;width:60px;height:60px;background:#2c2c2c;border:3.5px solid #b9b9b9;box-sizing:border-box;"></div><span class="a t " style="left:175px;width:60px;text-align:center;top:1280.3px;line-height:18px;height:18px;font:bold 13px 'Liberation Sans',sans-serif;color:#c8c8c8;letter-spacing:-0.3px;transform:scaleX(.92);">SHADER</span><span class="a t fy" style="left:165px;width:80px;text-align:center;top:1325.3px;line-height:14px;height:14px;letter-spacing:-0.3px;">Standar</span><span class="a t fy" style="left:165px;width:80px;text-align:center;top:1337.9px;line-height:14px;height:14px;letter-spacing:-0.3px;">dTwoSid</span><span class="a t fy" style="left:165px;width:80px;text-align:center;top:1350.5px;line-height:14px;height:14px;letter-spacing:-0.3px;">es</span><div class="a" style="left:241px;top:1259.3px;width:60px;height:60px;background:#626262;"></div><span class="a t " style="left:239px;width:64px;text-align:center;top:1267.3px;line-height:15px;height:15px;font-size:15.5px;color:#c4c4c4;letter-spacing:-0.2px;">AaBbCc</span><span class="a t " style="left:239px;width:64px;text-align:center;top:1281.6px;line-height:15px;height:15px;font-size:15.5px;color:#c4c4c4;letter-spacing:-0.2px;">Dd1234</span><span class="a t " style="left:239px;width:64px;text-align:center;top:1295.9px;line-height:15px;height:15px;font-size:15.5px;color:#c4c4c4;letter-spacing:-0.2px;">567890</span><span class="a t fy" style="left:231px;width:80px;text-align:center;top:1325.3px;line-height:14px;height:14px;letter-spacing:-0.3px;"><span class="us">_</span><span class="us">_</span>BUILT</span><span class="a t fy" style="left:231px;width:80px;text-align:center;top:1337.9px;line-height:14px;height:14px;letter-spacing:-0.3px;"><span class="us">_</span>IN<span class="us">_</span>FON</span><span class="a t fy" style="left:231px;width:80px;text-align:center;top:1350.5px;line-height:14px;height:14px;letter-spacing:-0.3px;">T<span class="us">_</span><span class="us">_</span></span><div class="a" style="left:307px;top:1259.3px;width:60px;height:60px;background:linear-gradient(#2b5d9c 0%,#3d72ae 28%,#8fb6d6 46%,#c3d9ea 54%,#a9c8e2 68%,#6f9fce 100%);"></div><span class="a t fy" style="left:297px;width:80px;text-align:center;top:1325.3px;line-height:14px;height:14px;letter-spacing:-0.3px;"><span class="us">_</span><span class="us">_</span>BUILT</span><span class="a t fy" style="left:297px;width:80px;text-align:center;top:1337.9px;line-height:14px;height:14px;letter-spacing:-0.3px;"><span class="us">_</span>IN<span class="us">_</span>SKY</span><span class="a t fy" style="left:297px;width:80px;text-align:center;top:1350.5px;line-height:14px;height:14px;letter-spacing:-0.3px;">BOX<span class="us">_</span>BA</span><span class="a t fy" style="left:297px;width:80px;text-align:center;top:1363.1px;line-height:14px;height:14px;letter-spacing:-0.3px;">CK</span><div class="a" style="left:373px;top:1259.3px;width:60px;height:60px;background:radial-gradient(ellipse at 50% 60%, #5a8cba 0%, #6d9cc6 55%, #86afd4 100%);"></div><span class="a t fy" style="left:363px;width:80px;text-align:center;top:1325.3px;line-height:14px;height:14px;letter-spacing:-0.3px;"><span class="us">_</span><span class="us">_</span>BUILT</span><span class="a t fy" style="left:363px;width:80px;text-align:center;top:1337.9px;line-height:14px;height:14px;letter-spacing:-0.3px;"><span class="us">_</span>IN<span class="us">_</span>SKY</span><span class="a t fy" style="left:363px;width:80px;text-align:center;top:1350.5px;line-height:14px;height:14px;letter-spacing:-0.3px;">BOX<span class="us">_</span>BO</span><span class="a t fy" style="left:363px;width:80px;text-align:center;top:1363.1px;line-height:14px;height:14px;letter-spacing:-0.3px;">TTOM</span><div class="a" style="left:439px;top:1259.3px;width:60px;height:60px;background:linear-gradient(#2b5d9c 0%,#3d72ae 28%,#8fb6d6 46%,#c3d9ea 54%,#a9c8e2 68%,#6f9fce 100%);"></div><span class="a t fy" style="left:429px;width:80px;text-align:center;top:1325.3px;line-height:14px;height:14px;letter-spacing:-0.3px;"><span class="us">_</span><span class="us">_</span>BUILT</span><span class="a t fy" style="left:429px;width:80px;text-align:center;top:1337.9px;line-height:14px;height:14px;letter-spacing:-0.3px;"><span class="us">_</span>IN<span class="us">_</span>SKY</span><span class="a t fy" style="left:429px;width:80px;text-align:center;top:1350.5px;line-height:14px;height:14px;letter-spacing:-0.3px;">BOX<span class="us">_</span>FR</span><span class="a t fy" style="left:429px;width:80px;text-align:center;top:1363.1px;line-height:14px;height:14px;letter-spacing:-0.3px;">ONT</span><div class="a" style="left:505px;top:1259.3px;width:60px;height:60px;background:linear-gradient(#2b5d9c 0%,#3d72ae 28%,#8fb6d6 46%,#c3d9ea 54%,#a9c8e2 68%,#6f9fce 100%);"></div><span class="a t fy" style="left:495px;width:80px;text-align:center;top:1325.3px;line-height:14px;height:14px;letter-spacing:-0.3px;"><span class="us">_</span><span class="us">_</span>BUILT</span><span class="a t fy" style="left:495px;width:80px;text-align:center;top:1337.9px;line-height:14px;height:14px;letter-spacing:-0.3px;"><span class="us">_</span>IN<span class="us">_</span>SKY</span><span class="a t fy" style="left:495px;width:80px;text-align:center;top:1350.5px;line-height:14px;height:14px;letter-spacing:-0.3px;">BOX<span class="us">_</span>LE</span><span class="a t fy" style="left:495px;width:80px;text-align:center;top:1363.1px;line-height:14px;height:14px;letter-spacing:-0.3px;">FT</span><div class="a" style="left:571px;top:1259.3px;width:60px;height:60px;background:linear-gradient(#2b5d9c 0%,#3d72ae 28%,#8fb6d6 46%,#c3d9ea 54%,#a9c8e2 68%,#6f9fce 100%);"></div><span class="a t fy" style="left:561px;width:80px;text-align:center;top:1325.3px;line-height:14px;height:14px;letter-spacing:-0.3px;"><span class="us">_</span><span class="us">_</span>BUILT</span><span class="a t fy" style="left:561px;width:80px;text-align:center;top:1337.9px;line-height:14px;height:14px;letter-spacing:-0.3px;"><span class="us">_</span>IN<span class="us">_</span>SKY</span><span class="a t fy" style="left:561px;width:80px;text-align:center;top:1350.5px;line-height:14px;height:14px;letter-spacing:-0.3px;">BOX<span class="us">_</span>RIG</span><span class="a t fy" style="left:561px;width:80px;text-align:center;top:1363.1px;line-height:14px;height:14px;letter-spacing:-0.3px;">HT</span><div class="a" style="left:175px;top:1389.3px;width:60px;height:6px;background:#2b5d9c;"></div><div class="a" style="left:241px;top:1389.3px;width:60px;height:6px;background:#4a4a4a;"></div><div class="a" style="left:307px;top:1389.3px;width:60px;height:6px;background:#7a7a7a;"></div><div class="a" style="left:373px;top:1389.3px;width:60px;height:6px;background:#6e6e6e;"></div><div class="a" style="left:439px;top:1389.3px;width:60px;height:6px;background:#e4e4e4;"></div><div class="a" style="left:505px;top:1389.3px;width:60px;height:6px;background:#c8c8c8;"></div><div class="a" style="left:571px;top:1389.3px;width:60px;height:6px;background:#3c3c3c;"></div><div class="a" style="left:655px;top:1140px;width:13.5px;height:255px;background:#272727;"></div><div class="a" style="left:655.5px;top:1141px;width:12.5px;height:12px;background:#454545;border-radius:2px;"></div><svg class="a" style="left:657.7px;top:1143px;" width="8" height="8" viewBox="0 0 8 8"><path d="M4 0L8 8H0Z" fill="#8a8a8a"/></svg><div class="a" style="left:655.5px;top:1154.5px;width:12.5px;height:90px;background:#4a4a4a;border-radius:6px;"></div><div class="a" style="left:655.5px;top:1381.5px;width:12.5px;height:12px;background:#454545;border-radius:2px;"></div><svg class="a" style="left:657.7px;top:1383.5px;" width="8" height="8" viewBox="0 0 8 8"><path d="M0 0H8L4 8Z" fill="#8a8a8a"/></svg><div class="a" style="left:677px;top:1066px;width:164px;height:331px;background:#2f2f2f;border-radius:5px 5px 0 0;"></div><div class="a" style="left:677px;top:1066px;width:164px;height:22px;background:#1f1f1f;border-radius:5px 5px 0 0;"></div><span class="a t fy" style="left:682.2px;top:1068.5px;line-height:18px;height:18px;">Command Sta</span><svg class="a" style="left:822px;top:1070.5px;" width="14" height="14" viewBox="0 0 14 14"><path d="M1 1L13 13M13 1L1 13" stroke="#c8c8c8" stroke-width="1.1" fill="none"/></svg><svg class="a" style="left:799px;top:1071.5px;" width="12" height="12" viewBox="0 0 12 12"><rect x="0.6" y="0.6" width="10.8" height="10.8" stroke="#c8c8c8" stroke-width="1.2" fill="none"/></svg><div class="a" style="left:775px;top:1082.5px;width:12px;height:1.5px;background:#8a8a8a;"></div><div class="a" style="left:679.3px;top:1090.6px;width:22px;height:22.7px;background:#454545;border-radius:3px;box-shadow:0 0 0 1px #262626;"></div><div class="a" style="left:679.3px;top:1118.7px;width:22px;height:22.7px;background:#454545;border-radius:3px;box-shadow:0 0 0 1px #262626;"></div><div class="a" style="left:679.3px;top:1146.5px;width:22px;height:22.7px;background:#454545;border-radius:3px;box-shadow:0 0 0 1px #262626;"></div><svg class="a" style="left:679.3px;top:1090.6px;" width="22" height="22.7" viewBox="0 0 22 22.7"><path d="M20.5 4C11 3.5 6.5 8 6 16" stroke="#c4c4c4" stroke-width="2" fill="none"/><path d="M1.5 11L6 19.5L10.5 11Z" fill="#c4c4c4"/></svg><svg class="a" style="left:679.3px;top:1118.7px;" width="22" height="22.7" viewBox="0 0 22 22.7"><path d="M1.5 4C11 3.5 15.5 8 16 16" stroke="#c4c4c4" stroke-width="2" fill="none"/><path d="M11.5 11L16 19.5L20.5 11Z" fill="#c4c4c4"/></svg><svg class="a" style="left:679.3px;top:1146.5px;" width="22" height="22.7" viewBox="0 0 22 22.7"><path d="M4 7H18V8.8H4ZM8 4.5H14V6.5H8ZM5.5 10H16.5V17.5C16.5 18.5 15.8 19.3 14.8 19.3H7.2C6.2 19.3 5.5 18.5 5.5 17.5Z" fill="#c4c4c4"/><path d="M9 12V17M13 12V17" stroke="#454545" stroke-width="1.6"/></svg><div class="a" style="left:704.5px;top:1089.5px;width:135.5px;height:304.5px;background:#232323;box-shadow:0 0 0 1px #3c3c3c;"></div><span class="a t fy" style="left:707.3px;top:1089.5px;line-height:18px;height:18px;">Change Selection</span><span class="a t fy" style="left:707.3px;top:1107.3px;line-height:18px;height:18px;">Change Selection</span><div class="a" style="left:846.5px;top:1066px;width:213px;height:331px;background:#2f2f2f;border-radius:5px 5px 0 0;"></div><div class="a" style="left:846.5px;top:1065.2px;width:213px;height:22.8px;background:#1f1f1f;border-radius:5px 5px 0 0;"></div><span class="a t fy" style="left:851.5px;top:1068.5px;line-height:18px;height:18px;">Message Log</span><svg class="a" style="left:1040.5px;top:1070.5px;" width="14" height="14" viewBox="0 0 14 14"><path d="M1 1L13 13M13 1L1 13" stroke="#c8c8c8" stroke-width="1.1" fill="none"/></svg><svg class="a" style="left:1017.5px;top:1071.5px;" width="12" height="12" viewBox="0 0 12 12"><rect x="0.6" y="0.6" width="10.8" height="10.8" stroke="#c8c8c8" stroke-width="1.2" fill="none"/></svg><div class="a" style="left:849.3px;top:1090.6px;width:27.8px;height:21.5px;background:#454545;border-radius:3px;box-shadow:0 0 0 1px #262626;"></div><svg class="a" style="left:852px;top:1090.6px;" width="22" height="21.5" viewBox="0 0 22 21.5"><path d="M3 6H19V8H3ZM7.5 3.5H14.5V5.5H7.5ZM4.5 9.2H17.5V17C17.5 18.1 16.7 19 15.6 19H6.4C5.3 19 4.5 18.1 4.5 17Z" fill="#bdbdbd"/><path d="M8.6 11V17M13.4 11V17" stroke="#454545" stroke-width="1.7"/></svg><div class="a" style="left:881.5px;top:1090.6px;width:118px;height:21.5px;background:#1d1d1d;border-radius:4px;box-shadow:0 0 0 1px #3a3a3a;"></div><div class="a" style="left:882.5px;top:1091.6px;width:100px;height:19.5px;background:#464646;border-radius:3px;"></div><span class="a t fy" style="left:881.5px;width:102px;text-align:center;top:1092.85px;line-height:18px;height:18px;">Warnings+</span><svg class="a" style="left:986px;top:1098.35px;" width="9" height="6" viewBox="0 0 9 6"><path d="M0 0H9L4.5 6Z" fill="#d0d0d0"/></svg><div class="a" style="left:852.2px;top:1118px;width:188px;height:258.5px;overflow:hidden;"><div class="a" style="left:-852.2px;top:-1118px;"><div class="a" style="left:852.2px;top:1118.7px;width:188px;height:73.3px;background:#424242;"></div><span class="a t fy" style="left:854px;top:1121px;line-height:14px;height:14px;color:#e8c50f;white-space:pre;letter-spacing:-0.1px;">[1.14s] OpenGL Message</span><span class="a t fy" style="left:868px;top:1133.8px;line-height:14px;height:14px;color:#e8c50f;white-space:pre;letter-spacing:-0.1px;">Source: Calls to the OpenGL API</span><span class="a t fy" style="left:868px;top:1146.6px;line-height:14px;height:14px;color:#e8c50f;white-space:pre;letter-spacing:-0.1px;">Type: Code has triggered possible</span><span class="a t fy" style="left:868px;top:1159.4px;line-height:14px;height:14px;color:#e8c50f;white-space:pre;letter-spacing:-0.1px;">Id: 131218</span><span class="a t fy" style="left:868px;top:1172.2px;line-height:14px;height:14px;color:#e8c50f;white-space:pre;letter-spacing:-0.1px;">Message: Program/shader state</span><div class="a" style="left:852.2px;top:1194px;width:188px;height:73.3px;background:#2b2b2b;"></div><span class="a t fy" style="left:854px;top:1196.3px;line-height:14px;height:14px;color:#e8c50f;white-space:pre;letter-spacing:-0.1px;">[1.15s] OpenGL Message</span><span class="a t fy" style="left:868px;top:1209.1px;line-height:14px;height:14px;color:#e8c50f;white-space:pre;letter-spacing:-0.1px;">Source: Calls to the OpenGL API</span><span class="a t fy" style="left:868px;top:1221.9px;line-height:14px;height:14px;color:#e8c50f;white-space:pre;letter-spacing:-0.1px;">Type: Code has triggered possible</span><span class="a t fy" style="left:868px;top:1234.7px;line-height:14px;height:14px;color:#e8c50f;white-space:pre;letter-spacing:-0.1px;">Id: 131218</span><span class="a t fy" style="left:868px;top:1247.5px;line-height:14px;height:14px;color:#e8c50f;white-space:pre;letter-spacing:-0.1px;">Message: Program/shader state</span><div class="a" style="left:852.2px;top:1269px;width:188px;height:20.8px;background:#424242;"></div><span class="a t fy" style="left:854px;top:1271.3px;line-height:14px;height:14px;color:#e8c50f;white-space:pre;letter-spacing:-0.1px;">[1.15s] A resource of type 44cd</span><div class="a" style="left:852.2px;top:1292px;width:188px;height:20.8px;background:#2b2b2b;"></div><span class="a t fy" style="left:854px;top:1294.3px;line-height:14px;height:14px;color:#e8c50f;white-space:pre;letter-spacing:-0.1px;">[1.15s] A resource of type 44cd</span><div class="a" style="left:852.2px;top:1315px;width:188px;height:20.8px;background:#424242;"></div><span class="a t fy" style="left:854px;top:1317.3px;line-height:14px;height:14px;color:#e8c50f;white-space:pre;letter-spacing:-0.1px;">[1.15s] A resource of type 44cd</span><div class="a" style="left:852.2px;top:1338px;width:188px;height:20.8px;background:#2b2b2b;"></div><span class="a t fy" style="left:854px;top:1340.3px;line-height:14px;height:14px;color:#e8c50f;white-space:pre;letter-spacing:-0.1px;">[1.16s] A resource of type 44cd</span><div class="a" style="left:852.2px;top:1361px;width:188px;height:20.8px;background:#424242;"></div><span class="a t fy" style="left:854px;top:1363.3px;line-height:14px;height:14px;color:#e8c50f;white-space:pre;letter-spacing:-0.1px;">[1.16s] A resource of type 44cd</span></div></div><div class="a" style="left:1041.5px;top:1118px;width:13px;height:258px;background:#262626;"></div><div class="a" style="left:1042px;top:1119px;width:12.5px;height:12px;background:#454545;border-radius:2px;"></div><svg class="a" style="left:1044.2px;top:1121px;" width="8" height="8" viewBox="0 0 8 8"><path d="M4 0L8 8H0Z" fill="#8a8a8a"/></svg><div class="a" style="left:1042px;top:1132px;width:12.5px;height:21px;background:#4a4a4a;border-radius:6px;"></div><div class="a" style="left:1042px;top:1363px;width:12.5px;height:12px;background:#454545;border-radius:2px;"></div><svg class="a" style="left:1044.2px;top:1365px;" width="8" height="8" viewBox="0 0 8 8"><path d="M0 0H8L4 8Z" fill="#8a8a8a"/></svg><div class="a" style="left:852px;top:1378.5px;width:187px;height:13.5px;background:#262626;"></div><div class="a" style="left:852.5px;top:1379.5px;width:12px;height:12px;background:#454545;border-radius:2px;"></div><svg class="a" style="left:854.5px;top:1381.5px;" width="8" height="8" viewBox="0 0 8 8"><path d="M0 4L8 0V8Z" fill="#8a8a8a"/></svg><div class="a" style="left:866px;top:1379.5px;width:34px;height:12px;background:#4a4a4a;border-radius:6px;"></div><div class="a" style="left:1026px;top:1379.5px;width:12px;height:12px;background:#454545;border-radius:2px;"></div><svg class="a" style="left:1028px;top:1381.5px;" width="8" height="8" viewBox="0 0 8 8"><path d="M0 0L8 4L0 8Z" fill="#8a8a8a"/></svg><div class="a" style="left:1065px;top:1066px;width:213px;height:331px;background:#2f2f2f;border-radius:5px 5px 0 0;"></div><div class="a" style="left:1065px;top:1065.2px;width:213px;height:22.8px;background:#1f1f1f;border-radius:5px 5px 0 0;"></div><span class="a t fy" style="left:1070px;top:1068.5px;line-height:18px;height:18px;">Audio Context</span><svg class="a" style="left:1259px;top:1070.5px;" width="14" height="14" viewBox="0 0 14 14"><path d="M1 1L13 13M13 1L1 13" stroke="#c8c8c8" stroke-width="1.1" fill="none"/></svg><svg class="a" style="left:1236px;top:1071.5px;" width="12" height="12" viewBox="0 0 12 12"><rect x="0.6" y="0.6" width="10.8" height="10.8" stroke="#c8c8c8" stroke-width="1.2" fill="none"/></svg><div class="a" style="left:1212px;top:1082.5px;width:12px;height:1.5px;background:#8a8a8a;"></div><span class="a t fy" style="left:1067.3px;top:1092.3px;line-height:18px;height:18px;">DM</span><div class="a" style="left:1092px;top:1090.8px;width:128px;height:20.5px;background:#1d1d1d;border-radius:4px;box-shadow:0 0 0 1px #3a3a3a;"></div><div class="a" style="left:1093px;top:1091.8px;width:110px;height:18.5px;background:#464646;border-radius:3px;"></div><span class="a t fy" style="left:1092px;width:112px;text-align:center;top:1092.55px;line-height:18px;height:18px;">InverseDistance</span><svg class="a" style="left:1206.5px;top:1098.05px;" width="9" height="6" viewBox="0 0 9 6"><path d="M0 0H9L4.5 6Z" fill="#d0d0d0"/></svg><div class="a" style="left:1223px;top:1090px;width:55px;height:22px;overflow:hidden;"><span class="a t fy" style="left:0px;top:2.3px;line-height:18px;height:18px;">Renderer</span></div><div class="a" style="left:1066px;top:1114px;width:212px;height:257px;background:#272727;box-shadow:inset 0 0 0 1px #383838;"></div><div class="a" style="left:1069px;top:1115.7px;width:98px;height:252.5px;background:#3a3a3a;box-shadow:0 0 0 1px #2c2c2c;"></div><span class="a t fy" style="left:1070.3px;top:1115.5px;line-height:18px;height:18px;">Primary</span><div class="a" style="left:1069px;top:1141px;width:98px;height:1px;background:#2c2c2c;"></div><div class="a" style="left:1072px;top:1144.5px;width:91.5px;height:195.5px;background:#242424;box-shadow:0 0 0 1px #484848;"></div><span class="a t fy" style="left:1071.5px;width:92px;text-align:center;top:1143.5px;line-height:18px;height:18px;color:#545454;">No Effects</span><div class="a" style="left:1068px;top:1373px;width:98.3px;height:20.5px;background:#3c3c3c;border-radius:4px;box-shadow:0 0 0 1px #242424;"></div><span class="a t fy" style="left:1068px;width:98px;text-align:center;top:1374.8px;line-height:18px;height:18px;">Add Bus</span><div class="a" style="left:1170px;top:1373px;width:98px;height:20.5px;background:#343434;border-radius:4px;box-shadow:0 0 0 1px #2a2a2a;"></div><span class="a t fy" style="left:1170px;width:98px;text-align:center;top:1374.8px;line-height:18px;height:18px;color:#5e5e5e;">Remove Bus</span><div class="a" style="left:1279px;top:0px;width:2px;height:1403px;background:#323335;"></div><div class="a" style="left:1281px;top:0px;width:1279px;height:1403px;background:#3c3f41;"></div><div class="a" style="left:1293px;top:6px;width:16px;height:16px;background:#000;border:1.5px solid #f5a623;box-sizing:border-box;"></div><span class="a t " style="left:1295.3px;top:8px;line-height:8px;height:8px;font:bold 6.5px 'Liberation Sans',sans-serif;color:#fff;">RR</span><div class="a" style="left:1295.5px;top:18px;width:4.5px;height:1px;background:#fff;"></div><span class="a t ui" style="left:1326px;top:5px;line-height:18px;height:18px;"><u>F</u>ile</span><span class="a t ui" style="left:1357px;top:5px;line-height:18px;height:18px;"><u>E</u>dit</span><span class="a t ui" style="left:1390px;top:5px;line-height:18px;height:18px;"><u>V</u>iew</span><span class="a t ui" style="left:1427px;top:5px;line-height:18px;height:18px;"><u>N</u>avigate</span><span class="a t ui" style="left:1486px;top:5px;line-height:18px;height:18px;"><u>C</u>ode</span><span class="a t ui" style="left:1527px;top:5px;line-height:18px;height:18px;"><u>R</u>efactor</span><span class="a t ui" style="left:1584px;top:5px;line-height:18px;height:18px;"><u>B</u>uild</span><span class="a t ui" style="left:1623px;top:5px;line-height:18px;height:18px;"><u>R</u>un</span><span class="a t ui" style="left:1656px;top:5px;line-height:18px;height:18px;"><u>T</u>ools</span><span class="a t ui" style="left:1697px;top:5px;line-height:18px;height:18px;"><u>G</u>it</span><span class="a t ui" style="left:1724px;top:5px;line-height:18px;height:18px;"><u>W</u>indow</span><span class="a t ui" style="left:1781px;top:5px;line-height:18px;height:18px;"><u>H</u>elp</span><span class="a t ui" style="left:1834px;top:5px;line-height:18px;height:18px;color:#787878;letter-spacing:-0.25px;">FishFolly - game\...\lib.rs</span><div class="a" style="left:2436px;top:12px;width:10px;height:1px;background:#9a9a9a;"></div><div class="a" style="left:2483px;top:8px;width:10px;height:10px;border:1px solid #9a9a9a;box-sizing:border-box;"></div><svg class="a" style="left:2530px;top:8px;" width="10" height="10" viewBox="0 0 10 10"><path d="M0 0L10 10M10 0L0 10" stroke="#9a9a9a" stroke-width="1"/></svg><div class="a" style="left:1282px;top:27px;width:1278px;height:1px;background:#323232;"></div><span class="a t ui" style="left:1293px;top:34px;line-height:18px;height:18px;font-weight:bold;letter-spacing:-0.55px;">FishFolly</span><span class="a t ui" style="left:1353px;top:34px;line-height:18px;height:18px;">game</span><span class="a t ui" style="left:1397px;top:34px;line-height:18px;height:18px;">src</span><svg class="a" style="left:1343px;top:34px;" width="7" height="18" viewBox="0 0 7 18"><path d="M1 1L6 9L1 17" stroke="#5e6163" stroke-width="1" fill="none"/></svg><svg class="a" style="left:1388px;top:34px;" width="7" height="18" viewBox="0 0 7 18"><path d="M1 1L6 9L1 17" stroke="#5e6163" stroke-width="1" fill="none"/></svg><svg class="a" style="left:1414px;top:34px;" width="7" height="18" viewBox="0 0 7 18"><path d="M1 1L6 9L1 17" stroke="#5e6163" stroke-width="1" fill="none"/></svg><svg class="a" style="left:1470px;top:34px;" width="7" height="18" viewBox="0 0 7 18"><path d="M1 1L6 9L1 17" stroke="#5e6163" stroke-width="1" fill="none"/></svg><svg class="a" style="left:1588px;top:34px;" width="7" height="18" viewBox="0 0 7 18"><path d="M1 1L6 9L1 17" stroke="#5e6163" stroke-width="1" fill="none"/></svg><svg class="a" style="left:1423.5px;top:34.5px;" width="16" height="16" viewBox="0 0 16 16"><path d="M4 1H13V8H4Z" fill="#9b7fd1"/><path d="M4 1V5H7.5V1Z M4 5.5H8.5V1.8" fill="none" stroke="#3c3f41" stroke-width=".9"/><rect x="0" y="8.5" width="15.5" height="7" fill="#9c7a4b"/><text x="1.6" y="14.6" font-family="Liberation Sans,sans-serif" font-size="6.6" font-weight="bold" fill="#c9a56e">RS</text></svg><span class="a t ui" style="left:1442px;top:34px;line-height:18px;height:18px;">lib.rs</span><div class="a" style="left:1481px;top:36px;width:14px;height:14px;background:#9673c9;border-radius:3px;"></div><span class="a t " style="left:1481px;width:14px;text-align:center;top:37px;line-height:12px;height:12px;font:bold 9px 'Liberation Mono',monospace;color:#e6dcf5;">I</span><span class="a t ui" style="left:1499px;top:34px;line-height:18px;height:18px;">Plugin for Game</span><div class="a" style="left:1599px;top:36px;width:14px;height:14px;background:#c25a78;border-radius:3px;"></div><span class="a t " style="left:1599px;width:14px;text-align:center;top:36.5px;line-height:12px;height:12px;font:10px 'Liberation Sans',sans-serif;color:#f3d6de;">m</span><span class="a t ui" style="left:1617.5px;top:34px;line-height:18px;height:18px;">update()</span><svg class="a" style="left:1942px;top:35px;" width="16" height="16" viewBox="0 0 16 16"><circle cx="8" cy="5" r="3.3" fill="#afb1b3"/><path d="M1.5 14C1.5 10.5 4 8.8 8 8.8C12 8.8 14.5 10.5 14.5 14Z" fill="#afb1b3"/></svg><svg class="a" style="left:1960px;top:41px;" width="8" height="5" viewBox="0 0 8 5"><path d="M0 0H8L4 5Z" fill="#afb1b3"/></svg><div class="a" style="left:1973px;top:33px;width:1px;height:20px;background:#515456;"></div><svg class="a" style="left:1981px;top:35px;" width="17" height="17" viewBox="0 0 17 17"><path d="M1.5 6.5L6 2L10 3.5L8 5.5L15.5 13.5L13.5 15.5L6 7.5L4 9.5Z" fill="#499c54"/></svg><div class="a" style="left:2009.5px;top:31.5px;width:113px;height:21px;border:1px solid #5e6163;border-radius:3px;box-sizing:border-box;"></div><svg class="a" style="left:2017px;top:35px;" width="16" height="16" viewBox="0 0 16 16"><circle cx="8" cy="8" r="7.2" fill="none" stroke="#c78d4a" stroke-width="1.6"/><text x="4.4" y="11.6" font-family="Liberation Sans,sans-serif" font-size="9.5" font-weight="bold" fill="#c78d4a">R</text><circle cx="13.3" cy="13.3" r="2.4" fill="#2ad12a"/></svg><span class="a t ui" style="left:2038px;top:34px;line-height:18px;height:18px;">Editor | dev</span><svg class="a" style="left:2105px;top:41px;" width="8" height="5" viewBox="0 0 8 5"><path d="M0 0H8L4 5Z" fill="#afb1b3"/></svg><svg class="a" style="left:2133px;top:35px;" width="16" height="16" viewBox="0 0 16 16"><path d="M12.5 6A5.3 5.3 0 1 0 13 10.5" stroke="#499c54" stroke-width="2" fill="none"/><path d="M9 1.2L14.8 3.2L11 7.6Z" fill="#499c54"/><rect x="9" y="10.5" width="5" height="5" fill="#c8c8c8"/></svg><svg class="a" style="left:2159px;top:35px;" width="16" height="16" viewBox="0 0 16 16"><ellipse cx="8" cy="9" rx="4" ry="5" fill="#499c54"/><circle cx="8" cy="3.6" r="2.2" fill="#499c54"/><path d="M1.5 5.5L4.5 7.5M14.5 5.5L11.5 7.5M1 9.5H4M15 9.5H12M1.5 14L4.5 12M14.5 14L11.5 12" stroke="#499c54" stroke-width="1.3"/></svg><svg class="a" style="left:2184px;top:35px;" width="18" height="16" viewBox="0 0 18 16"><path d="M2 2H11V8C11 11.5 8.5 13.5 6.5 14.5C4.5 13.5 2 11.5 2 8Z" fill="#afb1b3"/><path d="M6.5 2V14.5C4.5 13.5 2 11.5 2 8V2Z" fill="#dfe1e3"/><path d="M9.5 7.5L17 11.8L9.5 16Z" fill="#499c54" stroke="#3c3f41" stroke-width=".8"/></svg><svg class="a" style="left:2211px;top:35px;" width="18" height="16" viewBox="0 0 18 16"><circle cx="7" cy="7.5" r="5.6" fill="none" stroke="#afb1b3" stroke-width="1.6"/><path d="M7 4V7.8L4.5 9.5" stroke="#afb1b3" stroke-width="1.4" fill="none"/><path d="M9.5 7.5L17 11.8L9.5 16Z" fill="#499c54" stroke="#3c3f41" stroke-width=".8"/></svg><svg class="a" style="left:2233.5px;top:41px;" width="8" height="5" viewBox="0 0 8 5"><path d="M0 0H8L4 5Z" fill="#afb1b3"/></svg><div class="a" style="left:2254.5px;top:37.5px;width:11px;height:11px;background:#db5860;"></div><div class="a" style="left:2276.5px;top:33px;width:1px;height:20px;background:#515456;"></div><span class="a t ui" style="left:2286px;top:34px;line-height:18px;height:18px;">Git:</span><svg class="a" style="left:2315px;top:35.5px;" width="15" height="15" viewBox="0 0 15 15"><path d="M13 2L3.5 11.5M3 4.5V12H10.5" stroke="#3592c4" stroke-width="2.2" fill="none"/></svg><svg class="a" style="left:2340px;top:35.5px;" width="16" height="15" viewBox="0 0 16 15"><path d="M1.5 8L6 12.5L14.5 2.5" stroke="#499c54" stroke-width="2.4" fill="none"/></svg><svg class="a" style="left:2366px;top:35.5px;" width="15" height="15" viewBox="0 0 15 15"><path d="M2 13L11.5 3.5M4.5 3H12V10.5" stroke="#499c54" stroke-width="2.2" fill="none"/></svg><svg class="a" style="left:2392px;top:35px;" width="16" height="16" viewBox="0 0 16 16"><circle cx="8" cy="8" r="6.3" fill="none" stroke="#afb1b3" stroke-width="1.6"/><path d="M8 4V8.3L10.8 10" stroke="#afb1b3" stroke-width="1.5" fill="none"/></svg><svg class="a" style="left:2419px;top:35px;" width="16" height="16" viewBox="0 0 16 16"><path d="M3 6H10A4 4 0 0 1 10 14H5.5" stroke="#afb1b3" stroke-width="1.8" fill="none"/><path d="M6.5 2L2 6L6.5 10" stroke="#afb1b3" stroke-width="1.8" fill="none"/></svg><div class="a" style="left:2442.5px;top:33px;width:1px;height:20px;background:#515456;"></div><svg class="a" style="left:2450px;top:34.5px;" width="18" height="17" viewBox="0 0 18 17"><path d="M13.5 13A6.3 6 0 1 1 15.3 8.5C15.3 11 12.8 11.6 11.8 10.2C11 9 11.6 6.2 9 6.2C7 6.2 6.3 7.8 6.6 9.2C7 10.8 8.6 11.2 9.8 10.4" stroke="#c8ccce" stroke-width="1.6" fill="none"/></svg><div class="a" style="left:2475.5px;top:33px;width:1px;height:20px;background:#515456;"></div><svg class="a" style="left:2483px;top:34.5px;" width="17" height="17" viewBox="0 0 17 17"><circle cx="7" cy="7" r="4.8" fill="none" stroke="#c8ccce" stroke-width="2"/><path d="M10.5 10.5L15.5 15.5" stroke="#c8ccce" stroke-width="2.4"/></svg><svg class="a" style="left:2510px;top:35px;" width="16" height="16" viewBox="0 0 16 16"><circle cx="8" cy="8" r="8" fill="#f5a623"/><path d="M8 12.5V4.5M4.5 8L8 4.2L11.5 8" stroke="#fff" stroke-width="1.8" fill="none"/></svg><svg class="a" style="left:2537px;top:35px;" width="16" height="16" viewBox="0 0 16 16"><path d="M1 1L15 8L1 15Z" fill="#21d789"/><path d="M1 1L15 8L8 8Z" fill="#fcf84a"/><path d="M1 1V15L6 8Z" fill="#087cfa"/><path d="M1 15L15 8L6 8Z" fill="#21d789"/></svg><div class="a" style="left:1282px;top:56px;width:1278px;height:1px;background:#323232;"></div><div class="a" style="left:1281px;top:57px;width:21.5px;height:1299px;background:#3c3f41;"></div><div class="a" style="left:1302.5px;top:57px;width:1px;height:1299px;background:#323232;"></div><div class="a" style="left:1281px;top:57px;width:21.5px;height:70.5px;background:#2d2f30;"></div><span class="a t ui vt" style="left:1286px;top:101px;transform:rotate(-90deg);line-height:14px;font-size:11px;color:#e8e8e8;">Project</span><svg class="a" style="left:1287px;top:107px;" width="12" height="10" viewBox="0 0 12 10"><path d="M0 0H5L6 1.5H12V10H0Z" fill="#c8ccce"/></svg><span class="a t ui vt" style="left:1286px;top:177px;transform:rotate(-90deg);line-height:14px;font-size:11px;">Commit</span><svg class="a" style="left:1286.5px;top:181px;" width="13" height="13" viewBox="0 0 13 13"><circle cx="6.5" cy="6.5" r="2.8" fill="none" stroke="#afb1b3" stroke-width="1.5"/><path d="M0 6.5H3.5M9.5 6.5H13" stroke="#afb1b3" stroke-width="1.5"/></svg><span class="a t ui vt" style="left:1286px;top:285px;transform:rotate(-90deg);line-height:14px;font-size:11px;">Pull Requests</span><svg class="a" style="left:1287px;top:289px;" width="12" height="12" viewBox="0 0 12 12"><path d="M2 1V11M2 5H7.5A2.5 2.5 0 0 1 10 7.5V11M5 2L2 5L5 8" stroke="#afb1b3" stroke-width="1.5" fill="none"/></svg><span class="a t ui vt" style="left:1286px;top:1241px;transform:rotate(-90deg);line-height:14px;font-size:11px;">Bookmarks</span><svg class="a" style="left:1288px;top:1246px;" width="10" height="12" viewBox="0 0 10 12"><path d="M0.5 0H9.5V12L5 8.5L0.5 12Z" fill="#afb1b3"/></svg><span class="a t ui vt" style="left:1286px;top:1328px;transform:rotate(-90deg);line-height:14px;font-size:11px;">Structure</span><svg class="a" style="left:1288px;top:1333px;" width="10" height="10" viewBox="0 0 10 10"><rect x="5" y="0" width="4.2" height="4.2" fill="#afb1b3"/><rect x="0" y="5.5" width="4.2" height="4.2" fill="#afb1b3"/><rect x="5" y="5.5" width="4.2" height="4.2" fill="#afb1b3"/></svg><div class="a" style="left:2537px;top:57px;width:23px;height:1299px;background:#3c3f41;"></div><div class="a" style="left:2536.5px;top:57px;width:1px;height:1299px;background:#323232;"></div><svg class="a" style="left:2540.5px;top:65px;" width="14" height="14" viewBox="0 0 14 14"><circle cx="7" cy="7" r="6.2" fill="none" stroke="#c78d4a" stroke-width="1.5"/><text x="3.7" y="10" font-family="Liberation Sans,sans-serif" font-size="8.5" font-weight="bold" fill="#c78d4a">R</text></svg><span class="a t ui vt" style="left:2555px;top:83px;transform:rotate(90deg);line-height:14px;font-size:11px;">Cargo</span><svg class="a" style="left:2540.5px;top:135px;" width="15" height="15" viewBox="0 0 15 15"><path d="M12 10A5.3 5 0 1 1 13 6.5C13 8.5 11 9 10.2 7.8C9.6 6.8 10 4.8 8 4.8C6.4 4.8 5.8 6 6 7.2" stroke="#afb1b3" stroke-width="1.3" fill="none"/><rect x="8" y="9" width="6" height="4.5" fill="#3c3f41" stroke="#afb1b3" stroke-width="1"/></svg><span class="a t ui vt" style="left:2555px;top:154px;transform:rotate(90deg);line-height:14px;font-size:11px;">AI Chat</span><svg class="a" style="left:2541.5px;top:210px;" width="12" height="14" viewBox="0 0 12 14"><ellipse cx="6" cy="2.5" rx="5.5" ry="2.2" fill="#afb1b3"/><path d="M0.5 4.5C0.5 7 11.5 7 11.5 4.5V6.5C11.5 9 0.5 9 0.5 6.5ZM0.5 8C0.5 10.5 11.5 10.5 11.5 8V10C11.5 12.5 0.5 12.5 0.5 10Z" fill="#afb1b3"/></svg><span class="a t ui vt" style="left:2555px;top:228px;transform:rotate(90deg);line-height:14px;font-size:11px;">Database</span><svg class="a" style="left:2541.5px;top:298px;" width="12" height="13" viewBox="0 0 12 13"><path d="M6 0.5C3 0.5 1.8 3 1.8 5.5V8L0.5 10H11.5L10.2 8V5.5C10.2 3 9 0.5 6 0.5Z" fill="#afb1b3"/><circle cx="6" cy="11.7" r="1.3" fill="#afb1b3"/></svg><span class="a t ui vt" style="left:2555px;top:315px;transform:rotate(90deg);line-height:14px;font-size:11px;">Notifications</span><svg class="a" style="left:2541.5px;top:1281px;" width="12" height="12" viewBox="0 0 12 12"><path d="M0.5 0.5H11.5V6C11.5 9.5 8 11 6 11.8C4 11 0.5 9.5 0.5 6Z" fill="#afb1b3"/><path d="M6 2V10C7.5 9.3 10 8.3 10 6V2Z" fill="#3c3f41"/></svg><span class="a t ui vt" style="left:2555px;top:1298px;transform:rotate(90deg);line-height:14px;font-size:11px;">Coverage</span><div class="a" style="left:1304px;top:57px;width:239.5px;height:994px;background:#3c3f41;"></div><div class="a" style="left:1543px;top:57px;width:1px;height:1019px;background:#323232;"></div><svg class="a" style="left:1315.5px;top:65px;" width="15" height="13" viewBox="0 0 15 13"><rect x="0.5" y="0.5" width="14" height="12" fill="#3592c4" stroke="#afb1b3" stroke-width="1"/><rect x="0.5" y="0.5" width="14" height="2.6" fill="#afb1b3"/></svg><span class="a t ui" style="left:1335px;top:62.5px;line-height:18px;height:18px;">Pr...</span><svg class="a" style="left:1380px;top:64.5px;" width="14" height="14" viewBox="0 0 14 14"><path d="M6 1.5V11.5M1 6.5H11" stroke="#d0d2d4" stroke-width="1.8"/><path d="M9.5 11H14L11.7 13.6Z" fill="#d0d2d4"/></svg><div class="a" style="left:1402.5px;top:63px;width:1px;height:17px;background:#515456;"></div><svg class="a" style="left:1411.5px;top:64px;" width="15" height="15" viewBox="0 0 15 15"><circle cx="7.5" cy="7.5" r="5.8" fill="none" stroke="#d0d2d4" stroke-width="1.5"/><path d="M7.5 0.5V5.5M7.5 9.5V14.5M0.5 7.5H5.5M9.5 7.5H14.5" stroke="#d0d2d4" stroke-width="1.5"/></svg><svg class="a" style="left:1438.5px;top:64px;" width="13" height="15" viewBox="0 0 13 15"><path d="M0.5 1H12.5M0.5 14H12.5" stroke="#d0d2d4" stroke-width="1.5"/><path d="M6.5 2.5L3 6.5H10ZM6.5 12.5L3 8.5H10Z" fill="#d0d2d4"/></svg><svg class="a" style="left:1464.5px;top:64px;" width="13" height="15" viewBox="0 0 13 15"><path d="M0.5 7.5H12.5" stroke="#d0d2d4" stroke-width="1.5"/><path d="M6.5 5.8L3 1.8H10ZM6.5 9.2L3 13.2H10Z" fill="#d0d2d4"/></svg><div class="a" style="left:1487.5px;top:63px;width:1px;height:17px;background:#515456;"></div><svg class="a" style="left:1497px;top:64.5px;" width="14" height="14" viewBox="0 0 14 14"><path d="M13.74 6.12L13.74 7.88L11.73 8.27L11.24 9.44L12.39 11.14L11.14 12.39L9.44 11.24L8.27 11.73L7.88 13.74L6.12 13.74L5.73 11.73L4.56 11.24L2.86 12.39L1.61 11.14L2.76 9.44L2.27 8.27L0.26 7.88L0.26 6.12L2.27 5.73L2.76 4.56L1.61 2.86L2.86 1.61L4.56 2.76L5.73 2.27L6.12 0.26L7.88 0.26L8.27 2.27L9.44 2.76L11.14 1.61L12.39 2.86L11.24 4.56L11.73 5.73Z" fill="#d0d2d4"/><circle cx="7" cy="7" r="2.3" fill="#3c3f41"/></svg><div class="a" style="left:1523.5px;top:70.7px;width:13px;height:1.7px;background:#d0d2d4;"></div><div class="a" style="left:1304px;top:85px;width:239.5px;height:977px;overflow:hidden;"><div class="a" style="left:-1304px;top:-85px;"><svg class="a" style="left:1309px;top:91.7px;" width="10" height="8" viewBox="0 0 10 8"><path d="M1 2L5 6.5L9 2" stroke="#afb1b3" stroke-width="1.3" fill="none"/></svg><svg class="a" style="left:1328px;top:89.2px;" width="15" height="13" viewBox="0 0 15 13"><path d="M0.5 1.5H6L7.5 3.5H14.5V12H0.5Z" fill="#90a4ae"/></svg><span class="a t ui" style="left:1346px;top:86.7px;line-height:18px;height:18px;letter-spacing:0.05px;"><span style="text-decoration:underline wavy #bc3f3c;text-decoration-thickness:1px;text-underline-offset:1px;text-decoration-skip-ink:none;">FishFolly</span> <b style="letter-spacing:-0.6px">[fall_rustaceans]</b><span style="color:#787878"> I:\RustEngine\FishFolly</span></span><svg class="a" style="left:1330px;top:110.7px;" width="8" height="10" viewBox="0 0 8 10"><path d="M2 1L6.5 5L2 9" stroke="#afb1b3" stroke-width="1.3" fill="none"/></svg><svg class="a" style="left:1346px;top:109.2px;" width="15" height="13" viewBox="0 0 15 13"><path d="M0.5 1.5H6L7.5 3.5H14.5V12H0.5Z" fill="#90a4ae"/></svg><span class="a t ui" style="left:1364px;top:106.7px;line-height:18px;height:18px;color:#a9a93b;letter-spacing:0.05px;">build</span><svg class="a" style="left:1330px;top:130.7px;" width="8" height="10" viewBox="0 0 8 10"><path d="M2 1L6.5 5L2 9" stroke="#afb1b3" stroke-width="1.3" fill="none"/></svg><svg class="a" style="left:1346px;top:129.2px;" width="15" height="13" viewBox="0 0 15 13"><path d="M0.5 1.5H6L7.5 3.5H14.5V12H0.5Z" fill="#90a4ae"/></svg><span class="a t ui" style="left:1364px;top:126.7px;line-height:18px;height:18px;letter-spacing:0.05px;">data</span><svg class="a" style="left:1330px;top:150.7px;" width="8" height="10" viewBox="0 0 8 10"><path d="M2 1L6.5 5L2 9" stroke="#afb1b3" stroke-width="1.3" fill="none"/></svg><svg class="a" style="left:1346px;top:149.2px;" width="15" height="13" viewBox="0 0 15 13"><path d="M0.5 1.5H6L7.5 3.5H14.5V12H0.5Z" fill="#90a4ae"/></svg><span class="a t ui" style="left:1364px;top:146.7px;line-height:18px;height:18px;letter-spacing:0.05px;">editor</span><svg class="a" style="left:1327px;top:171.7px;" width="10" height="8" viewBox="0 0 10 8"><path d="M1 2L5 6.5L9 2" stroke="#afb1b3" stroke-width="1.3" fill="none"/></svg><svg class="a" style="left:1346px;top:169.2px;" width="15" height="13" viewBox="0 0 15 13"><path d="M0.5 1.5H6L7.5 3.5H14.5V12H0.5Z" fill="#90a4ae"/></svg><span class="a t ui" style="left:1364px;top:166.7px;line-height:18px;height:18px;letter-spacing:0.05px;">executor</span><svg class="a" style="left:1345px;top:191.7px;" width="10" height="8" viewBox="0 0 10 8"><path d="M1 2L5 6.5L9 2" stroke="#afb1b3" stroke-width="1.3" fill="none"/></svg><svg class="a" style="left:1364px;top:189.2px;" width="15" height="13" viewBox="0 0 15 13"><path d="M0.5 1.5H6L7.5 3.5H14.5V12H0.5Z" fill="#3a8fb7"/></svg><span class="a t ui" style="left:1382px;top:186.7px;line-height:18px;height:18px;letter-spacing:0.05px;">src</span><svg class="a" style="left:1382px;top:207.7px;" width="16" height="16" viewBox="0 0 16 16"><path d="M4 1H13V8H4Z" fill="#9aa7b0"/><path d="M4 1V5H7.5V1Z M4 5.5H8.5V1.8" fill="none" stroke="#3c3f41" stroke-width=".9"/><rect x="0" y="8.5" width="15.5" height="7" fill="#9c7a4b"/><text x="1.6" y="14.6" font-family="Liberation Sans,sans-serif" font-size="6.6" font-weight="bold" fill="#c9a56e">RS</text></svg><span class="a t ui" style="left:1400px;top:206.7px;line-height:18px;height:18px;color:#6fa0d0;letter-spacing:0.05px;">main.rs</span><svg class="a" style="left:1363px;top:227.7px;" width="16" height="16" viewBox="0 0 16 16"><rect x="3" y="0.5" width="5.5" height="5" fill="#d89a3c"/><rect x="9.5" y="0.5" width="5.5" height="5" fill="#d89a3c"/><rect x="9.5" y="6.5" width="5.5" height="5" fill="#d89a3c"/><circle cx="5" cy="11" r="4.6" fill="#9aa7b0"/><text x="2.2" y="13" font-family="Liberation Sans,sans-serif" font-size="5.5" fill="#3c3f41">TL</text><rect x="10" y="13.5" width="5" height="1.6" fill="#9aa7b0"/></svg><span class="a t ui" style="left:1382px;top:226.7px;line-height:18px;height:18px;letter-spacing:0.05px;">Cargo.toml</span><svg class="a" style="left:1330px;top:250.7px;" width="8" height="10" viewBox="0 0 8 10"><path d="M2 1L6.5 5L2 9" stroke="#afb1b3" stroke-width="1.3" fill="none"/></svg><svg class="a" style="left:1346px;top:249.2px;" width="15" height="13" viewBox="0 0 15 13"><path d="M0.5 1.5H6L7.5 3.5H14.5V12H0.5Z" fill="#90a4ae"/></svg><span class="a t ui" style="left:1364px;top:246.7px;line-height:18px;height:18px;text-decoration:underline wavy #bc3f3c;text-decoration-thickness:1px;text-underline-offset:1px;text-decoration-skip-ink:none;letter-spacing:0.05px;">executor-android</span><svg class="a" style="left:1330px;top:270.7px;" width="8" height="10" viewBox="0 0 8 10"><path d="M2 1L6.5 5L2 9" stroke="#afb1b3" stroke-width="1.3" fill="none"/></svg><svg class="a" style="left:1346px;top:269.2px;" width="15" height="13" viewBox="0 0 15 13"><path d="M0.5 1.5H6L7.5 3.5H14.5V12H0.5Z" fill="#90a4ae"/></svg><span class="a t ui" style="left:1364px;top:266.7px;line-height:18px;height:18px;letter-spacing:0.05px;">executor-wasm</span><svg class="a" style="left:1327px;top:291.7px;" width="10" height="8" viewBox="0 0 10 8"><path d="M1 2L5 6.5L9 2" stroke="#afb1b3" stroke-width="1.3" fill="none"/></svg><svg class="a" style="left:1346px;top:289.2px;" width="15" height="13" viewBox="0 0 15 13"><path d="M0.5 1.5H6L7.5 3.5H14.5V12H0.5Z" fill="#90a4ae"/></svg><span class="a t ui" style="left:1364px;top:286.7px;line-height:18px;height:18px;letter-spacing:0.05px;">game <b style="letter-spacing:-0.5px">[fish_fall]</b></span><svg class="a" style="left:1345px;top:311.7px;" width="10" height="8" viewBox="0 0 10 8"><path d="M1 2L5 6.5L9 2" stroke="#afb1b3" stroke-width="1.3" fill="none"/></svg><svg class="a" style="left:1364px;top:309.2px;" width="15" height="13" viewBox="0 0 15 13"><path d="M0.5 1.5H6L7.5 3.5H14.5V12H0.5Z" fill="#3a8fb7"/></svg><span class="a t ui" style="left:1382px;top:306.7px;line-height:18px;height:18px;letter-spacing:0.05px;">src</span><div class="a" style="left:1304px;top:325.7px;width:239.5px;height:20px;background:#0d293e;"></div><svg class="a" style="left:1382px;top:327.7px;" width="16" height="16" viewBox="0 0 16 16"><path d="M4 1H13V8H4Z" fill="#9b7fd1"/><path d="M4 1V5H7.5V1Z M4 5.5H8.5V1.8" fill="none" stroke="#3c3f41" stroke-width=".9"/><rect x="0" y="8.5" width="15.5" height="7" fill="#9c7a4b"/><text x="1.6" y="14.6" font-family="Liberation Sans,sans-serif" font-size="6.6" font-weight="bold" fill="#c9a56e">RS</text></svg><span class="a t ui" style="left:1400px;top:326.7px;line-height:18px;height:18px;letter-spacing:0.05px;">lib.rs</span><svg class="a" style="left:1382px;top:347.7px;" width="16" height="16" viewBox="0 0 16 16"><path d="M4 1H13V8H4Z" fill="#9aa7b0"/><path d="M4 1V5H7.5V1Z M4 5.5H8.5V1.8" fill="none" stroke="#3c3f41" stroke-width=".9"/><rect x="0" y="8.5" width="15.5" height="7" fill="#9c7a4b"/><text x="1.6" y="14.6" font-family="Liberation Sans,sans-serif" font-size="6.6" font-weight="bold" fill="#c9a56e">RS</text></svg><span class="a t ui" style="left:1400px;top:346.7px;line-height:18px;height:18px;letter-spacing:0.05px;">actor.rs</span><svg class="a" style="left:1382px;top:367.7px;" width="16" height="16" viewBox="0 0 16 16"><path d="M4 1H13V8H4Z" fill="#9aa7b0"/><path d="M4 1V5H7.5V1Z M4 5.5H8.5V1.8" fill="none" stroke="#3c3f41" stroke-width=".9"/><rect x="0" y="8.5" width="15.5" height="7" fill="#9c7a4b"/><text x="1.6" y="14.6" font-family="Liberation Sans,sans-serif" font-size="6.6" font-weight="bold" fill="#c9a56e">RS</text></svg><span class="a t ui" style="left:1400px;top:366.7px;line-height:18px;height:18px;letter-spacing:0.05px;">bot.rs</span><svg class="a" style="left:1382px;top:387.7px;" width="16" height="16" viewBox="0 0 16 16"><path d="M4 1H13V8H4Z" fill="#9aa7b0"/><path d="M4 1V5H7.5V1Z M4 5.5H8.5V1.8" fill="none" stroke="#3c3f41" stroke-width=".9"/><rect x="0" y="8.5" width="15.5" height="7" fill="#9c7a4b"/><text x="1.6" y="14.6" font-family="Liberation Sans,sans-serif" font-size="6.6" font-weight="bold" fill="#c9a56e">RS</text></svg><span class="a t ui" style="left:1400px;top:386.7px;line-height:18px;height:18px;letter-spacing:0.05px;">camera.rs</span><svg class="a" style="left:1382px;top:407.7px;" width="16" height="16" viewBox="0 0 16 16"><path d="M4 1H13V8H4Z" fill="#9aa7b0"/><path d="M4 1V5H7.5V1Z M4 5.5H8.5V1.8" fill="none" stroke="#3c3f41" stroke-width=".9"/><rect x="0" y="8.5" width="15.5" height="7" fill="#9c7a4b"/><text x="1.6" y="14.6" font-family="Liberation Sans,sans-serif" font-size="6.6" font-weight="bold" fill="#c9a56e">RS</text></svg><span class="a t ui" style="left:1400px;top:406.7px;line-height:18px;height:18px;letter-spacing:0.05px;">cannon.rs</span><svg class="a" style="left:1382px;top:427.7px;" width="16" height="16" viewBox="0 0 16 16"><path d="M4 1H13V8H4Z" fill="#9aa7b0"/><path d="M4 1V5H7.5V1Z M4 5.5H8.5V1.8" fill="none" stroke="#3c3f41" stroke-width=".9"/><rect x="0" y="8.5" width="15.5" height="7" fill="#9c7a4b"/><text x="1.6" y="14.6" font-family="Liberation Sans,sans-serif" font-size="6.6" font-weight="bold" fill="#c9a56e">RS</text></svg><span class="a t ui" style="left:1400px;top:426.7px;line-height:18px;height:18px;letter-spacing:0.05px;">client.rs</span><svg class="a" style="left:1382px;top:447.7px;" width="16" height="16" viewBox="0 0 16 16"><path d="M4 1H13V8H4Z" fill="#9aa7b0"/><path d="M4 1V5H7.5V1Z M4 5.5H8.5V1.8" fill="none" stroke="#3c3f41" stroke-width=".9"/><rect x="0" y="8.5" width="15.5" height="7" fill="#9c7a4b"/><text x="1.6" y="14.6" font-family="Liberation Sans,sans-serif" font-size="6.6" font-weight="bold" fill="#c9a56e">RS</text></svg><span class="a t ui" style="left:1400px;top:446.7px;line-height:18px;height:18px;letter-spacing:0.05px;">jumper.rs</span><svg class="a" style="left:1382px;top:467.7px;" width="16" height="16" viewBox="0 0 16 16"><path d="M4 1H13V8H4Z" fill="#9aa7b0"/><path d="M4 1V5H7.5V1Z M4 5.5H8.5V1.8" fill="none" stroke="#3c3f41" stroke-width=".9"/><rect x="0" y="8.5" width="15.5" height="7" fill="#9c7a4b"/><text x="1.6" y="14.6" font-family="Liberation Sans,sans-serif" font-size="6.6" font-weight="bold" fill="#c9a56e">RS</text></svg><span class="a t ui" style="left:1400px;top:466.7px;line-height:18px;height:18px;letter-spacing:0.05px;">level.rs</span><svg class="a" style="left:1382px;top:487.7px;" width="16" height="16" viewBox="0 0 16 16"><path d="M4 1H13V8H4Z" fill="#9aa7b0"/><path d="M4 1V5H7.5V1Z M4 5.5H8.5V1.8" fill="none" stroke="#3c3f41" stroke-width=".9"/><rect x="0" y="8.5" width="15.5" height="7" fill="#9c7a4b"/><text x="1.6" y="14.6" font-family="Liberation Sans,sans-serif" font-size="6.6" font-weight="bold" fill="#c9a56e">RS</text></svg><span class="a t ui" style="left:1400px;top:486.7px;line-height:18px;height:18px;letter-spacing:0.05px;">menu.rs</span><svg class="a" style="left:1382px;top:507.7px;" width="16" height="16" viewBox="0 0 16 16"><path d="M4 1H13V8H4Z" fill="#9aa7b0"/><path d="M4 1V5H7.5V1Z M4 5.5H8.5V1.8" fill="none" stroke="#3c3f41" stroke-width=".9"/><rect x="0" y="8.5" width="15.5" height="7" fill="#9c7a4b"/><text x="1.6" y="14.6" font-family="Liberation Sans,sans-serif" font-size="6.6" font-weight="bold" fill="#c9a56e">RS</text></svg><span class="a t ui" style="left:1400px;top:506.7px;line-height:18px;height:18px;letter-spacing:0.05px;">net.rs</span><svg class="a" style="left:1382px;top:527.7px;" width="16" height="16" viewBox="0 0 16 16"><path d="M4 1H13V8H4Z" fill="#9aa7b0"/><path d="M4 1V5H7.5V1Z M4 5.5H8.5V1.8" fill="none" stroke="#3c3f41" stroke-width=".9"/><rect x="0" y="8.5" width="15.5" height="7" fill="#9c7a4b"/><text x="1.6" y="14.6" font-family="Liberation Sans,sans-serif" font-size="6.6" font-weight="bold" fill="#c9a56e">RS</text></svg><span class="a t ui" style="left:1400px;top:526.7px;line-height:18px;height:18px;letter-spacing:0.05px;">player.rs</span><svg class="a" style="left:1382px;top:547.7px;" width="16" height="16" viewBox="0 0 16 16"><path d="M4 1H13V8H4Z" fill="#9aa7b0"/><path d="M4 1V5H7.5V1Z M4 5.5H8.5V1.8" fill="none" stroke="#3c3f41" stroke-width=".9"/><rect x="0" y="8.5" width="15.5" height="7" fill="#9c7a4b"/><text x="1.6" y="14.6" font-family="Liberation Sans,sans-serif" font-size="6.6" font-weight="bold" fill="#c9a56e">RS</text></svg><span class="a t ui" style="left:1400px;top:546.7px;line-height:18px;height:18px;letter-spacing:0.05px;">respawn.rs</span><svg class="a" style="left:1382px;top:567.7px;" width="16" height="16" viewBox="0 0 16 16"><path d="M4 1H13V8H4Z" fill="#9aa7b0"/><path d="M4 1V5H7.5V1Z M4 5.5H8.5V1.8" fill="none" stroke="#3c3f41" stroke-width=".9"/><rect x="0" y="8.5" width="15.5" height="7" fill="#9c7a4b"/><text x="1.6" y="14.6" font-family="Liberation Sans,sans-serif" font-size="6.6" font-weight="bold" fill="#c9a56e">RS</text></svg><span class="a t ui" style="left:1400px;top:566.7px;line-height:18px;height:18px;letter-spacing:0.05px;">server.rs</span><svg class="a" style="left:1382px;top:587.7px;" width="16" height="16" viewBox="0 0 16 16"><path d="M4 1H13V8H4Z" fill="#9aa7b0"/><path d="M4 1V5H7.5V1Z M4 5.5H8.5V1.8" fill="none" stroke="#3c3f41" stroke-width=".9"/><rect x="0" y="8.5" width="15.5" height="7" fill="#9c7a4b"/><text x="1.6" y="14.6" font-family="Liberation Sans,sans-serif" font-size="6.6" font-weight="bold" fill="#c9a56e">RS</text></svg><span class="a t ui" style="left:1400px;top:586.7px;line-height:18px;height:18px;letter-spacing:0.05px;">settings.rs</span><svg class="a" style="left:1382px;top:607.7px;" width="16" height="16" viewBox="0 0 16 16"><path d="M4 1H13V8H4Z" fill="#9aa7b0"/><path d="M4 1V5H7.5V1Z M4 5.5H8.5V1.8" fill="none" stroke="#3c3f41" stroke-width=".9"/><rect x="0" y="8.5" width="15.5" height="7" fill="#9c7a4b"/><text x="1.6" y="14.6" font-family="Liberation Sans,sans-serif" font-size="6.6" font-weight="bold" fill="#c9a56e">RS</text></svg><span class="a t ui" style="left:1400px;top:606.7px;line-height:18px;height:18px;letter-spacing:0.05px;">start.rs</span><svg class="a" style="left:1382px;top:627.7px;" width="16" height="16" viewBox="0 0 16 16"><path d="M4 1H13V8H4Z" fill="#9aa7b0"/><path d="M4 1V5H7.5V1Z M4 5.5H8.5V1.8" fill="none" stroke="#3c3f41" stroke-width=".9"/><rect x="0" y="8.5" width="15.5" height="7" fill="#9c7a4b"/><text x="1.6" y="14.6" font-family="Liberation Sans,sans-serif" font-size="6.6" font-weight="bold" fill="#c9a56e">RS</text></svg><span class="a t ui" style="left:1400px;top:626.7px;line-height:18px;height:18px;letter-spacing:0.05px;">target.rs</span><svg class="a" style="left:1382px;top:647.7px;" width="16" height="16" viewBox="0 0 16 16"><path d="M4 1H13V8H4Z" fill="#9aa7b0"/><path d="M4 1V5H7.5V1Z M4 5.5H8.5V1.8" fill="none" stroke="#3c3f41" stroke-width=".9"/><rect x="0" y="8.5" width="15.5" height="7" fill="#9c7a4b"/><text x="1.6" y="14.6" font-family="Liberation Sans,sans-serif" font-size="6.6" font-weight="bold" fill="#c9a56e">RS</text></svg><span class="a t ui" style="left:1400px;top:646.7px;line-height:18px;height:18px;letter-spacing:0.05px;">trigger.rs</span><svg class="a" style="left:1382px;top:667.7px;" width="16" height="16" viewBox="0 0 16 16"><path d="M4 1H13V8H4Z" fill="#9aa7b0"/><path d="M4 1V5H7.5V1Z M4 5.5H8.5V1.8" fill="none" stroke="#3c3f41" stroke-width=".9"/><rect x="0" y="8.5" width="15.5" height="7" fill="#9c7a4b"/><text x="1.6" y="14.6" font-family="Liberation Sans,sans-serif" font-size="6.6" font-weight="bold" fill="#c9a56e">RS</text></svg><span class="a t ui" style="left:1400px;top:666.7px;line-height:18px;height:18px;letter-spacing:0.05px;">utils.rs</span><svg class="a" style="left:1363px;top:687.7px;" width="16" height="16" viewBox="0 0 16 16"><rect x="3" y="0.5" width="5.5" height="5" fill="#d89a3c"/><rect x="9.5" y="0.5" width="5.5" height="5" fill="#d89a3c"/><rect x="9.5" y="6.5" width="5.5" height="5" fill="#d89a3c"/><circle cx="5" cy="11" r="4.6" fill="#9aa7b0"/><text x="2.2" y="13" font-family="Liberation Sans,sans-serif" font-size="5.5" fill="#3c3f41">TL</text><rect x="10" y="13.5" width="5" height="1.6" fill="#9aa7b0"/></svg><span class="a t ui" style="left:1382px;top:686.7px;line-height:18px;height:18px;letter-spacing:0.05px;">Cargo.toml</span><svg class="a" style="left:1330px;top:710.7px;" width="8" height="10" viewBox="0 0 8 10"><path d="M2 1L6.5 5L2 9" stroke="#afb1b3" stroke-width="1.3" fill="none"/></svg><svg class="a" style="left:1346px;top:709.2px;" width="15" height="13" viewBox="0 0 15 13"><path d="M0.5 1.5H6L7.5 3.5H14.5V12H0.5Z" fill="#90a4ae"/></svg><span class="a t ui" style="left:1364px;top:706.7px;line-height:18px;height:18px;letter-spacing:0.05px;">game-dylib <b style="letter-spacing:-0.5px">[game_dylib]</b></span><svg class="a" style="left:1330px;top:730.7px;" width="8" height="10" viewBox="0 0 8 10"><path d="M2 1L6.5 5L2 9" stroke="#afb1b3" stroke-width="1.3" fill="none"/></svg><svg class="a" style="left:1346px;top:729.2px;" width="15" height="13" viewBox="0 0 15 13"><path d="M0.5 1.5H6L7.5 3.5H14.5V12H0.5Z" fill="#90a4ae"/></svg><span class="a t ui" style="left:1364px;top:726.7px;line-height:18px;height:18px;letter-spacing:0.05px;">pics</span><div class="a" style="left:1304px;top:745.7px;width:239.5px;height:20px;background:#4a4538;"></div><svg class="a" style="left:1330px;top:750.7px;" width="8" height="10" viewBox="0 0 8 10"><path d="M2 1L6.5 5L2 9" stroke="#afb1b3" stroke-width="1.3" fill="none"/></svg><svg class="a" style="left:1346px;top:749.2px;" width="15" height="13" viewBox="0 0 15 13"><path d="M0.5 1.5H6L7.5 3.5H14.5V12H0.5Z" fill="#d0672a"/></svg><span class="a t ui" style="left:1364px;top:746.7px;line-height:18px;height:18px;color:#a9a93b;letter-spacing:0.05px;">target</span><svg class="a" style="left:1345px;top:767.7px;" width="16" height="16" viewBox="0 0 16 16"><path d="M3 1.5H9.5L13 5V14.5H3Z" fill="#9aa7b0"/><circle cx="11.5" cy="12" r="3.6" fill="#3c3f41"/><circle cx="11.5" cy="12" r="2.7" fill="none" stroke="#9aa7b0" stroke-width="1"/><path d="M9.7 13.8L13.3 10.2" stroke="#9aa7b0" stroke-width="1"/></svg><span class="a t ui" style="left:1364px;top:766.7px;line-height:18px;height:18px;letter-spacing:0.05px;">.gitignore</span><svg class="a" style="left:1345px;top:787.7px;" width="16" height="16" viewBox="0 0 16 16"><rect x="3" y="0.5" width="5.5" height="5" fill="#d89a3c"/><rect x="9.5" y="0.5" width="5.5" height="5" fill="#d89a3c"/><rect x="9.5" y="6.5" width="5.5" height="5" fill="#d89a3c"/><rect x="1" y="9.5" width="7" height="6" fill="#c8ccce"/><path d="M2.5 9.5V8A2 2 0 0 1 6.5 8V9.5" stroke="#c8ccce" stroke-width="1.2" fill="none"/><rect x="10" y="13.5" width="5" height="1.6" fill="#9aa7b0"/></svg><span class="a t ui" style="left:1364px;top:786.7px;line-height:18px;height:18px;color:#a9a93b;letter-spacing:0.05px;">Cargo.lock</span><svg class="a" style="left:1345px;top:807.7px;" width="16" height="16" viewBox="0 0 16 16"><rect x="3" y="0.5" width="5.5" height="5" fill="#d89a3c"/><rect x="9.5" y="0.5" width="5.5" height="5" fill="#d89a3c"/><rect x="9.5" y="6.5" width="5.5" height="5" fill="#d89a3c"/><circle cx="5" cy="11" r="4.6" fill="#9aa7b0"/><text x="2.2" y="13" font-family="Liberation Sans,sans-serif" font-size="5.5" fill="#3c3f41">TL</text><rect x="10" y="13.5" width="5" height="1.6" fill="#9aa7b0"/></svg><span class="a t ui" style="left:1364px;top:806.7px;line-height:18px;height:18px;letter-spacing:0.05px;">Cargo.toml</span><svg class="a" style="left:1345px;top:827.7px;" width="16" height="16" viewBox="0 0 16 16"><path d="M3 1.5H9.5L13 5V14.5H3Z" fill="#9aa7b0"/><path d="M9 1.5V5.5H13" fill="#3c3f41" opacity=".55"/><path d="M5 7.5H11M5 9.7H11M5 11.9H9.5" stroke="#3c3f41" stroke-width="1"/></svg><span class="a t ui" style="left:1364px;top:826.7px;line-height:18px;height:18px;color:#a9a93b;letter-spacing:0.05px;">fyrox.log</span><svg class="a" style="left:1345px;top:847.7px;" width="16" height="16" viewBox="0 0 16 16"><path d="M3 1.5H9.5L13 5V14.5H3Z" fill="#9aa7b0"/><path d="M9 1.5V5.5H13" fill="#3c3f41" opacity=".55"/><path d="M5 7.5H11M5 9.7H11M5 11.9H9.5" stroke="#3c3f41" stroke-width="1"/></svg><span class="a t ui" style="left:1364px;top:846.7px;line-height:18px;height:18px;letter-spacing:0.05px;">game_settings.ron</span><svg class="a" style="left:1345px;top:867.7px;" width="16" height="16" viewBox="0 0 16 16"><path d="M3 1.5H9.5L13 5V14.5H3Z" fill="#9aa7b0"/><path d="M9 1.5V5.5H13" fill="#3c3f41" opacity=".55"/><path d="M5 7.5H11M5 9.7H11M5 11.9H9.5" stroke="#3c3f41" stroke-width="1"/></svg><span class="a t ui" style="left:1364px;top:866.7px;line-height:18px;height:18px;letter-spacing:0.05px;">LICENSE</span><svg class="a" style="left:1345px;top:887.7px;" width="16" height="16" viewBox="0 0 16 16"><path d="M4 0.5H10L13 3.5V8H4Z" fill="#9aa7b0"/><rect x="0" y="8.5" width="15.5" height="7" fill="#3592c4"/><text x="1.2" y="14.5" font-family="Liberation Sans,sans-serif" font-size="6.4" font-weight="bold" fill="#bfe3f5">MD</text></svg><span class="a t ui" style="left:1364px;top:886.7px;line-height:18px;height:18px;letter-spacing:0.05px;">README.md</span><svg class="a" style="left:1345px;top:907.7px;" width="16" height="16" viewBox="0 0 16 16"><path d="M3 1.5H9.5L13 5V14.5H3Z" fill="#9aa7b0"/><path d="M9 1.5V5.5H13" fill="#3c3f41" opacity=".55"/><path d="M5 7.5H11M5 9.7H11M5 11.9H9.5" stroke="#3c3f41" stroke-width="1"/></svg><span class="a t ui" style="left:1364px;top:906.7px;line-height:18px;height:18px;color:#a9a93b;letter-spacing:0.05px;">settings.ron</span><svg class="a" style="left:1310px;top:930.7px;" width="8" height="10" viewBox="0 0 8 10"><path d="M2 1L6.5 5L2 9" stroke="#afb1b3" stroke-width="1.3" fill="none"/></svg><svg class="a" style="left:1328px;top:929.7px;" width="13" height="12" viewBox="0 0 13 12"><path d="M1 1V11M4 1V11" stroke="#9aa7b0" stroke-width="1.6"/><path d="M7 3V11" stroke="#62b543" stroke-width="1.6"/><path d="M10 1V11" stroke="#9aa7b0" stroke-width="1.6"/><path d="M12.5 4V11" stroke="#40b6e0" stroke-width="1.4"/></svg><span class="a t ui" style="left:1346px;top:926.7px;line-height:18px;height:18px;letter-spacing:0.05px;">External Libraries</span><svg class="a" style="left:1310px;top:950.7px;" width="8" height="10" viewBox="0 0 8 10"><path d="M2 1L6.5 5L2 9" stroke="#afb1b3" stroke-width="1.3" fill="none"/></svg><svg class="a" style="left:1327px;top:948.7px;" width="15" height="15" viewBox="0 0 15 15"><path d="M0.5 0.5H9V9.5H0.5Z" fill="#9aa7b0"/><path d="M2 3L4.5 5L2 7" stroke="#3c3f41" stroke-width="1" fill="none"/><circle cx="10" cy="10" r="4.6" fill="#40b6e0"/><path d="M10 7.5V10.3L11.8 11.3" stroke="#3c3f41" stroke-width="1" fill="none"/></svg><span class="a t ui" style="left:1346px;top:946.7px;line-height:18px;height:18px;letter-spacing:0.05px;">Scratches and Consoles</span></div></div><div class="a" style="left:1304px;top:1064px;width:184px;height:8px;background:#595b5d;"></div><div class="a" style="left:1544px;top:57px;width:993px;height:28px;background:#3c3f41;"></div><div class="a" style="left:2357px;top:57px;width:125px;height:28px;background:#4e5254;"></div><div class="a" style="left:2357px;top:82px;width:125px;height:3px;background:#747a80;"></div><span class="a t ui" style="left:1546px;top:62.5px;line-height:18px;height:18px;">nl</span><svg class="a" style="left:1562px;top:67.5px;" width="8" height="8" viewBox="0 0 8 8"><path d="M0.5 0.5L7.5 7.5M7.5 0.5L0.5 7.5" stroke="#6e7073" stroke-width="1"/></svg><svg class="a" style="left:1585px;top:63.5px;" width="16" height="16" viewBox="0 0 16 16"><rect x="3" y="0.5" width="5.5" height="5" fill="#d89a3c"/><rect x="9.5" y="0.5" width="5.5" height="5" fill="#d89a3c"/><rect x="9.5" y="6.5" width="5.5" height="5" fill="#d89a3c"/><circle cx="5" cy="11" r="4.6" fill="#9aa7b0"/><text x="2.2" y="13" font-family="Liberation Sans,sans-serif" font-size="5.5" fill="#3c3f41">TL</text><rect x="10" y="13.5" width="5" height="1.6" fill="#9aa7b0"/></svg><span class="a t ui" style="left:1606.3px;top:62.5px;line-height:18px;height:18px;color:#bbbbbb;">game\Cargo.toml</span><svg class="a" style="left:1708px;top:67.5px;" width="8" height="8" viewBox="0 0 8 8"><path d="M0.5 0.5L7.5 7.5M7.5 0.5L0.5 7.5" stroke="#6e7073" stroke-width="1"/></svg><svg class="a" style="left:1731px;top:63.5px;" width="16" height="16" viewBox="0 0 16 16"><rect x="3" y="0.5" width="5.5" height="5" fill="#d89a3c"/><rect x="9.5" y="0.5" width="5.5" height="5" fill="#d89a3c"/><rect x="9.5" y="6.5" width="5.5" height="5" fill="#d89a3c"/><circle cx="5" cy="11" r="4.6" fill="#9aa7b0"/><text x="2.2" y="13" font-family="Liberation Sans,sans-serif" font-size="5.5" fill="#3c3f41">TL</text><rect x="10" y="13.5" width="5" height="1.6" fill="#9aa7b0"/></svg><span class="a t ui" style="left:1752px;top:62.5px;line-height:18px;height:18px;color:#bbbbbb;">executor\Cargo.toml</span><svg class="a" style="left:1870px;top:67.5px;" width="8" height="8" viewBox="0 0 8 8"><path d="M0.5 0.5L7.5 7.5M7.5 0.5L0.5 7.5" stroke="#6e7073" stroke-width="1"/></svg><svg class="a" style="left:1894px;top:63.5px;" width="16" height="16" viewBox="0 0 16 16"><path d="M4 1H13V8H4Z" fill="#9aa7b0"/><path d="M4 1V5H7.5V1Z M4 5.5H8.5V1.8" fill="none" stroke="#3c3f41" stroke-width=".9"/><rect x="0" y="8.5" width="15.5" height="7" fill="#9c7a4b"/><text x="1.6" y="14.6" font-family="Liberation Sans,sans-serif" font-size="6.6" font-weight="bold" fill="#c9a56e">RS</text></svg><span class="a t ui" style="left:1914.5px;top:62.5px;line-height:18px;height:18px;color:#bbbbbb;">actor.rs</span><svg class="a" style="left:1960px;top:67.5px;" width="8" height="8" viewBox="0 0 8 8"><path d="M0.5 0.5L7.5 7.5M7.5 0.5L0.5 7.5" stroke="#6e7073" stroke-width="1"/></svg><svg class="a" style="left:1984px;top:63.5px;" width="16" height="16" viewBox="0 0 16 16"><path d="M4 1H13V8H4Z" fill="#9aa7b0"/><path d="M4 1V5H7.5V1Z M4 5.5H8.5V1.8" fill="none" stroke="#3c3f41" stroke-width=".9"/><rect x="0" y="8.5" width="15.5" height="7" fill="#9c7a4b"/><text x="1.6" y="14.6" font-family="Liberation Sans,sans-serif" font-size="6.6" font-weight="bold" fill="#c9a56e">RS</text></svg><span class="a t ui" style="left:2004px;top:62.5px;line-height:18px;height:18px;color:#bbbbbb;">respawn.rs</span><svg class="a" style="left:2067px;top:67.5px;" width="8" height="8" viewBox="0 0 8 8"><path d="M0.5 0.5L7.5 7.5M7.5 0.5L0.5 7.5" stroke="#6e7073" stroke-width="1"/></svg><svg class="a" style="left:2091px;top:63.5px;" width="16" height="16" viewBox="0 0 16 16"><path d="M4 1H13V8H4Z" fill="#9aa7b0"/><path d="M4 1V5H7.5V1Z M4 5.5H8.5V1.8" fill="none" stroke="#3c3f41" stroke-width=".9"/><rect x="0" y="8.5" width="15.5" height="7" fill="#9c7a4b"/><text x="1.6" y="14.6" font-family="Liberation Sans,sans-serif" font-size="6.6" font-weight="bold" fill="#c9a56e">RS</text></svg><span class="a t ui" style="left:2111px;top:62.5px;line-height:18px;height:18px;color:#bbbbbb;">menu.rs</span><svg class="a" style="left:2161px;top:67.5px;" width="8" height="8" viewBox="0 0 8 8"><path d="M0.5 0.5L7.5 7.5M7.5 0.5L0.5 7.5" stroke="#6e7073" stroke-width="1"/></svg><svg class="a" style="left:2185px;top:63.5px;" width="16" height="16" viewBox="0 0 16 16"><path d="M4 1H13V8H4Z" fill="#9aa7b0"/><path d="M4 1V5H7.5V1Z M4 5.5H8.5V1.8" fill="none" stroke="#3c3f41" stroke-width=".9"/><rect x="0" y="8.5" width="15.5" height="7" fill="#9c7a4b"/><text x="1.6" y="14.6" font-family="Liberation Sans,sans-serif" font-size="6.6" font-weight="bold" fill="#c9a56e">RS</text></svg><span class="a t ui" style="left:2205px;top:62.5px;line-height:18px;height:18px;color:#bbbbbb;">server.rs</span><svg class="a" style="left:2255px;top:67.5px;" width="8" height="8" viewBox="0 0 8 8"><path d="M0.5 0.5L7.5 7.5M7.5 0.5L0.5 7.5" stroke="#6e7073" stroke-width="1"/></svg><svg class="a" style="left:2279px;top:63.5px;" width="16" height="16" viewBox="0 0 16 16"><path d="M4 1H13V8H4Z" fill="#9aa7b0"/><path d="M4 1V5H7.5V1Z M4 5.5H8.5V1.8" fill="none" stroke="#3c3f41" stroke-width=".9"/><rect x="0" y="8.5" width="15.5" height="7" fill="#9c7a4b"/><text x="1.6" y="14.6" font-family="Liberation Sans,sans-serif" font-size="6.6" font-weight="bold" fill="#c9a56e">RS</text></svg><span class="a t ui" style="left:2299px;top:62.5px;line-height:18px;height:18px;color:#bbbbbb;">level.rs</span><svg class="a" style="left:2342px;top:67.5px;" width="8" height="8" viewBox="0 0 8 8"><path d="M0.5 0.5L7.5 7.5M7.5 0.5L0.5 7.5" stroke="#6e7073" stroke-width="1"/></svg><svg class="a" style="left:2366px;top:63.5px;" width="16" height="16" viewBox="0 0 16 16"><path d="M4 1H13V8H4Z" fill="#9b7fd1"/><path d="M4 1V5H7.5V1Z M4 5.5H8.5V1.8" fill="none" stroke="#3c3f41" stroke-width=".9"/><rect x="0" y="8.5" width="15.5" height="7" fill="#9c7a4b"/><text x="1.6" y="14.6" font-family="Liberation Sans,sans-serif" font-size="6.6" font-weight="bold" fill="#c9a56e">RS</text></svg><span class="a t ui" style="left:2386px;top:62.5px;line-height:18px;height:18px;color:#d0d0d0;">game\...\lib.rs</span><svg class="a" style="left:2467px;top:67.5px;" width="8" height="8" viewBox="0 0 8 8"><path d="M0.5 0.5L7.5 7.5M7.5 0.5L0.5 7.5" stroke="#6e7073" stroke-width="1"/></svg><svg class="a" style="left:2492.5px;top:68px;" width="11" height="8" viewBox="0 0 11 8"><path d="M1 1.5L5.5 6L10 1.5" stroke="#c8ccce" stroke-width="1.6" fill="none"/></svg><div class="a" style="left:2522.5px;top:65.5px;width:2.6px;height:2.6px;background:#c8ccce;border-radius:2px;"></div><div class="a" style="left:2522.5px;top:70.5px;width:2.6px;height:2.6px;background:#c8ccce;border-radius:2px;"></div><div class="a" style="left:2522.5px;top:75.5px;width:2.6px;height:2.6px;background:#c8ccce;border-radius:2px;"></div><div class="a" style="left:1544px;top:84px;width:993px;height:1px;background:#323232;"></div><div class="a" style="left:1544px;top:85px;width:993px;height:966px;background:#2b2b2b;"></div><div class="a" style="left:1544px;top:85px;width:66px;height:966px;background:#313335;"></div><div class="a" style="left:1610px;top:85px;width:1px;height:966px;background:#2f2f2f;"></div><div class="a" style="left:2413.5px;top:85px;width:1px;height:966px;background:#3d3d3d;"></div><div class="a" style="left:1544px;top:155px;width:3px;height:18px;background:#374752;"></div><div class="a" style="left:1544px;top:745px;width:3px;height:18px;background:#4a4538;"></div><div class="a" style="left:1544px;top:85px;width:993px;height:966px;overflow:hidden;"><div class="a" style="left:-1544px;top:-85px;"><span class="a t ln" style="left:1530.5px;width:40px;text-align:right;top:80.3px;line-height:18px;height:18px;">163</span><span class="a t ln" style="left:1530.5px;width:40px;text-align:right;top:98.3px;line-height:18px;height:18px;">164</span><span class="a code" style="left:1613.5px;top:97.8px;line-height:18px;height:18px;">        <span class="k">if</span> <span class="k">let</span> <span class="e">Some</span>(<span class="u">scene</span><span class="h" style="width:89px">: &amp;mut Scene</span>) = <span class="h" style="width:46.7px">(&amp;mut *</span><span class="u">ctx</span>.<span class="p">scenes</span><span class="h" style="width:11.7px">)</span>.<span class="f">try_get_mut</span>(<span class="s">self</span>.<span class="p">level</span>.<span class="p">scene</span>) {</span><span class="a t ln" style="left:1530.5px;width:40px;text-align:right;top:116.3px;line-height:18px;height:18px;">165</span><span class="a code" style="left:1613.5px;top:115.8px;line-height:18px;height:18px;">            <span class="h" style="width:43.7px">(&amp;mut</span><span class="u">scene</span>.<span class="p">drawing_context</span><span class="h" style="width:12.5px">)</span>.<span class="f">clear_lines</span>()<span class="k">;</span></span><span class="a t ln" style="left:1530.5px;width:40px;text-align:right;top:134.3px;line-height:18px;height:18px;">166</span><span class="a t ln" style="left:1530.5px;width:40px;text-align:right;top:152.3px;line-height:18px;height:18px;">167</span><span class="a code" style="left:1613.5px;top:151.8px;line-height:18px;height:18px;">            <span class="k">if</span> <span class="s">self</span>.<span class="p">debug_settings</span>.<span class="p">show_physics</span> {</span><span class="a t ln" style="left:1530.5px;width:40px;text-align:right;top:170.3px;line-height:18px;height:18px;">168</span><span class="a code" style="left:1613.5px;top:169.8px;line-height:18px;height:18px;">                <span class="u">scene</span>.<span class="p">graph</span>.<span class="p">physics</span>.<span class="f">draw</span>(&<span class="k">mut</span> <span class="u">scene</span>.<span class="p">drawing_context</span>)<span class="k">;</span></span><span class="a t ln" style="left:1530.5px;width:40px;text-align:right;top:188.3px;line-height:18px;height:18px;">169</span><span class="a code" style="left:1613.5px;top:187.8px;line-height:18px;height:18px;">            }</span><span class="a t ln" style="left:1530.5px;width:40px;text-align:right;top:206.3px;line-height:18px;height:18px;">170</span><span class="a code" style="left:1613.5px;top:205.8px;line-height:18px;height:18px;">        }</span><span class="a t ln" style="left:1530.5px;width:40px;text-align:right;top:224.3px;line-height:18px;height:18px;">171</span><span class="a t ln" style="left:1530.5px;width:40px;text-align:right;top:242.3px;line-height:18px;height:18px;">172</span><span class="a code" style="left:1613.5px;top:241.8px;line-height:18px;height:18px;">        <span class="k">if</span> <span class="k">let</span> <span class="e">Some</span>(<span class="u">menu</span><span class="h" style="width:87px">: &amp;mut Menu</span>) = <span class="h" style="width:43.7px">(&amp;mut</span><span class="s">self</span>.<span class="p">menu</span><span class="h" style="width:12.2px">)</span>.<span class="f">as_mut</span>() {</span><span class="a t ln" style="left:1530.5px;width:40px;text-align:right;top:260.3px;line-height:18px;height:18px;">173</span><span class="a code" style="left:1613.5px;top:259.8px;line-height:18px;height:18px;">            <span class="u">menu</span>.<span class="f">update</span>(<span class="u">ctx</span><span class="k">,</span> &<span class="s">self</span>.<span class="p">server</span><span class="k">,</span> &<span class="s">self</span>.<span class="p">client</span><span class="k">,</span> &<span class="k">mut</span> <span class="s">self</span>.<span class="p">level</span>)<span class="k">;</span></span><span class="a t ln" style="left:1530.5px;width:40px;text-align:right;top:278.3px;line-height:18px;height:18px;">174</span><span class="a code" style="left:1613.5px;top:277.8px;line-height:18px;height:18px;">        }</span><span class="a t ln" style="left:1530.5px;width:40px;text-align:right;top:296.3px;line-height:18px;height:18px;">175</span><span class="a code" style="left:1613.5px;top:295.8px;line-height:18px;height:18px;">    }</span><span class="a t ln" style="left:1530.5px;width:40px;text-align:right;top:314.3px;line-height:18px;height:18px;">176</span><span class="a t ln" style="left:1530.5px;width:40px;text-align:right;top:332.3px;line-height:18px;height:18px;">177</span><span class="a code" style="left:1613.5px;top:331.8px;line-height:18px;height:18px;">    <span class="k">fn</span> <span class="fd">on_os_event</span>(&<span class="k">mut</span> <span class="s">self</span><span class="k">,</span> event: &<span class="ty">Event</span><()><span class="k">,</span> ctx: <span class="tn">PluginContext</span>) {</span><span class="a t ln" style="left:1530.5px;width:40px;text-align:right;top:350.3px;line-height:18px;height:18px;">178</span><span class="a code" style="left:1613.5px;top:349.8px;line-height:18px;height:18px;">        <span class="k">if</span> <span class="k">let</span> <span class="ty">Event</span>::<span class="e">WindowEvent</span> {</span><span class="a t ln" style="left:1530.5px;width:40px;text-align:right;top:368.3px;line-height:18px;height:18px;">179</span><span class="a code" style="left:1613.5px;top:367.8px;line-height:18px;height:18px;">            <span class="p">event</span>: <span class="ty">WindowEvent</span>::<span class="e">KeyboardInput</span> { event<span class="h" style="width:80px">: &amp;KeyEvent</span><span class="k">,</span> .. }<span class="k">,</span></span><span class="a t ln" style="left:1530.5px;width:40px;text-align:right;top:386.3px;line-height:18px;height:18px;">180</span><span class="a code" style="left:1613.5px;top:385.8px;line-height:18px;height:18px;">            ..</span><span class="a t ln" style="left:1530.5px;width:40px;text-align:right;top:404.3px;line-height:18px;height:18px;">181</span><span class="a code" style="left:1613.5px;top:403.8px;line-height:18px;height:18px;">        } = event</span><span class="a t ln" style="left:1530.5px;width:40px;text-align:right;top:422.3px;line-height:18px;height:18px;">182</span><span class="a code" style="left:1613.5px;top:421.8px;line-height:18px;height:18px;">        {</span><span class="a t ln" style="left:1530.5px;width:40px;text-align:right;top:440.3px;line-height:18px;height:18px;">183</span><span class="a code" style="left:1613.5px;top:439.8px;line-height:18px;height:18px;">            <span class="k">if</span> <span class="k">let</span> <span class="ty">PhysicalKey</span>::<span class="e">Code</span>(key_code<span class="h" style="width:68px">: KeyCode</span>) = event.<span class="p">physical_key</span> {</span><span class="a t ln" style="left:1530.5px;width:40px;text-align:right;top:458.3px;line-height:18px;height:18px;">184</span><span class="a code" style="left:1613.5px;top:457.8px;line-height:18px;height:18px;">                <span class="k">if</span> event.<span class="p">state</span> <span class="k">==</span> <span class="ty">ElementState</span>::<span class="e">Pressed</span> {</span><span class="a t ln" style="left:1530.5px;width:40px;text-align:right;top:476.3px;line-height:18px;height:18px;">185</span><span class="a code" style="left:1613.5px;top:475.8px;line-height:18px;height:18px;">                    <span class="k">match</span> key_code {</span><span class="a t ln" style="left:1530.5px;width:40px;text-align:right;top:494.3px;line-height:18px;height:18px;">186</span><span class="a code" style="left:1613.5px;top:493.8px;line-height:18px;height:18px;">                        <span class="ty">KeyCode</span>::<span class="e">F1</span> => {</span><span class="a t ln" style="left:1530.5px;width:40px;text-align:right;top:512.3px;line-height:18px;height:18px;">187</span><span class="a code" style="left:1613.5px;top:511.8px;line-height:18px;height:18px;">                            <span class="s">self</span>.<span class="p">debug_settings</span>.<span class="p">show_physics</span> = !<span class="s">self</span>.<span class="p">debug_settings</span>.<span class="p">show_physics</span></span><span class="a t ln" style="left:1530.5px;width:40px;text-align:right;top:530.3px;line-height:18px;height:18px;">188</span><span class="a code" style="left:1613.5px;top:529.8px;line-height:18px;height:18px;">                        }</span><span class="a t ln" style="left:1530.5px;width:40px;text-align:right;top:548.3px;line-height:18px;height:18px;">189</span><span class="a code" style="left:1613.5px;top:547.8px;line-height:18px;height:18px;">                        <span class="ty">KeyCode</span>::<span class="e">F2</span> => {</span><span class="a t ln" style="left:1530.5px;width:40px;text-align:right;top:566.3px;line-height:18px;height:18px;">190</span><span class="a code" style="left:1613.5px;top:565.8px;line-height:18px;height:18px;">                            <span class="s">self</span>.<span class="p">debug_settings</span>.<span class="p">show_paths</span> = !<span class="s">self</span>.<span class="p">debug_settings</span>.<span class="p">show_paths</span></span><span class="a t ln" style="left:1530.5px;width:40px;text-align:right;top:584.3px;line-height:18px;height:18px;">191</span><span class="a code" style="left:1613.5px;top:583.8px;line-height:18px;height:18px;">                        }</span><span class="a t ln" style="left:1530.5px;width:40px;text-align:right;top:602.3px;line-height:18px;height:18px;">192</span><span class="a code" style="left:1613.5px;top:601.8px;line-height:18px;height:18px;">                        <span class="ty">KeyCode</span>::<span class="e">F3</span> => {</span><span class="a t ln" style="left:1530.5px;width:40px;text-align:right;top:620.3px;line-height:18px;height:18px;">193</span><span class="a code" style="left:1613.5px;top:619.8px;line-height:18px;height:18px;">                            <span class="s">self</span>.<span class="p">debug_settings</span>.<span class="p">disable_ragdoll</span> =</span><span class="a t ln" style="left:1530.5px;width:40px;text-align:right;top:638.3px;line-height:18px;height:18px;">194</span><span class="a code" style="left:1613.5px;top:637.8px;line-height:18px;height:18px;">                                !<span class="s">self</span>.<span class="p">debug_settings</span>.<span class="p">disable_ragdoll</span></span><span class="a t ln" style="left:1530.5px;width:40px;text-align:right;top:656.3px;line-height:18px;height:18px;">195</span><span class="a code" style="left:1613.5px;top:655.8px;line-height:18px;height:18px;">                        }</span><span class="a t ln" style="left:1530.5px;width:40px;text-align:right;top:674.3px;line-height:18px;height:18px;">196</span><span class="a code" style="left:1613.5px;top:673.8px;line-height:18px;height:18px;">                        <span class="ty">KeyCode</span>::<span class="e">Escape</span> => {</span><span class="a t ln" style="left:1530.5px;width:40px;text-align:right;top:692.3px;line-height:18px;height:18px;">197</span><span class="a code" style="left:1613.5px;top:691.8px;line-height:18px;height:18px;">                            <span class="k">if</span> <span class="k">let</span> <span class="e">Some</span>(menu<span class="h" style="width:62.5px">: &amp;Menu</span>) = <span class="s">self</span>.<span class="p">menu</span>.<span class="f">as_ref</span>() {</span><span class="a t ln" style="left:1530.5px;width:40px;text-align:right;top:710.3px;line-height:18px;height:18px;">198</span><span class="a code" style="left:1613.5px;top:709.8px;line-height:18px;height:18px;">                                menu.<span class="f">switch_visibility</span>(</span><span class="a t ln" style="left:1530.5px;width:40px;text-align:right;top:728.3px;line-height:18px;height:18px;">199</span><span class="a code" style="left:1613.5px;top:727.8px;line-height:18px;height:18px;">                                    ctx.<span class="p">user_interfaces</span>.<span class="f">first</span>()<span class="k">,</span></span><span class="a t ln" style="left:1530.5px;width:40px;text-align:right;top:746.3px;line-height:18px;height:18px;">200</span><span class="a code" style="left:1613.5px;top:745.8px;line-height:18px;height:18px;">                                    <span class="s">self</span>.<span class="p">client</span>.<span class="f">is_some</span>()<span class="k">,</span></span><span class="a t ln" style="left:1530.5px;width:40px;text-align:right;top:764.3px;line-height:18px;height:18px;">201</span><span class="a code" style="left:1613.5px;top:763.8px;line-height:18px;height:18px;">                                )<span class="k">;</span></span><span class="a t ln" style="left:1530.5px;width:40px;text-align:right;top:782.3px;line-height:18px;height:18px;">202</span><span class="a code" style="left:1613.5px;top:781.8px;line-height:18px;height:18px;">                            }</span><span class="a t ln" style="left:1530.5px;width:40px;text-align:right;top:800.3px;line-height:18px;height:18px;">203</span><span class="a code" style="left:1613.5px;top:799.8px;line-height:18px;height:18px;">                        }</span><span class="a t ln" style="left:1530.5px;width:40px;text-align:right;top:818.3px;line-height:18px;height:18px;">204</span><span class="a code" style="left:1613.5px;top:817.8px;line-height:18px;height:18px;">                        <span class="ty">KeyCode</span>::<span class="e">F4</span> => {</span><span class="a t ln" style="left:1530.5px;width:40px;text-align:right;top:836.3px;line-height:18px;height:18px;">205</span><span class="a code" style="left:1613.5px;top:835.8px;line-height:18px;height:18px;">                            <span class="s">self</span>.<span class="p">level</span>.<span class="p">match_timer</span> = <span class="n">3.0</span><span class="k">;</span></span><span class="a t ln" style="left:1530.5px;width:40px;text-align:right;top:854.3px;line-height:18px;height:18px;">206</span><span class="a code" style="left:1613.5px;top:853.8px;line-height:18px;height:18px;">                        }</span><span class="a t ln" style="left:1530.5px;width:40px;text-align:right;top:872.3px;line-height:18px;height:18px;">207</span><span class="a code" style="left:1613.5px;top:871.8px;line-height:18px;height:18px;">                        _ => ()<span class="k">,</span></span><span class="a t ln" style="left:1530.5px;width:40px;text-align:right;top:890.3px;line-height:18px;height:18px;">208</span><span class="a code" style="left:1613.5px;top:889.8px;line-height:18px;height:18px;">                    }</span><span class="a t ln" style="left:1530.5px;width:40px;text-align:right;top:908.3px;line-height:18px;height:18px;">209</span><span class="a code" style="left:1613.5px;top:907.8px;line-height:18px;height:18px;">                }</span><span class="a t ln" style="left:1530.5px;width:40px;text-align:right;top:926.3px;line-height:18px;height:18px;">210</span><span class="a code" style="left:1613.5px;top:925.8px;line-height:18px;height:18px;">            }</span><span class="a t ln" style="left:1530.5px;width:40px;text-align:right;top:944.3px;line-height:18px;height:18px;">211</span><span class="a code" style="left:1613.5px;top:943.8px;line-height:18px;height:18px;">        }</span><span class="a t ln" style="left:1530.5px;width:40px;text-align:right;top:962.3px;line-height:18px;height:18px;">212</span><span class="a code" style="left:1613.5px;top:961.8px;line-height:18px;height:18px;">    }</span><span class="a t ln" style="left:1530.5px;width:40px;text-align:right;top:980.3px;line-height:18px;height:18px;">213</span><span class="a t ln" style="left:1530.5px;width:40px;text-align:right;top:998.3px;line-height:18px;height:18px;">214</span><span class="a code" style="left:1613.5px;top:997.8px;line-height:18px;height:18px;">    <span class="k">fn</span> <span class="fd">on_graphics_context_initialized</span>(&<span class="k">mut</span> <span class="s">self</span><span class="k">,</span> ctx: <span class="tn">PluginContext</span>) {</span><span class="a t ln" style="left:1530.5px;width:40px;text-align:right;top:1016.3px;line-height:18px;height:18px;">215</span><span class="a code" style="left:1613.5px;top:1015.8px;line-height:18px;height:18px;">        <span class="s">self</span>.<span class="p">settings</span><span class="h" style="width:61px">: Settings</span></span><span class="a t ln" style="left:1530.5px;width:40px;text-align:right;top:1034.3px;line-height:18px;height:18px;">216</span><span class="a code" style="left:1613.5px;top:1033.8px;line-height:18px;height:18px;">            .<span class="f">read</span>()<span class="h" style="width:103px">: SettingsDataRef</span></span><svg class="a" style="left:1578px;top:333.8px;" width="16" height="14" viewBox="0 0 16 14"><circle cx="5.5" cy="7.5" r="4" fill="none" stroke="#3592c4" stroke-width="2"/><circle cx="5.5" cy="7.5" r="1.2" fill="#3592c4"/><path d="M12.5 13V2M10 4.5L12.5 1.5L15 4.5" stroke="#e05555" stroke-width="1.3" fill="none"/></svg><svg class="a" style="left:1578px;top:999.8px;" width="16" height="14" viewBox="0 0 16 14"><circle cx="5.5" cy="7.5" r="4" fill="none" stroke="#3592c4" stroke-width="2"/><circle cx="5.5" cy="7.5" r="1.2" fill="#3592c4"/><path d="M12.5 13V2M10 4.5L12.5 1.5L15 4.5" stroke="#e05555" stroke-width="1.3" fill="none"/></svg><div class="a" style="left:1645.5px;top:349.8px;width:1px;height:612px;background:#393939;"></div><div class="a" style="left:1677.5px;top:367.8px;width:1px;height:36px;background:#393939;"></div><div class="a" style="left:1677.5px;top:439.8px;width:1px;height:504px;background:#393939;"></div><div class="a" style="left:1709.5px;top:457.8px;width:1px;height:468px;background:#393939;"></div><div class="a" style="left:1741.5px;top:475.8px;width:1px;height:432px;background:#393939;"></div><div class="a" style="left:1773.5px;top:493.8px;width:1px;height:396px;background:#393939;"></div><div class="a" style="left:1805.5px;top:511.8px;width:1px;height:18px;background:#393939;"></div><div class="a" style="left:1805.5px;top:565.8px;width:1px;height:18px;background:#393939;"></div><div class="a" style="left:1805.5px;top:619.8px;width:1px;height:36px;background:#393939;"></div><div class="a" style="left:1805.5px;top:691.8px;width:1px;height:108px;background:#393939;"></div><div class="a" style="left:1805.5px;top:835.8px;width:1px;height:18px;background:#393939;"></div><div class="a" style="left:1837.5px;top:637.8px;width:1px;height:18px;background:#393939;"></div><div class="a" style="left:1837.5px;top:709.8px;width:1px;height:72px;background:#393939;"></div><div class="a" style="left:1869.5px;top:727.8px;width:1px;height:36px;background:#393939;"></div><div class="a" style="left:1677.5px;top:115.8px;width:1px;height:90px;background:#393939;"></div><div class="a" style="left:1709.5px;top:169.8px;width:1px;height:18px;background:#393939;"></div><div class="a" style="left:1677.5px;top:259.8px;width:1px;height:18px;background:#393939;"></div><div class="a" style="left:1645.5px;top:97.8px;width:1px;height:198px;background:#393939;"></div><div class="a" style="left:1645.5px;top:1015.8px;width:1px;height:36px;background:#393939;"></div><div class="a" style="left:1677.5px;top:1033.8px;width:1px;height:18px;background:#393939;"></div></div></div><svg class="a" style="left:2409px;top:92px;" width="12" height="11" viewBox="0 0 12 11"><path d="M6 0.5L11.7 10.5H0.3Z" fill="#c9952b"/><path d="M6 4V7.5M6 8.5V9.7" stroke="#2b2b2b" stroke-width="1.3"/></svg><span class="a t ui" style="left:2424px;top:89px;line-height:18px;height:18px;color:#787878;">1</span><svg class="a" style="left:2438px;top:92px;" width="12" height="11" viewBox="0 0 12 11"><path d="M6 0.5L11.7 10.5H0.3Z" fill="#6f5f3a"/><path d="M6 4V7.5M6 8.5V9.7" stroke="#2b2b2b" stroke-width="1.3"/></svg><span class="a t ui" style="left:2453px;top:89px;line-height:18px;height:18px;color:#787878;">2</span><svg class="a" style="left:2466px;top:92px;" width="13" height="12" viewBox="0 0 13 12"><path d="M1.5 5.5L5 9L11.5 1.5" stroke="#499c54" stroke-width="1.8" fill="none"/><path d="M1 11L3 9.5L5 11L7 9.5L9 11" stroke="#499c54" stroke-width=".9" fill="none"/></svg><span class="a t ui" style="left:2482px;top:89px;line-height:18px;height:18px;color:#787878;">1</span><svg class="a" style="left:2498px;top:94px;" width="10" height="7" viewBox="0 0 10 7"><path d="M1 6L5 1.5L9 6" stroke="#c8ccce" stroke-width="1.5" fill="none"/></svg><svg class="a" style="left:2519px;top:94px;" width="10" height="7" viewBox="0 0 10 7"><path d="M1 1L5 5.5L9 1" stroke="#c8ccce" stroke-width="1.5" fill="none"/></svg><div class="a" style="left:2522px;top:376px;width:14px;height:1.5px;background:#8a7d5a;"></div><div class="a" style="left:2522px;top:378.5px;width:14px;height:1.5px;background:#8a7d5a;"></div><div class="a" style="left:2522px;top:612px;width:14px;height:1.5px;background:#c75078;"></div><div class="a" style="left:2522px;top:627px;width:14px;height:1.5px;background:#c75078;"></div><div class="a" style="left:2522px;top:630px;width:14px;height:1.5px;background:#c75078;"></div><div class="a" style="left:2522px;top:642px;width:14px;height:1.5px;background:#c75078;"></div><div class="a" style="left:2522px;top:645px;width:14px;height:1.5px;background:#2e8b2e;"></div><div class="a" style="left:2522px;top:656px;width:14px;height:1.5px;background:#c75078;"></div><div class="a" style="left:2522px;top:686px;width:14px;height:1.5px;background:#c75078;"></div><div class="a" style="left:2522px;top:853px;width:14px;height:2px;background:#d09a12;"></div><div class="a" style="left:2526.5px;top:657px;width:8.5px;height:175px;background:#595b5d;"></div><div class="a" style="left:1544px;top:1051px;width:993px;height:25px;background:#3c3f41;"></div><div class="a" style="left:1544px;top:1051px;width:993px;height:1px;background:#323232;"></div><span class="a t ui" style="left:1554px;top:1054.7px;line-height:18px;height:18px;">Plugin for Game</span><svg class="a" style="left:1651px;top:1059.5px;" width="5" height="8" viewBox="0 0 5 8"><path d="M1 1L4 4L1 7" stroke="#6e7073" stroke-width="1" fill="none"/></svg><span class="a t ui" style="left:1664px;top:1054.7px;line-height:18px;height:18px;">update()</span><svg class="a" style="left:1720px;top:1059.5px;" width="5" height="8" viewBox="0 0 5 8"><path d="M1 1L4 4L1 7" stroke="#6e7073" stroke-width="1" fill="none"/></svg><span class="a t ui" style="left:1733px;top:1054.7px;line-height:18px;height:18px;">if let Some(client...</span><div class="a" style="left:1304px;top:1075px;width:1233px;height:1px;background:#323232;"></div><div class="a" style="left:1304px;top:1076px;width:1233px;height:26px;background:#3c3f41;"></div><span class="a t ui" style="left:1309.5px;top:1081px;line-height:18px;height:18px;">Run:</span><svg class="a" style="left:1352.5px;top:1081.5px;" width="16" height="16" viewBox="0 0 16 16"><circle cx="7.5" cy="7.5" r="6.8" fill="none" stroke="#c78d4a" stroke-width="1.6"/><text x="4" y="11" font-family="Liberation Sans,sans-serif" font-size="9.5" font-weight="bold" fill="#c78d4a">R</text><circle cx="13" cy="13.3" r="2.2" fill="#2ad12a"/></svg><span class="a t ui" style="left:1372.5px;top:1081px;line-height:18px;height:18px;">Editor</span><svg class="a" style="left:1410.3px;top:1086px;" width="8" height="8" viewBox="0 0 8 8"><path d="M0.5 0.5L7.5 7.5M7.5 0.5L0.5 7.5" stroke="#6e7073" stroke-width="1"/></svg><div class="a" style="left:1340px;top:1099.5px;width:89px;height:2.5px;background:#747a80;border-radius:1px;"></div><svg class="a" style="left:2490px;top:1082px;" width="14" height="14" viewBox="0 0 14 14"><path d="M13.74 6.12L13.74 7.88L11.73 8.27L11.24 9.44L12.39 11.14L11.14 12.39L9.44 11.24L8.27 11.73L7.88 13.74L6.12 13.74L5.73 11.73L4.56 11.24L2.86 12.39L1.61 11.14L2.76 9.44L2.27 8.27L0.26 7.88L0.26 6.12L2.27 5.73L2.76 4.56L1.61 2.86L2.86 1.61L4.56 2.76L5.73 2.27L6.12 0.26L7.88 0.26L8.27 2.27L9.44 2.76L11.14 1.61L12.39 2.86L11.24 4.56L11.73 5.73Z" fill="#d0d2d4"/><circle cx="7" cy="7" r="2.3" fill="#3c3f41"/></svg><div class="a" style="left:2516.5px;top:1088.3px;width:12px;height:1.7px;background:#d0d2d4;"></div><div class="a" style="left:1304px;top:1102px;width:28px;height:254px;background:#3c3f41;"></div><div class="a" style="left:1331.5px;top:1102px;width:1px;height:254px;background:#323232;"></div><div class="a" style="left:1332.5px;top:1102px;width:28px;height:254px;background:#3c3f41;"></div><svg class="a" style="left:1310px;top:1110px;" width="15" height="15" viewBox="0 0 15 15"><path d="M11.5 5.5A5 5 0 1 0 12 10" stroke="#499c54" stroke-width="2" fill="none"/><path d="M8.5 0.8L14 2.8L10.5 7Z" fill="#499c54"/><rect x="8.5" y="10" width="5" height="5" fill="#c8c8c8"/></svg><svg class="a" style="left:1310px;top:1135.5px;" width="15" height="15" viewBox="0 0 15 15"><path d="M13.5 3.5L11 6L9 4L11.5 1.5A4 4 0 0 0 6.5 6.8L1 12.3L2.7 14L8.2 8.5A4 4 0 0 0 13.5 3.5Z" fill="#afb1b3"/></svg><div class="a" style="left:1307px;top:1159.5px;width:20px;height:1px;background:#515456;"></div><div class="a" style="left:1312px;top:1171px;width:10.5px;height:10.5px;background:#db5860;"></div><div class="a" style="left:1307px;top:1192.5px;width:20px;height:1px;background:#515456;"></div><svg class="a" style="left:1310.5px;top:1203px;" width="14" height="12" viewBox="0 0 14 12"><rect x="0" y="0" width="6" height="5" fill="#afb1b3"/><rect x="7.5" y="0" width="6" height="5" fill="#afb1b3"/><rect x="0" y="6.5" width="13.5" height="5" fill="#afb1b3"/></svg><div class="a" style="left:1307px;top:1225px;width:20px;height:1px;background:#515456;"></div><svg class="a" style="left:1309.5px;top:1234.5px;" width="15" height="15" viewBox="0 0 15 15"><path d="M9 1L14 6L11.5 7L9.5 9.5L9 13L6 10L1.5 14.5L1 14L5 9L2 6L5.5 5.5L8 3.5Z" fill="#afb1b3"/></svg><svg class="a" style="left:1339.5px;top:1111px;" width="14" height="14" viewBox="0 0 14 14"><path d="M7 13V2M2.5 6L7 1.5L11.5 6" stroke="#afb1b3" stroke-width="1.7" fill="none"/></svg><svg class="a" style="left:1339.5px;top:1137px;" width="14" height="14" viewBox="0 0 14 14"><path d="M7 1V12M2.5 8L7 12.5L11.5 8" stroke="#afb1b3" stroke-width="1.7" fill="none"/></svg><svg class="a" style="left:1339.5px;top:1163px;" width="14" height="14" viewBox="0 0 14 14"><path d="M0.5 2H13.5M0.5 7H10.5A2.5 2.5 0 0 1 10.5 12H7M0.5 12H4" stroke="#afb1b3" stroke-width="1.6" fill="none"/><path d="M8.5 9.5L5.5 12L8.5 14.5Z" fill="#afb1b3"/></svg><svg class="a" style="left:1339.5px;top:1188.5px;" width="14" height="14" viewBox="0 0 14 14"><path d="M0.5 2H6M0.5 6.5H6M0.5 12.5H13.5" stroke="#afb1b3" stroke-width="1.6"/><path d="M10 0.5V8.5M7 6L10 9.5L13 6" stroke="#afb1b3" stroke-width="1.6" fill="none"/></svg><svg class="a" style="left:1339px;top:1215.5px;" width="15" height="14" viewBox="0 0 15 14"><rect x="3" y="0.5" width="9" height="3" fill="#afb1b3"/><rect x="0.5" y="4.5" width="14" height="6" fill="#afb1b3"/><rect x="3.5" y="8.5" width="8" height="5" fill="#3c3f41" stroke="#afb1b3" stroke-width="1.3"/></svg><svg class="a" style="left:1340.5px;top:1240px;" width="12" height="14" viewBox="0 0 12 14"><path d="M0.5 2.5H11.5V4H0.5ZM4 1H8V2.5H4ZM1.5 5H10.5V12.5C10.5 13.3 9.8 14 9 14H3C2.2 14 1.5 13.3 1.5 12.5Z" fill="#afb1b3"/></svg><div class="a" style="left:1361px;top:1102px;width:1176px;height:254px;background:#2b2b2b;"></div><div class="a" style="left:1361px;top:1102px;width:1166px;height:254px;overflow:hidden;"><div class="a" style="left:-1361px;top:-1102px;"><span class="a code" style="left:1372.5px;top:1090.5px;line-height:18px;color:#bbbbbb;">[INFO]: Associated scene rendering data was re-created for `1:1` (4294967295:4294967295), because render frame size was changed. Old is 878x970,</span><span class="a code" style="left:1372.5px;top:1108.5px;line-height:18px;color:#bbbbbb;">[INFO]: A new associated scene rendering data was created for scene 4294967295:4294967295!</span><span class="a code" style="left:1372.5px;top:1126.5px;line-height:18px;color:#bbbbbb;">[INFO]: A new associated scene rendering data was created for scene 4294967295:4294967295!</span><span class="a code" style="left:1372.5px;top:1144.5px;line-height:18px;color:#bbbbbb;">[INFO]: A new associated scene rendering data was created for scene 4294967295:4294967295!</span><span class="a code" style="left:1372.5px;top:1162.5px;line-height:18px;color:#bbbbbb;">[INFO]: A new associated scene rendering data was created for scene 4294967295:4294967295!</span><span class="a code" style="left:1372.5px;top:1180.5px;line-height:18px;color:#bbbbbb;">[INFO]: Settings were successfully saved!</span><span class="a code" style="left:1372.5px;top:1198.5px;line-height:18px;color:#bbbbbb;">[INFO]: A new associated scene rendering data was created for scene 4294967295:4294967295!</span><span class="a code" style="left:1372.5px;top:1216.5px;line-height:18px;color:#bbbbbb;">[INFO]: A new associated scene rendering data was created for scene 4294967295:4294967295!</span><span class="a code" style="left:1372.5px;top:1234.5px;line-height:18px;color:#bbbbbb;">[INFO]: A new associated scene rendering data was created for scene 4294967295:4294967295!</span><span class="a code" style="left:1372.5px;top:1252.5px;line-height:18px;color:#bbbbbb;">[INFO]: A new associated scene rendering data was created for scene 4294967295:4294967295!</span><span class="a code" style="left:1372.5px;top:1270.5px;line-height:18px;color:#bbbbbb;">[INFO]: A new associated scene rendering data was created for scene 4294967295:4294967295!</span><span class="a code" style="left:1372.5px;top:1288.5px;line-height:18px;color:#bbbbbb;">[INFO]: Settings were successfully saved!</span><span class="a code" style="left:1372.5px;top:1306.5px;line-height:18px;color:#bbbbbb;">[INFO]: Settings were successfully saved!</span></div></div><div class="a" style="left:1373px;top:1347.5px;width:26px;height:7px;background:#595b5d;"></div><div class="a" style="left:2527px;top:1328.5px;width:8.5px;height:26.5px;background:#595b5d;"></div><div class="a" style="left:1282px;top:1355.5px;width:1278px;height:1px;background:#323232;"></div><div class="a" style="left:1282px;top:1356.5px;width:1278px;height:23px;background:#3c3f41;"></div><div class="a" style="left:1352px;top:1356.5px;width:56px;height:23px;background:#2d2f30;"></div><svg class="a" style="left:1311px;top:1361.8px;" width="12" height="14" viewBox="0 0 12 14"><path d="M3 1V13M3 9C3 6 9.5 7.5 9.5 3" stroke="#afb1b3" stroke-width="1.6" fill="none"/><circle cx="3" cy="2.2" r="1.8" fill="#afb1b3"/><circle cx="9.5" cy="2.8" r="1.8" fill="#afb1b3"/><circle cx="3" cy="11.8" r="1.8" fill="#afb1b3"/></svg><span class="a t ui" style="left:1328px;top:1359.8px;line-height:18px;height:18px;">Git</span><svg class="a" style="left:1362px;top:1362.8px;" width="14" height="13" viewBox="0 0 14 13"><path d="M1 0.5V11.5L10 6Z" fill="#afb1b3"/><circle cx="10.8" cy="10.5" r="2" fill="#2ad12a"/></svg><span class="a t ui" style="left:1378.3px;top:1359.8px;line-height:18px;height:18px;color:#e4e4e4;">Run</span><svg class="a" style="left:1419.5px;top:1363.8px;" width="12" height="10" viewBox="0 0 12 10"><path d="M0 1H2M0 5H2M0 9H2M3.5 1H11.5M3.5 5H11.5M3.5 9H11.5" stroke="#afb1b3" stroke-width="1.6"/></svg><span class="a t ui" style="left:1435px;top:1359.8px;line-height:18px;height:18px;">TODO</span><svg class="a" style="left:1487.5px;top:1363.8px;" width="12" height="10" viewBox="0 0 12 10"><path d="M0 1H11.5M0 5H8M0 9H10" stroke="#afb1b3" stroke-width="1.7"/></svg><span class="a t ui" style="left:1504.3px;top:1359.8px;line-height:18px;height:18px;letter-spacing:-0.55px;">Messages</span><svg class="a" style="left:1575.5px;top:1362.3px;" width="12" height="12" viewBox="0 0 12 12"><circle cx="6" cy="6" r="5.7" fill="#db5860"/><path d="M6 2.5V7M6 8.3V9.8" stroke="#3c3f41" stroke-width="1.7"/></svg><span class="a t ui" style="left:1592px;top:1359.8px;line-height:18px;height:18px;letter-spacing:-0.4px;">Problems</span><svg class="a" style="left:1660.5px;top:1362.8px;" width="12" height="11" viewBox="0 0 12 11"><rect x="0" y="0" width="12" height="11" fill="#afb1b3"/><path d="M2 2.5L5 5L2 7.5M6 8.5H10" stroke="#3c3f41" stroke-width="1.2" fill="none"/></svg><span class="a t ui" style="left:1677px;top:1359.8px;line-height:18px;height:18px;">Terminal</span><svg class="a" style="left:1742px;top:1362.3px;" width="13" height="13" viewBox="0 0 13 13"><path d="M4 0.5H9L12.5 4V9L9 12.5H4L0.5 9V4Z" fill="#afb1b3"/><path d="M5 3.5V9.5L9.5 6.5Z" fill="#3c3f41"/></svg><span class="a t ui" style="left:1759.3px;top:1359.8px;line-height:18px;height:18px;letter-spacing:-0.7px;">Services</span><svg class="a" style="left:1817.5px;top:1362.3px;" width="14" height="13" viewBox="0 0 14 13"><path d="M1 4.5L4.5 1L7.5 2L6 3.5L12.5 10.5L11 12L4.5 5L3 6.5Z" fill="#afb1b3"/></svg><span class="a t ui" style="left:1835.5px;top:1359.8px;line-height:18px;height:18px;">Build</span><div class="a" style="left:1282px;top:1379.5px;width:1278px;height:1px;background:#323232;"></div><div class="a" style="left:1282px;top:1380.5px;width:1278px;height:18px;background:#3c3f41;"></div><div class="a" style="left:1282px;top:1398.5px;width:1278px;height:4.5px;background:#2b2b2b;"></div><div class="a" style="left:1322px;top:1398.5px;width:48px;height:4.5px;background:#4a4d4f;"></div><svg class="a" style="left:1293px;top:1383px;" width="13" height="12" viewBox="0 0 13 12"><rect x="0.5" y="2.5" width="9" height="9" fill="none" stroke="#afb1b3" stroke-width="1"/><path d="M2.5 2.5V0.5H12.5V9.5H9.5" fill="none" stroke="#afb1b3" stroke-width="1"/></svg><svg class="a" style="left:1860px;top:1382.5px;" width="13" height="13" viewBox="0 0 14 14"><path d="M13.74 6.12L13.74 7.88L11.73 8.27L11.24 9.44L12.39 11.14L11.14 12.39L9.44 11.24L8.27 11.73L7.88 13.74L6.12 13.74L5.73 11.73L4.56 11.24L2.86 12.39L1.61 11.14L2.76 9.44L2.27 8.27L0.26 7.88L0.26 6.12L2.27 5.73L2.76 4.56L1.61 2.86L2.86 1.61L4.56 2.76L5.73 2.27L6.12 0.26L7.88 0.26L8.27 2.27L9.44 2.76L11.14 1.61L12.39 2.86L11.24 4.56L11.73 5.73Z" fill="#d0d2d4"/><circle cx="7" cy="7" r="2.3" fill="#3c3f41"/></svg><span class="a t ui" style="left:1877.5px;top:1380px;line-height:18px;height:18px;letter-spacing:-0.4px;">Cargo Check</span><span class="a t ui" style="left:1956.3px;top:1380px;line-height:18px;height:18px;letter-spacing:-0.4px;">161:27</span><svg class="a" style="left:2002px;top:1383px;" width="14" height="12" viewBox="0 0 14 12"><path d="M12.5 1C6 0.5 1 3 1 7.5C1 10 3 11.5 5.5 11.5C10.5 11.5 12.5 6 12.5 1Z" fill="none" stroke="#afb1b3" stroke-width="1.2"/></svg><span class="a t ui" style="left:2029.3px;top:1380px;line-height:18px;height:18px;letter-spacing:-0.4px;">CRLF</span><span class="a t ui" style="left:2068px;top:1380px;line-height:18px;height:18px;letter-spacing:-0.4px;">UTF-8</span><svg class="a" style="left:2114px;top:1383px;" width="13" height="13" viewBox="0 0 13 13"><path d="M0.5 0.5H9.5V5M0.5 0.5V11.5H5" stroke="#afb1b3" stroke-width="1" fill="none"/><path d="M2.5 3H7.5M2.5 5.5H6M2.5 8H5" stroke="#afb1b3" stroke-width="1"/><circle cx="9" cy="9" r="2.5" stroke="#afb1b3" stroke-width="1.1" fill="none"/><path d="M10.8 10.8L13 13" stroke="#afb1b3" stroke-width="1.2"/></svg><span class="a t ui" style="left:2132.5px;top:1380px;line-height:18px;height:18px;letter-spacing:-0.4px;">4 spaces</span><svg class="a" style="left:2190.5px;top:1382px;" width="10" height="14" viewBox="0 0 10 14"><path d="M2.5 1V13M2.5 9C2.5 6 8 7.5 8 3" stroke="#afb1b3" stroke-width="1.4" fill="none"/><circle cx="2.5" cy="2" r="1.5" fill="#afb1b3"/><circle cx="8" cy="2.5" r="1.5" fill="#afb1b3"/><circle cx="2.5" cy="12" r="1.5" fill="#afb1b3"/></svg><span class="a t ui" style="left:2206.3px;top:1380px;line-height:18px;height:18px;">main</span><span class="a t ui" style="left:2243.8px;top:1380px;line-height:18px;height:18px;">x86_64-pc-windows-msvc</span><svg class="a" style="left:2392.5px;top:1382.5px;" width="12" height="12" viewBox="0 0 12 12"><rect x="3" y="5.5" width="8.5" height="6" fill="#afb1b3"/><path d="M1 5.5V3.5A2.2 2.2 0 0 1 5.4 3.5V5.5" stroke="#afb1b3" stroke-width="1.3" fill="none"/></svg><div class="a" style="left:2418.3px;top:1380.8px;width:128.5px;height:16px;border:1px solid #499c54;border-radius:8px;box-sizing:border-box;"></div><span class="a t ui" style="left:2418.5px;width:128px;text-align:center;top:1380px;line-height:18px;height:18px;color:#499c54;">Non-commercial use</span></div></body></html>
